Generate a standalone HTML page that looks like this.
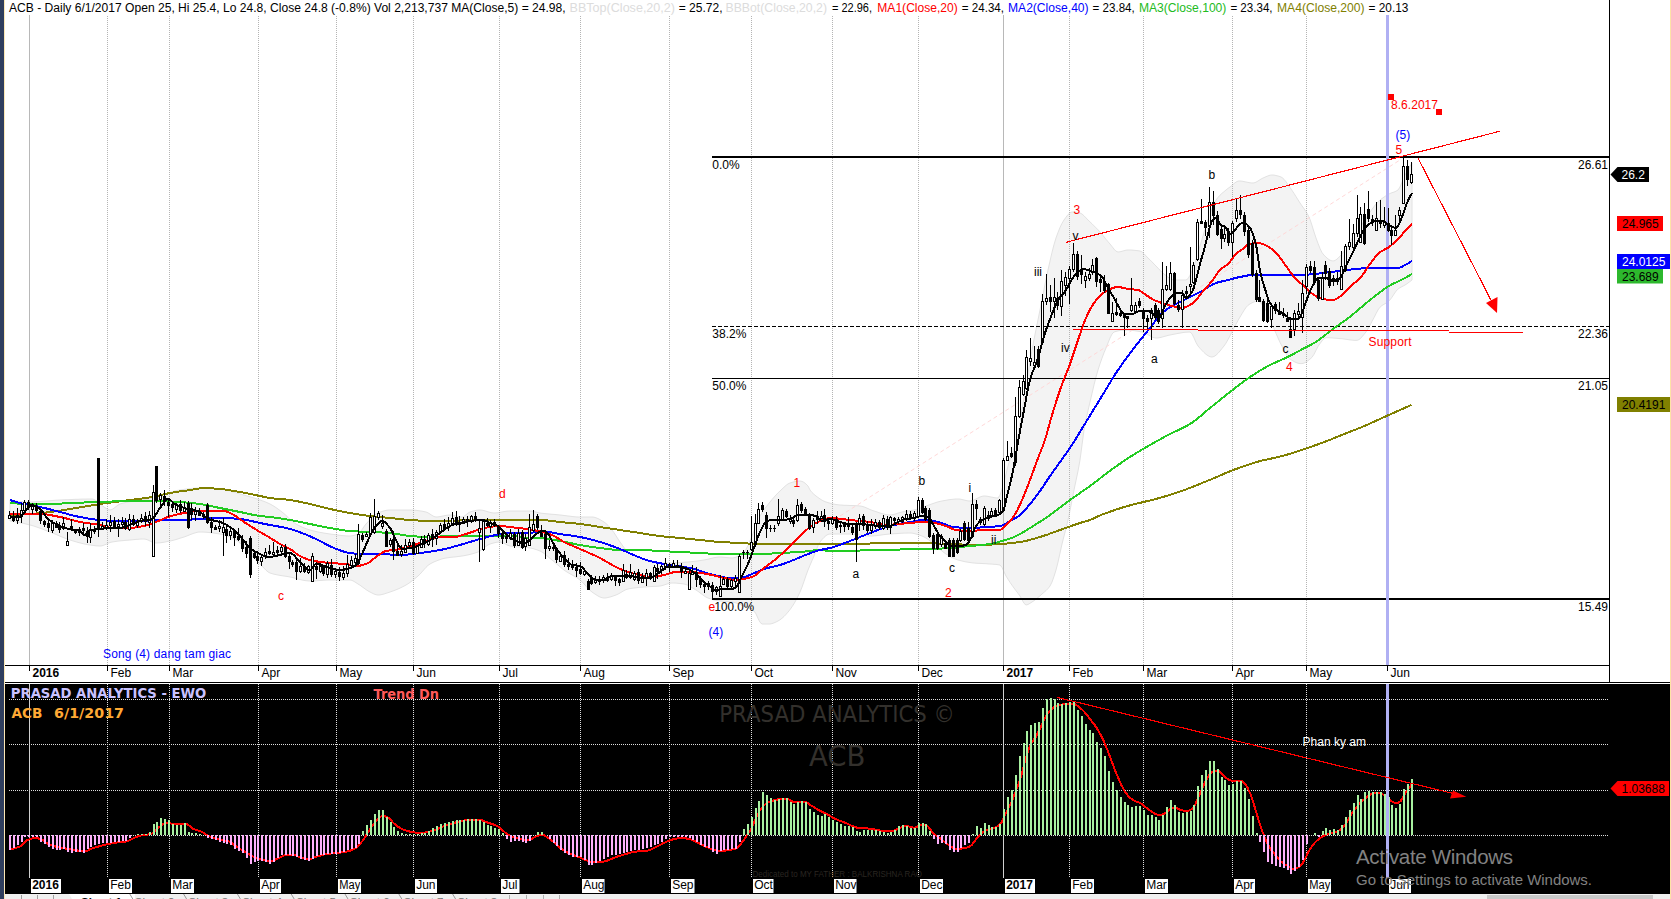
<!DOCTYPE html>
<html><head><meta charset="utf-8"><title>ACB - Daily</title>
<style>html,body{margin:0;padding:0;background:#fff;overflow:hidden}body{width:1671px;height:899px;position:relative}</style>
</head><body>
<svg width="1671" height="899" viewBox="0 0 1671 899" style="position:absolute;left:0;top:0;font-family:'Liberation Sans', sans-serif;font-size:12px">
<rect x="0" y="0" width="1671" height="899" fill="#fff"/>
<rect x="0" y="0" width="4" height="899" fill="#2f3e5e"/>
<rect x="4" y="0" width="1" height="899" fill="#fbe7b5"/>
<rect x="1670" y="0" width="1" height="899" fill="#fde3a7"/>
<path d="M10.0 500.0 L12.0 500.3 L14.0 500.6 L16.0 500.9 L18.0 501.2 L20.0 501.4 L22.0 501.6 L24.0 501.8 L26.0 501.9 L28.0 502.0 L30.0 502.0 L32.0 502.0 L34.0 501.9 L36.0 501.8 L38.0 501.7 L40.0 501.6 L42.0 501.4 L44.0 501.2 L46.0 501.1 L48.0 500.9 L50.0 500.7 L52.0 500.5 L54.0 500.4 L56.0 500.2 L58.0 500.1 L60.0 500.0 L62.0 499.9 L64.0 499.8 L66.0 499.7 L68.0 499.7 L70.0 499.6 L72.0 499.5 L74.0 499.4 L76.0 499.3 L78.0 499.3 L80.0 499.2 L82.0 499.1 L84.0 499.1 L86.0 499.1 L88.0 499.0 L90.0 499.0 L92.0 499.0 L94.0 499.4 L96.0 500.6 L98.0 502.2 L100.0 503.9 L102.0 505.6 L104.0 507.0 L106.0 508.3 L108.0 509.5 L110.0 510.0 L112.0 509.5 L114.0 508.2 L116.0 506.6 L118.0 505.0 L120.0 504.0 L122.0 503.4 L124.0 502.9 L126.0 502.4 L128.0 502.0 L130.0 501.6 L132.0 501.3 L134.0 501.0 L136.0 500.7 L138.0 500.4 L140.0 500.1 L142.0 499.8 L144.0 499.5 L146.0 499.2 L148.0 498.8 L150.0 498.4 L152.0 498.0 L154.0 497.5 L156.0 497.0 L158.0 496.4 L160.0 495.7 L162.0 495.1 L164.0 494.4 L166.0 493.7 L168.0 493.0 L170.0 492.4 L172.0 491.8 L174.0 491.2 L176.0 490.8 L178.0 490.3 L180.0 490.0 L182.0 489.7 L184.0 489.4 L186.0 489.1 L188.0 488.9 L190.0 488.6 L192.0 488.4 L194.0 488.3 L196.0 488.1 L198.0 488.0 L200.0 488.0 L202.0 488.0 L204.0 488.1 L206.0 488.1 L208.0 488.2 L210.0 488.3 L212.0 488.4 L214.0 488.5 L216.0 488.7 L218.0 488.8 L220.0 489.0 L222.0 489.2 L224.0 489.6 L226.0 490.0 L228.0 490.5 L230.0 491.0 L232.0 491.6 L234.0 492.2 L236.0 492.8 L238.0 493.4 L240.0 494.0 L242.0 494.5 L244.0 495.1 L246.0 495.7 L248.0 496.2 L250.0 496.8 L252.0 497.4 L254.0 498.0 L256.0 498.7 L258.0 499.3 L260.0 500.0 L262.0 500.7 L264.0 501.4 L266.0 502.2 L268.0 503.1 L270.0 504.0 L272.0 505.1 L274.0 506.3 L276.0 507.6 L278.0 509.0 L280.0 510.5 L282.0 512.0 L284.0 513.6 L286.0 515.4 L288.0 517.3 L290.0 519.3 L292.0 521.1 L294.0 522.7 L296.0 524.0 L298.0 525.1 L300.0 526.1 L302.0 527.1 L304.0 527.9 L306.0 528.7 L308.0 529.4 L310.0 530.0 L312.0 530.5 L314.0 531.0 L316.0 531.5 L318.0 532.0 L320.0 532.4 L322.0 532.7 L324.0 533.1 L326.0 533.4 L328.0 533.7 L330.0 534.0 L332.0 534.3 L334.0 534.5 L336.0 534.8 L338.0 535.1 L340.0 535.3 L342.0 535.6 L344.0 535.7 L346.0 535.9 L348.0 536.0 L350.0 536.0 L352.0 535.8 L354.0 535.4 L356.0 534.8 L358.0 534.0 L360.0 532.4 L362.0 529.7 L364.0 526.6 L366.0 524.0 L368.0 521.8 L370.0 519.6 L372.0 517.5 L374.0 515.6 L376.0 514.1 L378.0 513.0 L380.0 512.2 L382.0 511.5 L384.0 510.9 L386.0 510.4 L388.0 510.1 L390.0 510.0 L392.0 510.0 L394.0 510.0 L396.0 510.0 L398.0 510.0 L400.0 510.0 L402.0 510.0 L404.0 510.0 L406.0 510.0 L408.0 510.0 L410.0 510.0 L412.0 510.0 L414.0 510.2 L416.0 510.3 L418.0 510.6 L420.0 510.9 L422.0 511.2 L424.0 511.6 L426.0 512.0 L428.0 512.8 L430.0 514.1 L432.0 515.4 L434.0 516.5 L436.0 517.0 L438.0 516.9 L440.0 516.6 L442.0 516.2 L444.0 515.8 L446.0 515.4 L448.0 515.1 L450.0 515.0 L452.0 515.1 L454.0 515.5 L456.0 516.0 L458.0 516.5 L460.0 516.9 L462.0 517.0 L464.0 516.3 L466.0 514.8 L468.0 513.1 L470.0 512.0 L472.0 511.4 L474.0 510.9 L476.0 510.4 L478.0 510.1 L480.0 510.0 L482.0 510.2 L484.0 510.6 L486.0 511.2 L488.0 511.8 L490.0 512.4 L492.0 512.8 L494.0 513.0 L496.0 512.9 L498.0 512.7 L500.0 512.4 L502.0 512.0 L504.0 511.6 L506.0 511.3 L508.0 511.1 L510.0 511.0 L512.0 511.0 L514.0 511.0 L516.0 511.0 L518.0 511.0 L520.0 511.0 L522.0 511.0 L524.0 511.0 L526.0 511.0 L528.0 511.0 L530.0 511.0 L532.0 511.2 L534.0 511.6 L536.0 512.1 L538.0 512.6 L540.0 513.0 L542.0 513.3 L544.0 513.5 L546.0 513.7 L548.0 513.9 L550.0 514.1 L552.0 514.3 L554.0 514.4 L556.0 514.6 L558.0 514.8 L560.0 515.0 L562.0 515.2 L564.0 515.5 L566.0 515.7 L568.0 516.0 L570.0 516.2 L572.0 516.5 L574.0 516.7 L576.0 516.9 L578.0 517.0 L580.0 517.0 L582.0 517.0 L584.0 517.0 L586.0 517.0 L588.0 517.0 L590.0 517.0 L592.0 517.0 L594.0 517.2 L596.0 517.8 L598.0 518.6 L600.0 519.6 L602.0 520.8 L604.0 522.0 L606.0 523.5 L608.0 525.4 L610.0 527.6 L612.0 530.0 L614.0 532.7 L616.0 535.8 L618.0 539.0 L620.0 542.0 L622.0 544.8 L624.0 547.6 L626.0 550.1 L628.0 552.0 L630.0 553.4 L632.0 554.5 L634.0 555.5 L636.0 556.4 L638.0 557.2 L640.0 558.0 L642.0 558.8 L644.0 559.7 L646.0 560.4 L648.0 561.1 L650.0 561.7 L652.0 562.0 L654.0 562.2 L656.0 562.4 L658.0 562.6 L660.0 562.7 L662.0 562.8 L664.0 562.9 L666.0 563.0 L668.0 563.0 L670.0 563.0 L672.0 562.9 L674.0 562.9 L676.0 562.8 L678.0 562.7 L680.0 562.6 L682.0 562.4 L684.0 562.3 L686.0 562.1 L688.0 562.0 L690.0 561.8 L692.0 561.6 L694.0 561.4 L696.0 561.2 L698.0 560.9 L700.0 560.6 L702.0 560.3 L704.0 560.0 L706.0 559.6 L708.0 559.2 L710.0 558.7 L712.0 558.2 L714.0 557.7 L716.0 557.4 L718.0 557.1 L720.0 557.0 L722.0 557.1 L724.0 557.3 L726.0 557.5 L728.0 557.7 L730.0 557.9 L732.0 558.0 L734.0 557.8 L736.0 557.2 L738.0 556.2 L740.0 555.0 L742.0 553.6 L744.0 552.0 L746.0 549.4 L748.0 545.4 L750.0 540.7 L752.0 536.0 L754.0 531.1 L756.0 525.6 L758.0 520.3 L760.0 516.0 L762.0 512.6 L764.0 509.6 L766.0 507.0 L768.0 504.5 L770.0 502.0 L772.0 499.6 L774.0 497.2 L776.0 495.0 L778.0 492.9 L780.0 491.0 L782.0 489.1 L784.0 487.2 L786.0 485.4 L788.0 483.9 L790.0 483.0 L792.0 482.4 L794.0 481.8 L796.0 481.4 L798.0 481.1 L800.0 481.0 L802.0 481.4 L804.0 482.4 L806.0 484.0 L808.0 486.0 L810.0 490.0 L812.0 492.5 L814.0 494.4 L816.0 496.0 L818.0 497.5 L820.0 498.9 L822.0 500.2 L824.0 501.2 L826.0 502.0 L828.0 502.6 L830.0 503.2 L832.0 503.7 L834.0 504.1 L836.0 504.5 L838.0 504.8 L840.0 505.0 L842.0 505.1 L844.0 505.3 L846.0 505.3 L848.0 505.4 L850.0 505.5 L852.0 505.5 L854.0 505.6 L856.0 505.7 L858.0 505.8 L860.0 506.0 L862.0 506.3 L864.0 506.9 L866.0 507.7 L868.0 508.6 L870.0 509.5 L872.0 510.3 L874.0 511.0 L876.0 511.6 L878.0 512.3 L880.0 513.0 L882.0 513.6 L884.0 514.1 L886.0 514.6 L888.0 514.9 L890.0 515.0 L892.0 514.8 L894.0 514.4 L896.0 513.8 L898.0 513.1 L900.0 512.5 L902.0 512.0 L904.0 511.6 L906.0 511.3 L908.0 511.0 L910.0 510.7 L912.0 510.4 L914.0 510.0 L916.0 509.5 L918.0 508.9 L920.0 508.2 L922.0 507.4 L924.0 506.7 L926.0 506.0 L928.0 505.3 L930.0 504.6 L932.0 503.9 L934.0 503.2 L936.0 502.5 L938.0 501.9 L940.0 501.4 L942.0 501.0 L944.0 500.6 L946.0 500.3 L948.0 499.9 L950.0 499.6 L952.0 499.4 L954.0 499.2 L956.0 499.0 L958.0 499.0 L960.0 499.1 L962.0 499.5 L964.0 500.0 L966.0 500.5 L968.0 500.9 L970.0 501.0 L972.0 500.7 L974.0 500.0 L976.0 499.0 L978.0 498.0 L980.0 497.0 L982.0 496.3 L984.0 496.0 L986.0 496.1 L988.0 496.4 L990.0 496.8 L992.0 497.2 L994.0 497.6 L996.0 497.9 L998.0 498.0 L1000.0 495.2 L1002.0 489.2 L1004.0 482.6 L1006.0 474.1 L1008.0 466.0 L1010.0 459.5 L1012.0 453.6 L1014.0 448.0 L1016.0 443.0 L1018.0 435.6 L1020.0 423.2 L1022.0 410.0 L1024.0 397.8 L1026.0 385.5 L1028.0 373.2 L1030.0 361.3 L1032.0 350.0 L1034.0 339.5 L1036.0 329.6 L1038.0 319.8 L1040.0 310.0 L1042.0 299.8 L1044.0 289.4 L1046.0 279.4 L1048.0 270.0 L1050.0 261.1 L1052.0 252.4 L1054.0 244.6 L1056.0 238.0 L1058.0 232.5 L1060.0 227.5 L1062.0 223.3 L1064.0 220.0 L1066.0 217.2 L1068.0 214.6 L1070.0 212.7 L1072.0 212.0 L1074.0 212.1 L1076.0 212.3 L1078.0 212.6 L1080.0 213.0 L1082.0 214.0 L1084.0 215.8 L1086.0 217.9 L1088.0 220.0 L1090.0 221.9 L1092.0 223.8 L1094.0 225.8 L1096.0 227.8 L1098.0 229.8 L1100.0 232.0 L1102.0 234.3 L1104.0 236.8 L1106.0 239.3 L1108.0 241.7 L1110.0 244.0 L1112.0 246.5 L1114.0 249.1 L1116.0 251.2 L1118.0 252.0 L1120.0 251.8 L1122.0 251.3 L1124.0 250.7 L1126.0 250.2 L1128.0 250.0 L1130.0 250.0 L1132.0 250.1 L1134.0 250.3 L1136.0 250.5 L1138.0 250.7 L1140.0 251.0 L1142.0 251.9 L1144.0 253.7 L1146.0 255.9 L1148.0 258.0 L1150.0 259.9 L1152.0 261.9 L1154.0 264.0 L1156.0 266.0 L1158.0 268.1 L1160.0 270.2 L1162.0 272.3 L1164.0 274.0 L1166.0 275.6 L1168.0 277.2 L1170.0 278.6 L1172.0 279.6 L1174.0 280.0 L1176.0 280.0 L1178.0 280.0 L1180.0 280.0 L1182.0 280.0 L1184.0 280.0 L1186.0 280.0 L1188.0 278.7 L1190.0 275.3 L1192.0 270.8 L1194.0 266.0 L1196.0 260.2 L1198.0 253.1 L1200.0 246.0 L1202.0 239.3 L1204.0 232.5 L1206.0 226.0 L1208.0 220.0 L1210.0 214.2 L1212.0 208.6 L1214.0 203.7 L1216.0 200.0 L1218.0 197.4 L1220.0 195.2 L1222.0 193.3 L1224.0 191.7 L1226.0 190.0 L1228.0 188.4 L1230.0 187.0 L1232.0 185.4 L1234.0 183.6 L1236.0 182.1 L1238.0 181.1 L1240.0 181.0 L1242.0 181.2 L1244.0 181.6 L1246.0 182.0 L1248.0 182.4 L1250.0 182.8 L1252.0 183.0 L1254.0 182.9 L1256.0 182.2 L1258.0 181.0 L1260.0 179.7 L1262.0 178.5 L1264.0 177.6 L1266.0 176.7 L1268.0 175.9 L1270.0 175.2 L1272.0 175.0 L1274.0 175.1 L1276.0 175.5 L1278.0 176.0 L1280.0 176.6 L1282.0 177.5 L1284.0 179.3 L1286.0 181.8 L1288.0 184.6 L1290.0 187.6 L1292.0 190.4 L1294.0 193.4 L1296.0 196.6 L1298.0 199.8 L1300.0 203.0 L1302.0 205.9 L1304.0 208.7 L1306.0 211.6 L1308.0 215.0 L1310.0 219.4 L1312.0 225.4 L1314.0 232.0 L1316.0 238.0 L1318.0 243.4 L1320.0 248.5 L1322.0 252.6 L1324.0 255.1 L1326.0 257.1 L1328.0 258.9 L1330.0 260.2 L1332.0 260.9 L1334.0 260.9 L1336.0 259.9 L1338.0 258.2 L1340.0 256.1 L1342.0 254.0 L1344.0 251.5 L1346.0 248.3 L1348.0 244.9 L1350.0 241.5 L1352.0 238.5 L1354.0 235.7 L1356.0 233.0 L1358.0 230.3 L1360.0 227.5 L1362.0 224.5 L1364.0 221.3 L1366.0 218.1 L1368.0 214.9 L1370.0 212.0 L1372.0 209.3 L1374.0 206.6 L1376.0 204.1 L1378.0 201.9 L1380.0 200.1 L1382.0 198.5 L1384.0 197.1 L1386.0 195.7 L1388.0 194.6 L1390.0 193.5 L1392.0 192.7 L1394.0 192.1 L1396.0 191.2 L1398.0 190.0 L1400.0 187.0 L1402.0 182.2 L1404.0 177.1 L1406.0 173.1 L1408.0 169.5 L1410.0 166.1 L1412.0 163.0 L1412.0 280.0 L1410.0 281.5 L1408.0 283.0 L1406.0 284.4 L1404.0 285.6 L1402.0 286.6 L1400.0 287.7 L1398.0 289.0 L1396.0 291.2 L1394.0 294.1 L1392.0 297.2 L1390.0 299.9 L1388.0 301.8 L1386.0 303.1 L1384.0 304.3 L1382.0 305.5 L1380.0 307.2 L1378.0 309.9 L1376.0 313.7 L1374.0 317.7 L1372.0 321.3 L1370.0 325.2 L1368.0 328.9 L1366.0 331.9 L1364.0 334.4 L1362.0 336.8 L1360.0 338.9 L1358.0 340.1 L1356.0 340.4 L1354.0 340.3 L1352.0 340.1 L1350.0 339.9 L1348.0 339.6 L1346.0 339.3 L1344.0 339.0 L1342.0 338.7 L1340.0 338.6 L1338.0 338.4 L1336.0 338.2 L1334.0 338.1 L1332.0 337.9 L1330.0 337.8 L1328.0 337.7 L1326.0 337.7 L1324.0 338.7 L1322.0 340.9 L1320.0 343.6 L1318.0 346.4 L1316.0 350.3 L1314.0 354.3 L1312.0 357.3 L1310.0 359.1 L1308.0 360.7 L1306.0 362.1 L1304.0 363.1 L1302.0 363.6 L1300.0 363.6 L1298.0 363.2 L1296.0 362.5 L1294.0 361.5 L1292.0 360.3 L1290.0 359.0 L1288.0 356.8 L1286.0 353.7 L1284.0 350.1 L1282.0 346.2 L1280.0 342.3 L1278.0 337.9 L1276.0 333.3 L1274.0 328.7 L1272.0 324.1 L1270.0 319.2 L1268.0 314.6 L1266.0 310.6 L1264.0 307.5 L1262.0 304.4 L1260.0 302.0 L1258.0 301.0 L1256.0 301.2 L1254.0 301.9 L1252.0 302.8 L1250.0 303.9 L1248.0 305.3 L1246.0 307.5 L1244.0 310.4 L1242.0 313.7 L1240.0 317.0 L1238.0 320.5 L1236.0 324.2 L1234.0 328.0 L1232.0 331.8 L1230.0 335.8 L1228.0 339.6 L1226.0 343.1 L1224.0 346.0 L1222.0 348.5 L1220.0 351.0 L1218.0 353.3 L1216.0 355.2 L1214.0 356.5 L1212.0 357.0 L1210.0 356.7 L1208.0 355.7 L1206.0 354.3 L1204.0 352.5 L1202.0 350.5 L1200.0 348.3 L1198.0 346.0 L1196.0 342.5 L1194.0 337.9 L1192.0 333.8 L1190.0 332.0 L1188.0 332.1 L1186.0 332.2 L1184.0 332.4 L1182.0 332.7 L1180.0 333.1 L1178.0 333.4 L1176.0 333.8 L1174.0 334.2 L1172.0 334.6 L1170.0 335.0 L1168.0 335.4 L1166.0 336.0 L1164.0 336.5 L1162.0 337.1 L1160.0 337.6 L1158.0 337.9 L1156.0 338.0 L1154.0 337.7 L1152.0 337.0 L1150.0 335.9 L1148.0 334.7 L1146.0 333.6 L1144.0 332.6 L1142.0 332.0 L1140.0 331.6 L1138.0 331.2 L1136.0 330.9 L1134.0 330.6 L1132.0 330.4 L1130.0 330.2 L1128.0 330.0 L1126.0 330.0 L1124.0 330.1 L1122.0 330.2 L1120.0 330.5 L1118.0 330.9 L1116.0 331.4 L1114.0 332.0 L1112.0 334.0 L1110.0 338.0 L1108.0 343.0 L1106.0 348.0 L1104.0 352.8 L1102.0 358.1 L1100.0 363.8 L1098.0 370.0 L1096.0 377.0 L1094.0 384.9 L1092.0 393.4 L1090.0 402.0 L1088.0 410.5 L1086.0 419.5 L1084.0 430.0 L1082.0 444.9 L1080.0 460.0 L1078.0 471.0 L1076.0 480.5 L1074.0 490.0 L1072.0 500.2 L1070.0 510.5 L1068.0 520.0 L1066.0 528.3 L1064.0 536.1 L1062.0 544.0 L1060.0 553.0 L1058.0 562.2 L1056.0 570.0 L1054.0 576.4 L1052.0 582.0 L1050.0 586.0 L1048.0 588.6 L1046.0 590.6 L1044.0 592.3 L1042.0 594.0 L1040.0 595.8 L1038.0 597.5 L1036.0 599.2 L1034.0 600.7 L1032.0 602.0 L1030.0 603.3 L1028.0 604.5 L1026.0 605.0 L1024.0 603.3 L1022.0 599.6 L1020.0 596.0 L1018.0 593.3 L1016.0 590.7 L1014.0 588.0 L1012.0 585.2 L1010.0 582.3 L1008.0 579.2 L1006.0 576.0 L1004.0 571.8 L1002.0 567.3 L1000.0 565.0 L998.0 564.7 L996.0 564.4 L994.0 564.3 L992.0 564.1 L990.0 564.0 L988.0 563.9 L986.0 563.7 L984.0 563.6 L982.0 563.5 L980.0 563.4 L978.0 563.3 L976.0 563.2 L974.0 563.0 L972.0 562.8 L970.0 562.5 L968.0 562.2 L966.0 561.9 L964.0 561.5 L962.0 561.0 L960.0 560.5 L958.0 560.0 L956.0 559.3 L954.0 558.5 L952.0 557.5 L950.0 556.4 L948.0 555.2 L946.0 554.0 L944.0 552.6 L942.0 551.0 L940.0 549.2 L938.0 547.4 L936.0 545.6 L934.0 544.0 L932.0 542.5 L930.0 540.9 L928.0 539.4 L926.0 538.1 L924.0 536.9 L922.0 536.0 L920.0 535.3 L918.0 534.6 L916.0 534.0 L914.0 533.5 L912.0 533.1 L910.0 533.0 L908.0 533.0 L906.0 533.1 L904.0 533.1 L902.0 533.2 L900.0 533.3 L898.0 533.5 L896.0 533.6 L894.0 533.7 L892.0 533.9 L890.0 534.0 L888.0 534.2 L886.0 534.4 L884.0 534.6 L882.0 534.9 L880.0 535.2 L878.0 535.4 L876.0 535.7 L874.0 535.8 L872.0 536.0 L870.0 536.0 L868.0 535.9 L866.0 535.8 L864.0 535.6 L862.0 535.3 L860.0 535.0 L858.0 534.7 L856.0 534.4 L854.0 534.2 L852.0 534.1 L850.0 534.0 L848.0 534.0 L846.0 534.0 L844.0 534.0 L842.0 534.0 L840.0 534.0 L838.0 534.0 L836.0 534.0 L834.0 534.0 L832.0 534.0 L830.0 534.0 L828.0 534.4 L826.0 535.6 L824.0 537.4 L822.0 539.6 L820.0 542.0 L818.0 545.7 L816.0 550.8 L814.0 556.0 L812.0 560.6 L810.0 565.2 L808.0 570.0 L806.0 575.5 L804.0 581.4 L802.0 587.1 L800.0 592.0 L798.0 596.2 L796.0 600.1 L794.0 603.7 L792.0 606.8 L790.0 609.6 L788.0 612.1 L786.0 614.4 L784.0 616.5 L782.0 618.3 L780.0 619.8 L778.0 621.0 L776.0 622.0 L774.0 622.9 L772.0 623.6 L770.0 624.0 L768.0 624.0 L766.0 624.0 L764.0 624.0 L762.0 624.0 L760.0 622.3 L758.0 618.3 L756.0 613.9 L754.0 611.0 L752.0 609.6 L750.0 608.5 L748.0 607.6 L746.0 606.8 L744.0 606.0 L742.0 605.2 L740.0 604.4 L738.0 603.6 L736.0 602.9 L734.0 602.4 L732.0 602.0 L730.0 601.8 L728.0 601.6 L726.0 601.5 L724.0 601.4 L722.0 601.2 L720.0 601.0 L718.0 600.7 L716.0 600.3 L714.0 599.9 L712.0 599.3 L710.0 598.7 L708.0 598.0 L706.0 597.1 L704.0 595.8 L702.0 594.3 L700.0 592.8 L698.0 591.3 L696.0 590.0 L694.0 588.8 L692.0 587.6 L690.0 586.4 L688.0 585.3 L686.0 584.5 L684.0 584.0 L682.0 583.7 L680.0 583.5 L678.0 583.3 L676.0 583.1 L674.0 583.0 L672.0 583.0 L670.0 583.2 L668.0 583.7 L666.0 584.3 L664.0 585.0 L662.0 585.6 L660.0 586.0 L658.0 586.2 L656.0 586.3 L654.0 586.4 L652.0 586.5 L650.0 586.6 L648.0 586.7 L646.0 586.9 L644.0 587.0 L642.0 587.2 L640.0 587.3 L638.0 587.5 L636.0 587.8 L634.0 588.0 L632.0 588.3 L630.0 588.6 L628.0 589.0 L626.0 589.6 L624.0 590.6 L622.0 591.8 L620.0 593.0 L618.0 594.1 L616.0 595.0 L614.0 595.7 L612.0 596.4 L610.0 597.0 L608.0 597.5 L606.0 597.9 L604.0 598.0 L602.0 597.7 L600.0 597.0 L598.0 596.0 L596.0 594.7 L594.0 593.4 L592.0 592.0 L590.0 590.4 L588.0 588.4 L586.0 586.2 L584.0 583.9 L582.0 581.8 L580.0 580.0 L578.0 578.5 L576.0 577.2 L574.0 576.0 L572.0 574.9 L570.0 573.8 L568.0 572.6 L566.0 571.4 L564.0 570.0 L562.0 568.5 L560.0 566.8 L558.0 565.1 L556.0 563.4 L554.0 561.6 L552.0 560.0 L550.0 558.4 L548.0 556.6 L546.0 555.0 L544.0 553.4 L542.0 552.0 L540.0 551.0 L538.0 550.2 L536.0 549.5 L534.0 548.9 L532.0 548.4 L530.0 548.0 L528.0 547.7 L526.0 547.5 L524.0 547.3 L522.0 547.2 L520.0 547.0 L518.0 546.9 L516.0 546.7 L514.0 546.5 L512.0 546.3 L510.0 546.0 L508.0 545.4 L506.0 544.3 L504.0 543.2 L502.0 542.4 L500.0 542.0 L498.0 542.1 L496.0 542.4 L494.0 542.9 L492.0 543.4 L490.0 544.0 L488.0 544.9 L486.0 546.3 L484.0 547.9 L482.0 549.5 L480.0 551.0 L478.0 552.0 L476.0 552.7 L474.0 553.3 L472.0 553.9 L470.0 554.4 L468.0 554.9 L466.0 555.3 L464.0 555.7 L462.0 556.0 L460.0 556.3 L458.0 556.5 L456.0 556.8 L454.0 557.0 L452.0 557.2 L450.0 557.4 L448.0 557.7 L446.0 558.0 L444.0 558.4 L442.0 558.9 L440.0 559.6 L438.0 560.3 L436.0 561.1 L434.0 561.9 L432.0 562.9 L430.0 564.0 L428.0 565.4 L426.0 567.3 L424.0 569.6 L422.0 571.9 L420.0 574.1 L418.0 576.0 L416.0 577.7 L414.0 579.4 L412.0 580.9 L410.0 582.4 L408.0 583.8 L406.0 585.0 L404.0 586.1 L402.0 587.1 L400.0 588.1 L398.0 589.0 L396.0 589.8 L394.0 590.6 L392.0 591.3 L390.0 592.0 L388.0 592.7 L386.0 593.3 L384.0 594.0 L382.0 594.5 L380.0 594.9 L378.0 595.0 L376.0 594.7 L374.0 594.0 L372.0 593.0 L370.0 592.0 L368.0 590.9 L366.0 589.6 L364.0 588.1 L362.0 586.7 L360.0 585.2 L358.0 584.0 L356.0 582.7 L354.0 581.4 L352.0 580.4 L350.0 580.0 L348.0 580.0 L346.0 580.0 L344.0 580.0 L342.0 580.0 L340.0 580.0 L338.0 580.0 L336.0 580.0 L334.0 580.0 L332.0 580.0 L330.0 580.0 L328.0 580.0 L326.0 580.1 L324.0 580.2 L322.0 580.4 L320.0 580.5 L318.0 580.6 L316.0 580.8 L314.0 580.9 L312.0 581.0 L310.0 581.0 L308.0 580.9 L306.0 580.7 L304.0 580.4 L302.0 580.0 L300.0 579.5 L298.0 579.0 L296.0 578.5 L294.0 577.9 L292.0 577.4 L290.0 577.0 L288.0 576.6 L286.0 576.3 L284.0 576.0 L282.0 575.7 L280.0 575.4 L278.0 575.0 L276.0 574.6 L274.0 574.2 L272.0 573.6 L270.0 573.0 L268.0 571.9 L266.0 570.2 L264.0 568.2 L262.0 566.0 L260.0 564.0 L258.0 562.1 L256.0 560.1 L254.0 558.1 L252.0 556.0 L250.0 554.0 L248.0 551.9 L246.0 549.6 L244.0 547.3 L242.0 545.1 L240.0 543.1 L238.0 541.3 L236.0 540.0 L234.0 538.9 L232.0 537.9 L230.0 537.0 L228.0 536.2 L226.0 535.5 L224.0 534.9 L222.0 534.4 L220.0 534.0 L218.0 533.7 L216.0 533.4 L214.0 533.1 L212.0 532.8 L210.0 532.6 L208.0 532.4 L206.0 532.2 L204.0 532.1 L202.0 532.0 L200.0 532.0 L198.0 532.1 L196.0 532.6 L194.0 533.2 L192.0 533.9 L190.0 534.7 L188.0 535.5 L186.0 536.3 L184.0 537.0 L182.0 537.6 L180.0 538.2 L178.0 538.9 L176.0 539.5 L174.0 540.1 L172.0 540.6 L170.0 541.0 L168.0 541.4 L166.0 541.8 L164.0 542.2 L162.0 542.5 L160.0 542.8 L158.0 542.9 L156.0 543.0 L154.0 542.7 L152.0 542.0 L150.0 541.0 L148.0 540.0 L146.0 539.3 L144.0 539.0 L142.0 539.0 L140.0 539.1 L138.0 539.3 L136.0 539.4 L134.0 539.6 L132.0 539.8 L130.0 540.0 L128.0 540.2 L126.0 540.3 L124.0 540.5 L122.0 540.7 L120.0 540.9 L118.0 541.1 L116.0 541.4 L114.0 541.7 L112.0 542.0 L110.0 542.5 L108.0 543.3 L106.0 544.3 L104.0 545.1 L102.0 545.8 L100.0 546.0 L98.0 545.9 L96.0 545.8 L94.0 545.5 L92.0 545.3 L90.0 545.0 L88.0 544.7 L86.0 544.3 L84.0 543.9 L82.0 543.4 L80.0 542.9 L78.0 542.4 L76.0 541.8 L74.0 541.2 L72.0 540.6 L70.0 540.0 L68.0 539.3 L66.0 538.6 L64.0 537.8 L62.0 537.0 L60.0 536.2 L58.0 535.3 L56.0 534.4 L54.0 533.6 L52.0 532.8 L50.0 532.0 L48.0 531.2 L46.0 530.5 L44.0 529.7 L42.0 528.9 L40.0 528.2 L38.0 527.5 L36.0 526.8 L34.0 526.1 L32.0 525.5 L30.0 525.0 L28.0 524.5 L26.0 524.0 L24.0 523.5 L22.0 523.1 L20.0 522.7 L18.0 522.3 L16.0 521.9 L14.0 521.6 L12.0 521.3 L10.0 521.0Z" fill="#f3f3f3" stroke="#e2e2e2" stroke-width="1"/>
<rect x="29" y="15" width="1" height="650" fill="#b8b8b8"/><line x1="107.5" y1="16" x2="107.5" y2="665" stroke="#b4b4b4" stroke-width="1" stroke-dasharray="1 1"/><line x1="169.5" y1="16" x2="169.5" y2="665" stroke="#b4b4b4" stroke-width="1" stroke-dasharray="1 1"/><line x1="258.5" y1="16" x2="258.5" y2="665" stroke="#b4b4b4" stroke-width="1" stroke-dasharray="1 1"/><line x1="336.5" y1="16" x2="336.5" y2="665" stroke="#b4b4b4" stroke-width="1" stroke-dasharray="1 1"/><line x1="413.5" y1="16" x2="413.5" y2="665" stroke="#b4b4b4" stroke-width="1" stroke-dasharray="1 1"/><line x1="499.5" y1="16" x2="499.5" y2="665" stroke="#b4b4b4" stroke-width="1" stroke-dasharray="1 1"/><line x1="580.5" y1="16" x2="580.5" y2="665" stroke="#b4b4b4" stroke-width="1" stroke-dasharray="1 1"/><line x1="669.5" y1="16" x2="669.5" y2="665" stroke="#b4b4b4" stroke-width="1" stroke-dasharray="1 1"/><line x1="751.5" y1="16" x2="751.5" y2="665" stroke="#b4b4b4" stroke-width="1" stroke-dasharray="1 1"/><line x1="832.5" y1="16" x2="832.5" y2="665" stroke="#b4b4b4" stroke-width="1" stroke-dasharray="1 1"/><line x1="918.5" y1="16" x2="918.5" y2="665" stroke="#b4b4b4" stroke-width="1" stroke-dasharray="1 1"/><rect x="1003" y="15" width="1" height="650" fill="#b8b8b8"/><line x1="1069.5" y1="16" x2="1069.5" y2="665" stroke="#b4b4b4" stroke-width="1" stroke-dasharray="1 1"/><line x1="1143.5" y1="16" x2="1143.5" y2="665" stroke="#b4b4b4" stroke-width="1" stroke-dasharray="1 1"/><line x1="1232.5" y1="16" x2="1232.5" y2="665" stroke="#b4b4b4" stroke-width="1" stroke-dasharray="1 1"/><line x1="1306.5" y1="16" x2="1306.5" y2="665" stroke="#b4b4b4" stroke-width="1" stroke-dasharray="1 1"/>
<line x1="840" y1="516" x2="1400" y2="160" stroke="#ffd8d8" stroke-width="1" stroke-dasharray="4 3"/>
<rect x="712" y="156" width="897" height="2" fill="#000"/>
<line x1="712" y1="326.5" x2="1609" y2="326.5" stroke="#000" stroke-width="1" stroke-dasharray="4 2" shape-rendering="crispEdges"/>
<rect x="712" y="378" width="897" height="1" fill="#000"/>
<rect x="712" y="598" width="897" height="2" fill="#000"/>
<rect x="1386" y="15" width="3" height="650" fill="#b0b0f3"/>
<path d="M10.0 515.0 L12.0 514.9 L14.0 514.9 L16.0 514.8 L18.0 514.7 L20.0 514.6 L22.0 514.5 L24.0 514.4 L26.0 514.3 L28.0 514.1 L30.0 514.0 L32.0 513.9 L34.0 513.7 L36.0 513.5 L38.0 513.3 L40.0 513.1 L42.0 512.9 L44.0 512.7 L46.0 512.5 L48.0 512.2 L50.0 512.0 L52.0 511.7 L54.0 511.5 L56.0 511.2 L58.0 510.9 L60.0 510.6 L62.0 510.3 L64.0 510.0 L66.0 509.6 L68.0 509.3 L70.0 509.0 L72.0 508.7 L74.0 508.4 L76.0 508.0 L78.0 507.7 L80.0 507.3 L82.0 507.0 L84.0 506.6 L86.0 506.3 L88.0 505.9 L90.0 505.6 L92.0 505.3 L94.0 504.9 L96.0 504.6 L98.0 504.3 L100.0 504.0 L102.0 503.7 L104.0 503.4 L106.0 503.1 L108.0 502.9 L110.0 502.6 L112.0 502.3 L114.0 502.1 L116.0 501.8 L118.0 501.6 L120.0 501.3 L122.0 501.1 L124.0 500.8 L126.0 500.5 L128.0 500.3 L130.0 500.0 L132.0 499.7 L134.0 499.5 L136.0 499.2 L138.0 499.0 L140.0 498.7 L142.0 498.5 L144.0 498.2 L146.0 497.9 L148.0 497.6 L150.0 497.3 L152.0 497.0 L154.0 496.6 L156.0 496.2 L158.0 495.7 L160.0 495.3 L162.0 494.8 L164.0 494.3 L166.0 493.8 L168.0 493.4 L170.0 493.0 L172.0 492.7 L174.0 492.3 L176.0 492.0 L178.0 491.7 L180.0 491.4 L182.0 491.1 L184.0 490.9 L186.0 490.6 L188.0 490.3 L190.0 490.0 L192.0 489.7 L194.0 489.3 L196.0 488.9 L198.0 488.6 L200.0 488.3 L202.0 488.1 L204.0 488.0 L206.0 488.0 L208.0 488.1 L210.0 488.2 L212.0 488.3 L214.0 488.5 L216.0 488.6 L218.0 488.8 L220.0 489.0 L222.0 489.2 L224.0 489.4 L226.0 489.7 L228.0 490.0 L230.0 490.3 L232.0 490.6 L234.0 491.0 L236.0 491.3 L238.0 491.7 L240.0 492.0 L242.0 492.4 L244.0 492.7 L246.0 493.1 L248.0 493.5 L250.0 493.9 L252.0 494.3 L254.0 494.8 L256.0 495.2 L258.0 495.6 L260.0 496.0 L262.0 496.4 L264.0 496.9 L266.0 497.3 L268.0 497.7 L270.0 498.0 L272.0 498.3 L274.0 498.5 L276.0 498.7 L278.0 498.8 L280.0 499.0 L282.0 499.2 L284.0 499.4 L286.0 499.5 L288.0 499.8 L290.0 500.0 L292.0 500.3 L294.0 500.6 L296.0 501.0 L298.0 501.4 L300.0 501.8 L302.0 502.2 L304.0 502.7 L306.0 503.1 L308.0 503.6 L310.0 504.0 L312.0 504.5 L314.0 504.9 L316.0 505.5 L318.0 506.0 L320.0 506.5 L322.0 507.0 L324.0 507.5 L326.0 508.1 L328.0 508.5 L330.0 509.0 L332.0 509.4 L334.0 509.9 L336.0 510.3 L338.0 510.7 L340.0 511.1 L342.0 511.5 L344.0 511.9 L346.0 512.3 L348.0 512.7 L350.0 513.0 L352.0 513.3 L354.0 513.7 L356.0 514.0 L358.0 514.3 L360.0 514.6 L362.0 514.9 L364.0 515.2 L366.0 515.5 L368.0 515.8 L370.0 516.0 L372.0 516.2 L374.0 516.5 L376.0 516.7 L378.0 516.9 L380.0 517.0 L382.0 517.2 L384.0 517.4 L386.0 517.6 L388.0 517.8 L390.0 518.0 L392.0 518.2 L394.0 518.4 L396.0 518.6 L398.0 518.9 L400.0 519.1 L402.0 519.3 L404.0 519.5 L406.0 519.7 L408.0 519.9 L410.0 520.0 L412.0 520.1 L414.0 520.3 L416.0 520.4 L418.0 520.5 L420.0 520.7 L422.0 520.8 L424.0 520.9 L426.0 520.9 L428.0 521.0 L430.0 521.0 L432.0 521.0 L434.0 521.0 L436.0 521.0 L438.0 521.0 L440.0 521.0 L442.0 521.0 L444.0 521.0 L446.0 521.0 L448.0 521.0 L450.0 521.0 L452.0 521.0 L454.0 520.9 L456.0 520.8 L458.0 520.6 L460.0 520.5 L462.0 520.4 L464.0 520.2 L466.0 520.1 L468.0 520.0 L470.0 520.0 L472.0 520.0 L474.0 520.0 L476.0 520.0 L478.0 520.0 L480.0 520.0 L482.0 520.0 L484.0 520.0 L486.0 520.0 L488.0 520.0 L490.0 520.0 L492.0 520.0 L494.0 520.0 L496.0 520.0 L498.0 520.0 L500.0 520.0 L502.0 520.0 L504.0 520.0 L506.0 520.0 L508.0 520.0 L510.0 520.0 L512.0 520.0 L514.0 520.0 L516.0 520.0 L518.0 520.0 L520.0 520.0 L522.0 520.0 L524.0 520.0 L526.0 520.0 L528.0 520.0 L530.0 520.0 L532.0 520.0 L534.0 520.0 L536.0 520.0 L538.0 520.0 L540.0 520.0 L542.0 520.0 L544.0 520.1 L546.0 520.3 L548.0 520.5 L550.0 520.8 L552.0 521.0 L554.0 521.3 L556.0 521.5 L558.0 521.8 L560.0 522.0 L562.0 522.2 L564.0 522.4 L566.0 522.6 L568.0 522.8 L570.0 522.9 L572.0 523.1 L574.0 523.3 L576.0 523.5 L578.0 523.8 L580.0 524.0 L582.0 524.3 L584.0 524.5 L586.0 524.8 L588.0 525.1 L590.0 525.4 L592.0 525.7 L594.0 526.1 L596.0 526.4 L598.0 526.7 L600.0 527.0 L602.0 527.3 L604.0 527.6 L606.0 527.9 L608.0 528.2 L610.0 528.5 L612.0 528.8 L614.0 529.1 L616.0 529.4 L618.0 529.7 L620.0 530.0 L622.0 530.3 L624.0 530.6 L626.0 530.9 L628.0 531.2 L630.0 531.5 L632.0 531.8 L634.0 532.1 L636.0 532.4 L638.0 532.7 L640.0 533.0 L642.0 533.3 L644.0 533.6 L646.0 533.9 L648.0 534.3 L650.0 534.6 L652.0 534.9 L654.0 535.2 L656.0 535.5 L658.0 535.7 L660.0 536.0 L662.0 536.2 L664.0 536.5 L666.0 536.7 L668.0 536.9 L670.0 537.0 L672.0 537.2 L674.0 537.4 L676.0 537.6 L678.0 537.8 L680.0 538.0 L682.0 538.2 L684.0 538.4 L686.0 538.6 L688.0 538.8 L690.0 539.0 L692.0 539.2 L694.0 539.4 L696.0 539.6 L698.0 539.8 L700.0 540.0 L702.0 540.2 L704.0 540.4 L706.0 540.6 L708.0 540.9 L710.0 541.1 L712.0 541.3 L714.0 541.5 L716.0 541.7 L718.0 541.9 L720.0 542.0 L722.0 542.1 L724.0 542.2 L726.0 542.3 L728.0 542.4 L730.0 542.5 L732.0 542.6 L734.0 542.7 L736.0 542.8 L738.0 542.9 L740.0 543.0 L742.0 543.1 L744.0 543.2 L746.0 543.4 L748.0 543.5 L750.0 543.6 L752.0 543.7 L754.0 543.8 L756.0 543.9 L758.0 544.0 L760.0 544.0 L762.0 544.0 L764.0 544.0 L766.0 544.0 L768.0 544.0 L770.0 544.0 L772.0 544.0 L774.0 544.0 L776.0 544.0 L778.0 544.0 L780.0 544.0 L782.0 544.0 L784.0 544.0 L786.0 544.0 L788.0 544.0 L790.0 544.0 L792.0 544.0 L794.0 544.0 L796.0 544.0 L798.0 544.0 L800.0 544.0 L802.0 544.0 L804.0 544.0 L806.0 544.0 L808.0 544.0 L810.0 544.0 L812.0 544.0 L814.0 544.0 L816.0 544.0 L818.0 544.0 L820.0 544.0 L822.0 544.0 L824.0 544.0 L826.0 544.0 L828.0 544.0 L830.0 544.0 L832.0 544.0 L834.0 544.0 L836.0 544.0 L838.0 544.0 L840.0 544.0 L842.0 544.0 L844.0 544.0 L846.0 544.0 L848.0 544.0 L850.0 544.0 L852.0 544.0 L854.0 544.0 L856.0 543.9 L858.0 543.9 L860.0 543.8 L862.0 543.8 L864.0 543.7 L866.0 543.6 L868.0 543.6 L870.0 543.5 L872.0 543.4 L874.0 543.4 L876.0 543.3 L878.0 543.2 L880.0 543.2 L882.0 543.1 L884.0 543.1 L886.0 543.0 L888.0 543.0 L890.0 543.0 L892.0 543.0 L894.0 543.0 L896.0 543.0 L898.0 543.0 L900.0 543.0 L902.0 543.0 L904.0 543.0 L906.0 543.0 L908.0 543.0 L910.0 543.0 L912.0 543.0 L914.0 543.0 L916.0 543.0 L918.0 543.0 L920.0 543.0 L922.0 543.0 L924.0 543.0 L926.0 543.1 L928.0 543.1 L930.0 543.2 L932.0 543.3 L934.0 543.3 L936.0 543.4 L938.0 543.5 L940.0 543.6 L942.0 543.7 L944.0 543.8 L946.0 543.9 L948.0 543.9 L950.0 544.0 L952.0 544.1 L954.0 544.1 L956.0 544.2 L958.0 544.3 L960.0 544.4 L962.0 544.5 L964.0 544.6 L966.0 544.7 L968.0 544.7 L970.0 544.8 L972.0 544.9 L974.0 544.9 L976.0 545.0 L978.0 545.0 L980.0 545.0 L982.0 545.0 L984.0 544.9 L986.0 544.9 L988.0 544.8 L990.0 544.7 L992.0 544.5 L994.0 544.4 L996.0 544.3 L998.0 544.1 L1000.0 544.0 L1002.0 543.9 L1004.0 543.7 L1006.0 543.6 L1008.0 543.4 L1010.0 543.2 L1012.0 543.0 L1014.0 542.8 L1016.0 542.5 L1018.0 542.3 L1020.0 542.0 L1022.0 541.7 L1024.0 541.3 L1026.0 540.9 L1028.0 540.4 L1030.0 539.9 L1032.0 539.3 L1034.0 538.8 L1036.0 538.2 L1038.0 537.6 L1040.0 537.0 L1042.0 536.4 L1044.0 535.7 L1046.0 535.1 L1048.0 534.4 L1050.0 533.6 L1052.0 532.9 L1054.0 532.2 L1056.0 531.4 L1058.0 530.7 L1060.0 530.0 L1062.0 529.3 L1064.0 528.6 L1066.0 527.9 L1068.0 527.1 L1070.0 526.4 L1072.0 525.7 L1074.0 525.0 L1076.0 524.3 L1078.0 523.7 L1080.0 523.0 L1082.0 522.4 L1084.0 521.8 L1086.0 521.3 L1088.0 520.7 L1090.0 520.0 L1092.0 519.2 L1094.0 518.3 L1096.0 517.3 L1098.0 516.3 L1100.0 515.4 L1102.0 514.6 L1104.0 513.9 L1106.0 513.1 L1108.0 512.4 L1110.0 511.7 L1112.0 511.0 L1114.0 510.3 L1116.0 509.6 L1118.0 509.0 L1120.0 508.3 L1122.0 507.7 L1124.0 507.1 L1126.0 506.5 L1128.0 505.9 L1130.0 505.4 L1132.0 504.8 L1134.0 504.3 L1136.0 503.8 L1138.0 503.3 L1140.0 502.8 L1142.0 502.4 L1144.0 501.9 L1146.0 501.4 L1148.0 501.0 L1150.0 500.5 L1152.0 500.0 L1154.0 499.5 L1156.0 499.0 L1158.0 498.4 L1160.0 497.8 L1162.0 497.3 L1164.0 496.7 L1166.0 496.1 L1168.0 495.4 L1170.0 494.8 L1172.0 494.2 L1174.0 493.5 L1176.0 492.8 L1178.0 492.2 L1180.0 491.5 L1182.0 490.8 L1184.0 490.1 L1186.0 489.4 L1188.0 488.6 L1190.0 487.8 L1192.0 487.1 L1194.0 486.3 L1196.0 485.5 L1198.0 484.7 L1200.0 483.9 L1202.0 483.0 L1204.0 482.2 L1206.0 481.4 L1208.0 480.6 L1210.0 479.8 L1212.0 479.0 L1214.0 478.1 L1216.0 477.3 L1218.0 476.4 L1220.0 475.5 L1222.0 474.7 L1224.0 473.8 L1226.0 472.9 L1228.0 472.1 L1230.0 471.3 L1232.0 470.5 L1234.0 469.7 L1236.0 469.0 L1238.0 468.3 L1240.0 467.5 L1242.0 466.8 L1244.0 466.1 L1246.0 465.4 L1248.0 464.8 L1250.0 464.1 L1252.0 463.5 L1254.0 462.8 L1256.0 462.2 L1258.0 461.7 L1260.0 461.1 L1262.0 460.6 L1264.0 460.1 L1266.0 459.7 L1268.0 459.2 L1270.0 458.8 L1272.0 458.4 L1274.0 458.0 L1276.0 457.5 L1278.0 457.1 L1280.0 456.6 L1282.0 456.1 L1284.0 455.6 L1286.0 455.0 L1288.0 454.4 L1290.0 453.8 L1292.0 453.2 L1294.0 452.5 L1296.0 451.8 L1298.0 451.2 L1300.0 450.5 L1302.0 449.8 L1304.0 449.1 L1306.0 448.5 L1308.0 447.8 L1310.0 447.1 L1312.0 446.4 L1314.0 445.7 L1316.0 445.0 L1318.0 444.3 L1320.0 443.6 L1322.0 442.8 L1324.0 442.1 L1326.0 441.3 L1328.0 440.5 L1330.0 439.8 L1332.0 439.0 L1334.0 438.2 L1336.0 437.3 L1338.0 436.5 L1340.0 435.7 L1342.0 434.9 L1344.0 434.1 L1346.0 433.3 L1348.0 432.5 L1350.0 431.7 L1352.0 430.9 L1354.0 430.2 L1356.0 429.4 L1358.0 428.6 L1360.0 427.8 L1362.0 427.0 L1364.0 426.1 L1366.0 425.3 L1368.0 424.4 L1370.0 423.5 L1372.0 422.6 L1374.0 421.7 L1376.0 420.8 L1378.0 419.9 L1380.0 419.0 L1382.0 418.1 L1384.0 417.1 L1386.0 416.2 L1388.0 415.3 L1390.0 414.4 L1392.0 413.5 L1394.0 412.7 L1396.0 411.8 L1398.0 410.9 L1400.0 410.0 L1402.0 409.1 L1404.0 408.2 L1406.0 407.3 L1408.0 406.4 L1410.0 405.5 L1411.6 404.8" fill="none" stroke="#808000" stroke-width="2" stroke-linejoin="round" shape-rendering="crispEdges"/>
<path d="M10.0 503.0 L12.0 503.1 L14.0 503.3 L16.0 503.4 L18.0 503.6 L20.0 503.7 L22.0 503.8 L24.0 503.9 L26.0 503.9 L28.0 504.0 L30.0 504.0 L32.0 504.0 L34.0 504.0 L36.0 504.0 L38.0 504.0 L40.0 504.0 L42.0 504.0 L44.0 504.0 L46.0 504.0 L48.0 504.0 L50.0 504.0 L52.0 504.0 L54.0 503.9 L56.0 503.8 L58.0 503.7 L60.0 503.6 L62.0 503.5 L64.0 503.3 L66.0 503.2 L68.0 503.1 L70.0 503.0 L72.0 502.9 L74.0 502.8 L76.0 502.8 L78.0 502.7 L80.0 502.6 L82.0 502.6 L84.0 502.5 L86.0 502.4 L88.0 502.4 L90.0 502.3 L92.0 502.3 L94.0 502.2 L96.0 502.1 L98.0 502.1 L100.0 502.0 L102.0 501.9 L104.0 501.9 L106.0 501.8 L108.0 501.7 L110.0 501.6 L112.0 501.5 L114.0 501.4 L116.0 501.3 L118.0 501.3 L120.0 501.2 L122.0 501.1 L124.0 501.1 L126.0 501.0 L128.0 501.0 L130.0 501.0 L132.0 501.0 L134.0 501.0 L136.0 501.0 L138.0 501.0 L140.0 501.0 L142.0 501.0 L144.0 501.0 L146.0 501.0 L148.0 501.0 L150.0 501.0 L152.0 501.0 L154.0 501.0 L156.0 501.0 L158.0 501.0 L160.0 501.0 L162.0 501.0 L164.0 501.1 L166.0 501.1 L168.0 501.2 L170.0 501.3 L172.0 501.5 L174.0 501.6 L176.0 501.7 L178.0 501.9 L180.0 502.0 L182.0 502.1 L184.0 502.3 L186.0 502.5 L188.0 502.6 L190.0 502.8 L192.0 503.0 L194.0 503.3 L196.0 503.5 L198.0 503.7 L200.0 504.0 L202.0 504.3 L204.0 504.6 L206.0 505.0 L208.0 505.4 L210.0 505.8 L212.0 506.3 L214.0 506.7 L216.0 507.2 L218.0 507.6 L220.0 508.0 L222.0 508.4 L224.0 508.8 L226.0 509.2 L228.0 509.6 L230.0 510.0 L232.0 510.4 L234.0 510.8 L236.0 511.2 L238.0 511.6 L240.0 512.0 L242.0 512.4 L244.0 512.8 L246.0 513.3 L248.0 513.7 L250.0 514.2 L252.0 514.6 L254.0 515.0 L256.0 515.4 L258.0 515.7 L260.0 516.0 L262.0 516.2 L264.0 516.4 L266.0 516.6 L268.0 516.8 L270.0 517.0 L272.0 517.2 L274.0 517.5 L276.0 517.8 L278.0 518.1 L280.0 518.4 L282.0 518.7 L284.0 519.0 L286.0 519.3 L288.0 519.7 L290.0 520.0 L292.0 520.4 L294.0 520.7 L296.0 521.1 L298.0 521.5 L300.0 521.9 L302.0 522.3 L304.0 522.8 L306.0 523.2 L308.0 523.6 L310.0 524.0 L312.0 524.4 L314.0 524.8 L316.0 525.2 L318.0 525.7 L320.0 526.1 L322.0 526.5 L324.0 526.9 L326.0 527.3 L328.0 527.6 L330.0 528.0 L332.0 528.3 L334.0 528.7 L336.0 529.1 L338.0 529.4 L340.0 529.7 L342.0 530.1 L344.0 530.3 L346.0 530.6 L348.0 530.8 L350.0 531.0 L352.0 531.1 L354.0 531.3 L356.0 531.4 L358.0 531.5 L360.0 531.6 L362.0 531.6 L364.0 531.7 L366.0 531.8 L368.0 531.9 L370.0 532.0 L372.0 532.1 L374.0 532.2 L376.0 532.3 L378.0 532.4 L380.0 532.4 L382.0 532.5 L384.0 532.6 L386.0 532.7 L388.0 532.9 L390.0 533.0 L392.0 533.2 L394.0 533.5 L396.0 533.8 L398.0 534.1 L400.0 534.5 L402.0 534.9 L404.0 535.2 L406.0 535.5 L408.0 535.8 L410.0 536.0 L412.0 536.1 L414.0 536.3 L416.0 536.4 L418.0 536.6 L420.0 536.7 L422.0 536.8 L424.0 536.9 L426.0 536.9 L428.0 537.0 L430.0 537.0 L432.0 537.0 L434.0 536.9 L436.0 536.8 L438.0 536.6 L440.0 536.5 L442.0 536.4 L444.0 536.2 L446.0 536.1 L448.0 536.0 L450.0 536.0 L452.0 536.0 L454.0 536.0 L456.0 536.0 L458.0 536.0 L460.0 536.0 L462.0 536.0 L464.0 536.0 L466.0 536.0 L468.0 536.0 L470.0 536.0 L472.0 536.0 L474.0 536.0 L476.0 536.0 L478.0 536.0 L480.0 536.0 L482.0 536.0 L484.0 536.0 L486.0 536.0 L488.0 536.0 L490.0 536.0 L492.0 536.0 L494.0 536.0 L496.0 536.0 L498.0 536.0 L500.0 536.0 L502.0 536.0 L504.0 536.0 L506.0 536.0 L508.0 536.0 L510.0 536.0 L512.0 536.1 L514.0 536.2 L516.0 536.4 L518.0 536.7 L520.0 537.0 L522.0 537.3 L524.0 537.6 L526.0 537.8 L528.0 537.9 L530.0 538.0 L532.0 538.0 L534.0 538.0 L536.0 538.0 L538.0 538.0 L540.0 538.0 L542.0 538.1 L544.0 538.2 L546.0 538.4 L548.0 538.7 L550.0 539.1 L552.0 539.5 L554.0 539.8 L556.0 540.2 L558.0 540.6 L560.0 541.0 L562.0 541.4 L564.0 541.7 L566.0 542.2 L568.0 542.6 L570.0 543.0 L572.0 543.4 L574.0 543.8 L576.0 544.3 L578.0 544.6 L580.0 545.0 L582.0 545.3 L584.0 545.7 L586.0 546.0 L588.0 546.3 L590.0 546.6 L592.0 546.9 L594.0 547.2 L596.0 547.5 L598.0 547.8 L600.0 548.0 L602.0 548.3 L604.0 548.5 L606.0 548.8 L608.0 549.0 L610.0 549.3 L612.0 549.5 L614.0 549.7 L616.0 549.9 L618.0 550.0 L620.0 550.0 L622.0 550.0 L624.0 550.0 L626.0 550.0 L628.0 550.0 L630.0 550.0 L632.0 550.0 L634.0 550.0 L636.0 550.0 L638.0 550.0 L640.0 550.0 L642.0 550.0 L644.0 550.1 L646.0 550.2 L648.0 550.3 L650.0 550.4 L652.0 550.5 L654.0 550.6 L656.0 550.8 L658.0 550.9 L660.0 551.0 L662.0 551.1 L664.0 551.2 L666.0 551.3 L668.0 551.4 L670.0 551.5 L672.0 551.6 L674.0 551.7 L676.0 551.8 L678.0 551.9 L680.0 552.0 L682.0 552.1 L684.0 552.2 L686.0 552.3 L688.0 552.4 L690.0 552.5 L692.0 552.6 L694.0 552.7 L696.0 552.8 L698.0 552.9 L700.0 553.0 L702.0 553.1 L704.0 553.2 L706.0 553.4 L708.0 553.5 L710.0 553.6 L712.0 553.7 L714.0 553.8 L716.0 553.9 L718.0 554.0 L720.0 554.0 L722.0 554.0 L724.0 554.0 L726.0 554.0 L728.0 554.0 L730.0 554.0 L732.0 554.0 L734.0 554.0 L736.0 554.0 L738.0 554.0 L740.0 554.0 L742.0 554.0 L744.0 554.0 L746.0 554.0 L748.0 554.0 L750.0 554.0 L752.0 554.0 L754.0 554.0 L756.0 554.0 L758.0 554.0 L760.0 554.0 L762.0 554.0 L764.0 553.9 L766.0 553.8 L768.0 553.7 L770.0 553.6 L772.0 553.5 L774.0 553.4 L776.0 553.2 L778.0 553.1 L780.0 553.0 L782.0 552.9 L784.0 552.8 L786.0 552.7 L788.0 552.6 L790.0 552.5 L792.0 552.4 L794.0 552.3 L796.0 552.2 L798.0 552.1 L800.0 552.0 L802.0 551.8 L804.0 551.6 L806.0 551.4 L808.0 551.1 L810.0 550.8 L812.0 550.6 L814.0 550.3 L816.0 550.2 L818.0 550.0 L820.0 550.0 L822.0 550.1 L824.0 550.4 L826.0 550.6 L828.0 550.9 L830.0 551.0 L832.0 551.0 L834.0 551.0 L836.0 551.0 L838.0 551.0 L840.0 551.0 L842.0 551.0 L844.0 551.0 L846.0 551.0 L848.0 551.0 L850.0 551.0 L852.0 551.0 L854.0 550.9 L856.0 550.8 L858.0 550.6 L860.0 550.5 L862.0 550.4 L864.0 550.2 L866.0 550.1 L868.0 550.0 L870.0 550.0 L872.0 550.0 L874.0 550.0 L876.0 550.0 L878.0 550.0 L880.0 550.0 L882.0 550.0 L884.0 550.0 L886.0 550.0 L888.0 550.0 L890.0 550.0 L892.0 550.0 L894.0 549.9 L896.0 549.8 L898.0 549.6 L900.0 549.5 L902.0 549.4 L904.0 549.2 L906.0 549.1 L908.0 549.0 L910.0 549.0 L912.0 549.0 L914.0 549.0 L916.0 549.0 L918.0 549.0 L920.0 549.0 L922.0 549.0 L924.0 549.0 L926.0 549.0 L928.0 549.0 L930.0 549.0 L932.0 549.0 L934.0 548.9 L936.0 548.9 L938.0 548.8 L940.0 548.7 L942.0 548.5 L944.0 548.4 L946.0 548.3 L948.0 548.1 L950.0 548.0 L952.0 547.9 L954.0 547.7 L956.0 547.5 L958.0 547.3 L960.0 547.1 L962.0 546.9 L964.0 546.6 L966.0 546.4 L968.0 546.2 L970.0 546.0 L972.0 545.8 L974.0 545.6 L976.0 545.5 L978.0 545.3 L980.0 545.1 L982.0 544.9 L984.0 544.7 L986.0 544.5 L988.0 544.3 L990.0 544.0 L992.0 543.7 L994.0 543.2 L996.0 542.7 L998.0 542.2 L1000.0 541.6 L1002.0 541.0 L1004.0 540.4 L1006.0 539.8 L1008.0 539.2 L1010.0 538.5 L1012.0 537.8 L1014.0 537.0 L1016.0 536.1 L1018.0 535.1 L1020.0 534.0 L1022.0 532.9 L1024.0 531.7 L1026.0 530.4 L1028.0 529.2 L1030.0 528.0 L1032.0 526.8 L1034.0 525.6 L1036.0 524.3 L1038.0 523.0 L1040.0 521.7 L1042.0 520.4 L1044.0 519.1 L1046.0 517.7 L1048.0 516.4 L1050.0 515.0 L1052.0 513.6 L1054.0 512.1 L1056.0 510.6 L1058.0 509.1 L1060.0 507.6 L1062.0 506.0 L1064.0 504.5 L1066.0 503.0 L1068.0 501.5 L1070.0 500.0 L1072.0 498.6 L1074.0 497.2 L1076.0 495.8 L1078.0 494.4 L1080.0 493.0 L1082.0 491.6 L1084.0 490.3 L1086.0 488.9 L1088.0 487.4 L1090.0 486.0 L1092.0 484.5 L1094.0 483.0 L1096.0 481.5 L1098.0 479.9 L1100.0 478.4 L1102.0 476.8 L1104.0 475.3 L1106.0 473.7 L1108.0 472.2 L1110.0 470.7 L1112.0 469.3 L1114.0 467.9 L1116.0 466.4 L1118.0 465.0 L1120.0 463.7 L1122.0 462.3 L1124.0 460.9 L1126.0 459.6 L1128.0 458.3 L1130.0 457.0 L1132.0 455.7 L1134.0 454.5 L1136.0 453.3 L1138.0 452.0 L1140.0 450.8 L1142.0 449.6 L1144.0 448.5 L1146.0 447.3 L1148.0 446.2 L1150.0 445.0 L1152.0 443.9 L1154.0 442.7 L1156.0 441.6 L1158.0 440.5 L1160.0 439.4 L1162.0 438.3 L1164.0 437.2 L1166.0 436.1 L1168.0 435.1 L1170.0 434.0 L1172.0 433.0 L1174.0 432.0 L1176.0 431.1 L1178.0 430.2 L1180.0 429.2 L1182.0 428.3 L1184.0 427.3 L1186.0 426.3 L1188.0 425.2 L1190.0 424.0 L1192.0 422.7 L1194.0 421.3 L1196.0 419.7 L1198.0 418.1 L1200.0 416.5 L1202.0 414.8 L1204.0 413.0 L1206.0 411.3 L1208.0 409.6 L1210.0 408.0 L1212.0 406.4 L1214.0 404.8 L1216.0 403.2 L1218.0 401.6 L1220.0 399.9 L1222.0 398.3 L1224.0 396.7 L1226.0 395.1 L1228.0 393.6 L1230.0 392.0 L1232.0 390.4 L1234.0 388.9 L1236.0 387.3 L1238.0 385.8 L1240.0 384.2 L1242.0 382.7 L1244.0 381.2 L1246.0 379.8 L1248.0 378.4 L1250.0 377.0 L1252.0 375.7 L1254.0 374.4 L1256.0 373.1 L1258.0 371.8 L1260.0 370.6 L1262.0 369.4 L1264.0 368.3 L1266.0 367.1 L1268.0 366.1 L1270.0 365.0 L1272.0 364.0 L1274.0 363.1 L1276.0 362.2 L1278.0 361.3 L1280.0 360.4 L1282.0 359.6 L1284.0 358.7 L1286.0 357.8 L1288.0 356.8 L1290.0 355.8 L1292.0 354.8 L1294.0 353.7 L1296.0 352.6 L1298.0 351.5 L1300.0 350.4 L1302.0 349.3 L1304.0 348.3 L1306.0 347.3 L1308.0 346.3 L1310.0 345.3 L1312.0 344.2 L1314.0 343.0 L1316.0 341.8 L1318.0 340.5 L1320.0 339.1 L1322.0 337.6 L1324.0 336.0 L1326.0 334.4 L1328.0 332.8 L1330.0 331.3 L1332.0 329.7 L1334.0 328.3 L1336.0 326.8 L1338.0 325.4 L1340.0 324.0 L1342.0 322.6 L1344.0 321.2 L1346.0 319.8 L1348.0 318.2 L1350.0 316.7 L1352.0 315.1 L1354.0 313.4 L1356.0 311.8 L1358.0 310.1 L1360.0 308.4 L1362.0 306.7 L1364.0 305.0 L1366.0 303.3 L1368.0 301.6 L1370.0 300.0 L1372.0 298.4 L1374.0 296.8 L1376.0 295.2 L1378.0 293.7 L1380.0 292.2 L1382.0 290.7 L1384.0 289.2 L1386.0 287.9 L1388.0 286.6 L1390.0 285.4 L1392.0 284.3 L1394.0 283.3 L1396.0 282.4 L1398.0 281.5 L1400.0 280.5 L1402.0 279.5 L1404.0 278.5 L1406.0 277.4 L1408.0 276.3 L1410.0 275.1 L1412.0 274.0" fill="none" stroke="#22cc22" stroke-width="2" stroke-linejoin="round" shape-rendering="crispEdges"/>
<path d="M10.0 500.0 L12.0 500.7 L14.0 501.3 L16.0 501.9 L18.0 502.5 L20.0 503.0 L22.0 503.5 L24.0 503.9 L26.0 504.3 L28.0 504.7 L30.0 505.1 L32.0 505.4 L34.0 505.8 L36.0 506.2 L38.0 506.6 L40.0 507.0 L42.0 507.5 L44.0 507.9 L46.0 508.4 L48.0 508.9 L50.0 509.4 L52.0 509.9 L54.0 510.5 L56.0 511.0 L58.0 511.5 L60.0 512.0 L62.0 512.5 L64.0 513.0 L66.0 513.6 L68.0 514.1 L70.0 514.7 L72.0 515.2 L74.0 515.7 L76.0 516.2 L78.0 516.6 L80.0 517.0 L82.0 517.4 L84.0 517.7 L86.0 518.1 L88.0 518.5 L90.0 518.8 L92.0 519.1 L94.0 519.4 L96.0 519.6 L98.0 519.8 L100.0 520.0 L102.0 520.1 L104.0 520.3 L106.0 520.4 L108.0 520.6 L110.0 520.7 L112.0 520.8 L114.0 520.9 L116.0 520.9 L118.0 521.0 L120.0 521.0 L122.0 521.0 L124.0 521.0 L126.0 521.0 L128.0 521.0 L130.0 521.0 L132.0 521.0 L134.0 521.0 L136.0 521.0 L138.0 521.0 L140.0 521.0 L142.0 521.0 L144.0 520.9 L146.0 520.8 L148.0 520.6 L150.0 520.5 L152.0 520.4 L154.0 520.2 L156.0 520.1 L158.0 520.0 L160.0 520.0 L162.0 520.0 L164.0 520.0 L166.0 520.0 L168.0 520.0 L170.0 520.0 L172.0 520.0 L174.0 520.0 L176.0 520.0 L178.0 520.0 L180.0 520.0 L182.0 520.0 L184.0 519.9 L186.0 519.8 L188.0 519.7 L190.0 519.6 L192.0 519.5 L194.0 519.4 L196.0 519.2 L198.0 519.1 L200.0 519.0 L202.0 518.9 L204.0 518.8 L206.0 518.6 L208.0 518.5 L210.0 518.4 L212.0 518.3 L214.0 518.2 L216.0 518.1 L218.0 518.0 L220.0 518.0 L222.0 518.0 L224.0 518.1 L226.0 518.1 L228.0 518.2 L230.0 518.3 L232.0 518.4 L234.0 518.5 L236.0 518.7 L238.0 518.8 L240.0 519.0 L242.0 519.2 L244.0 519.5 L246.0 519.8 L248.0 520.3 L250.0 520.7 L252.0 521.2 L254.0 521.6 L256.0 522.1 L258.0 522.6 L260.0 523.0 L262.0 523.4 L264.0 523.8 L266.0 524.2 L268.0 524.6 L270.0 525.0 L272.0 525.4 L274.0 525.7 L276.0 526.1 L278.0 526.4 L280.0 526.8 L282.0 527.1 L284.0 527.6 L286.0 528.0 L288.0 528.5 L290.0 529.0 L292.0 529.6 L294.0 530.2 L296.0 530.9 L298.0 531.6 L300.0 532.3 L302.0 533.0 L304.0 533.8 L306.0 534.6 L308.0 535.4 L310.0 536.3 L312.0 537.2 L314.0 538.1 L316.0 539.1 L318.0 540.0 L320.0 541.0 L322.0 542.0 L324.0 543.1 L326.0 544.2 L328.0 545.2 L330.0 546.2 L332.0 547.2 L334.0 548.0 L336.0 548.8 L338.0 549.6 L340.0 550.3 L342.0 551.0 L344.0 551.7 L346.0 552.2 L348.0 552.7 L350.0 553.0 L352.0 553.3 L354.0 553.5 L356.0 553.7 L358.0 553.9 L360.0 554.0 L362.0 554.0 L364.0 554.0 L366.0 554.0 L368.0 554.0 L370.0 554.0 L372.0 554.0 L374.0 554.0 L376.0 554.0 L378.0 554.0 L380.0 554.0 L382.0 554.0 L384.0 554.1 L386.0 554.2 L388.0 554.4 L390.0 554.5 L392.0 554.6 L394.0 554.8 L396.0 554.9 L398.0 555.0 L400.0 555.0 L402.0 555.0 L404.0 554.9 L406.0 554.7 L408.0 554.5 L410.0 554.3 L412.0 554.0 L414.0 553.8 L416.0 553.5 L418.0 553.3 L420.0 553.0 L422.0 552.8 L424.0 552.5 L426.0 552.2 L428.0 552.0 L430.0 551.7 L432.0 551.4 L434.0 551.0 L436.0 550.7 L438.0 550.4 L440.0 550.0 L442.0 549.6 L444.0 549.2 L446.0 548.7 L448.0 548.2 L450.0 547.7 L452.0 547.2 L454.0 546.6 L456.0 546.1 L458.0 545.5 L460.0 545.0 L462.0 544.4 L464.0 543.9 L466.0 543.2 L468.0 542.6 L470.0 542.0 L472.0 541.4 L474.0 540.8 L476.0 540.1 L478.0 539.6 L480.0 539.0 L482.0 538.5 L484.0 537.9 L486.0 537.4 L488.0 536.8 L490.0 536.3 L492.0 535.8 L494.0 535.4 L496.0 535.0 L498.0 534.6 L500.0 534.2 L502.0 533.9 L504.0 533.5 L506.0 533.2 L508.0 533.1 L510.0 533.0 L512.0 533.0 L514.0 533.0 L516.0 533.0 L518.0 533.0 L520.0 533.0 L522.0 533.0 L524.0 533.0 L526.0 533.0 L528.0 533.0 L530.0 533.0 L532.0 532.8 L534.0 532.3 L536.0 531.7 L538.0 531.2 L540.0 531.0 L542.0 531.1 L544.0 531.2 L546.0 531.5 L548.0 531.8 L550.0 532.1 L552.0 532.5 L554.0 532.9 L556.0 533.3 L558.0 533.7 L560.0 534.0 L562.0 534.3 L564.0 534.6 L566.0 534.9 L568.0 535.1 L570.0 535.4 L572.0 535.7 L574.0 536.0 L576.0 536.3 L578.0 536.6 L580.0 537.0 L582.0 537.4 L584.0 537.8 L586.0 538.3 L588.0 538.7 L590.0 539.2 L592.0 539.8 L594.0 540.3 L596.0 540.9 L598.0 541.4 L600.0 542.0 L602.0 542.6 L604.0 543.2 L606.0 543.9 L608.0 544.6 L610.0 545.3 L612.0 546.0 L614.0 546.7 L616.0 547.5 L618.0 548.2 L620.0 549.0 L622.0 549.8 L624.0 550.7 L626.0 551.6 L628.0 552.5 L630.0 553.4 L632.0 554.3 L634.0 555.2 L636.0 556.0 L638.0 556.8 L640.0 557.6 L642.0 558.4 L644.0 559.1 L646.0 559.8 L648.0 560.4 L650.0 561.0 L652.0 561.5 L654.0 562.0 L656.0 562.4 L658.0 562.8 L660.0 563.2 L662.0 563.6 L664.0 564.0 L666.0 564.3 L668.0 564.7 L670.0 565.0 L672.0 565.3 L674.0 565.6 L676.0 565.9 L678.0 566.2 L680.0 566.4 L682.0 566.7 L684.0 567.0 L686.0 567.3 L688.0 567.6 L690.0 568.0 L692.0 568.4 L694.0 569.0 L696.0 569.6 L698.0 570.2 L700.0 570.9 L702.0 571.6 L704.0 572.3 L706.0 572.9 L708.0 573.5 L710.0 574.0 L712.0 574.5 L714.0 575.0 L716.0 575.6 L718.0 576.1 L720.0 576.6 L722.0 577.1 L724.0 577.4 L726.0 577.7 L728.0 577.9 L730.0 578.0 L732.0 578.0 L734.0 578.0 L736.0 578.0 L738.0 578.0 L740.0 578.0 L742.0 577.8 L744.0 577.3 L746.0 576.6 L748.0 575.7 L750.0 574.8 L752.0 574.0 L754.0 573.2 L756.0 572.3 L758.0 571.4 L760.0 570.5 L762.0 569.7 L764.0 569.0 L766.0 568.4 L768.0 567.9 L770.0 567.4 L772.0 567.0 L774.0 566.5 L776.0 566.1 L778.0 565.6 L780.0 565.0 L782.0 564.4 L784.0 563.7 L786.0 563.0 L788.0 562.2 L790.0 561.4 L792.0 560.6 L794.0 559.8 L796.0 559.0 L798.0 558.2 L800.0 557.3 L802.0 556.5 L804.0 555.6 L806.0 554.8 L808.0 554.0 L810.0 553.3 L812.0 552.5 L814.0 551.8 L816.0 551.1 L818.0 550.5 L820.0 550.0 L822.0 549.6 L824.0 549.2 L826.0 548.8 L828.0 548.4 L830.0 548.0 L832.0 547.5 L834.0 546.9 L836.0 546.2 L838.0 545.5 L840.0 544.8 L842.0 544.1 L844.0 543.3 L846.0 542.5 L848.0 541.8 L850.0 541.0 L852.0 540.2 L854.0 539.5 L856.0 538.6 L858.0 537.8 L860.0 537.0 L862.0 536.2 L864.0 535.4 L866.0 534.5 L868.0 533.8 L870.0 533.0 L872.0 532.2 L874.0 531.5 L876.0 530.7 L878.0 529.9 L880.0 529.2 L882.0 528.5 L884.0 527.8 L886.0 527.1 L888.0 526.5 L890.0 526.0 L892.0 525.5 L894.0 525.0 L896.0 524.6 L898.0 524.2 L900.0 523.8 L902.0 523.4 L904.0 523.0 L906.0 522.7 L908.0 522.3 L910.0 522.0 L912.0 521.6 L914.0 521.3 L916.0 520.9 L918.0 520.5 L920.0 520.3 L922.0 520.1 L924.0 520.0 L926.0 520.1 L928.0 520.2 L930.0 520.5 L932.0 520.8 L934.0 521.2 L936.0 521.6 L938.0 522.0 L940.0 522.5 L942.0 523.1 L944.0 523.9 L946.0 524.7 L948.0 525.4 L950.0 526.1 L952.0 526.7 L954.0 527.0 L956.0 527.2 L958.0 527.4 L960.0 527.6 L962.0 527.7 L964.0 527.8 L966.0 527.9 L968.0 528.0 L970.0 528.0 L972.0 528.0 L974.0 527.9 L976.0 527.8 L978.0 527.6 L980.0 527.5 L982.0 527.3 L984.0 527.1 L986.0 527.0 L988.0 526.9 L990.0 526.8 L992.0 526.7 L994.0 526.6 L996.0 526.4 L998.0 526.2 L1000.0 526.0 L1002.0 525.5 L1004.0 524.6 L1006.0 523.4 L1008.0 522.2 L1010.0 521.0 L1012.0 519.9 L1014.0 518.8 L1016.0 517.7 L1018.0 516.4 L1020.0 515.0 L1022.0 513.2 L1024.0 511.2 L1026.0 508.8 L1028.0 506.4 L1030.0 504.0 L1032.0 501.6 L1034.0 499.0 L1036.0 496.4 L1038.0 493.8 L1040.0 491.0 L1042.0 488.1 L1044.0 485.1 L1046.0 482.0 L1048.0 479.0 L1050.0 476.0 L1052.0 473.1 L1054.0 470.3 L1056.0 467.6 L1058.0 464.8 L1060.0 462.0 L1062.0 459.2 L1064.0 456.5 L1066.0 453.7 L1068.0 450.9 L1070.0 448.0 L1072.0 444.9 L1074.0 441.8 L1076.0 438.6 L1078.0 435.3 L1080.0 431.9 L1082.0 428.6 L1084.0 425.3 L1086.0 422.0 L1088.0 418.8 L1090.0 415.5 L1092.0 412.2 L1094.0 409.0 L1096.0 405.8 L1098.0 402.5 L1100.0 399.2 L1102.0 396.0 L1104.0 392.7 L1106.0 389.4 L1108.0 386.1 L1110.0 382.7 L1112.0 379.4 L1114.0 376.2 L1116.0 373.0 L1118.0 370.0 L1120.0 367.1 L1122.0 364.2 L1124.0 361.4 L1126.0 358.6 L1128.0 355.9 L1130.0 353.3 L1132.0 350.6 L1134.0 348.0 L1136.0 345.4 L1138.0 342.9 L1140.0 340.4 L1142.0 337.9 L1144.0 335.4 L1146.0 333.0 L1148.0 330.5 L1150.0 328.0 L1152.0 325.4 L1154.0 322.7 L1156.0 319.9 L1158.0 317.3 L1160.0 315.0 L1162.0 313.0 L1164.0 311.4 L1166.0 309.9 L1168.0 308.6 L1170.0 307.3 L1172.0 306.1 L1174.0 305.0 L1176.0 303.9 L1178.0 302.9 L1180.0 301.9 L1182.0 300.9 L1184.0 300.0 L1186.0 299.0 L1188.0 298.0 L1190.0 297.0 L1192.0 296.0 L1194.0 295.1 L1196.0 294.1 L1198.0 293.1 L1200.0 292.1 L1202.0 291.0 L1204.0 289.9 L1206.0 288.6 L1208.0 287.3 L1210.0 286.0 L1212.0 284.9 L1214.0 283.8 L1216.0 283.0 L1218.0 282.4 L1220.0 281.8 L1222.0 281.4 L1224.0 280.9 L1226.0 280.5 L1228.0 280.0 L1230.0 279.5 L1232.0 278.9 L1234.0 278.4 L1236.0 277.9 L1238.0 277.4 L1240.0 277.0 L1242.0 276.6 L1244.0 276.2 L1246.0 275.8 L1248.0 275.4 L1250.0 275.2 L1252.0 275.0 L1254.0 275.0 L1256.0 275.0 L1258.0 275.0 L1260.0 275.0 L1262.0 275.0 L1264.0 275.0 L1266.0 275.0 L1268.0 275.0 L1270.0 275.0 L1272.0 275.0 L1274.0 275.0 L1276.0 275.0 L1278.0 275.0 L1280.0 275.0 L1282.0 275.0 L1284.0 275.0 L1286.0 275.0 L1288.0 275.0 L1290.0 275.0 L1292.0 275.0 L1294.0 275.0 L1296.0 275.0 L1298.0 275.0 L1300.0 275.0 L1302.0 275.0 L1304.0 274.9 L1306.0 274.8 L1308.0 274.6 L1310.0 274.4 L1312.0 274.2 L1314.0 274.0 L1316.0 273.8 L1318.0 273.6 L1320.0 273.3 L1322.0 273.1 L1324.0 272.9 L1326.0 272.7 L1328.0 272.4 L1330.0 272.2 L1332.0 271.9 L1334.0 271.6 L1336.0 271.4 L1338.0 271.1 L1340.0 270.8 L1342.0 270.6 L1344.0 270.3 L1346.0 270.1 L1348.0 269.9 L1350.0 269.7 L1352.0 269.4 L1354.0 269.2 L1356.0 269.0 L1358.0 268.8 L1360.0 268.6 L1362.0 268.4 L1364.0 268.2 L1366.0 268.1 L1368.0 268.0 L1370.0 268.0 L1372.0 268.0 L1374.0 268.0 L1376.0 268.0 L1378.0 268.0 L1380.0 268.0 L1382.0 268.0 L1384.0 268.0 L1386.0 268.0 L1388.0 268.0 L1390.0 268.0 L1392.0 268.0 L1394.0 268.0 L1396.0 268.0 L1398.0 268.0 L1400.0 267.6 L1402.0 266.7 L1404.0 265.5 L1406.0 264.5 L1408.0 263.4 L1410.0 262.2 L1412.0 261.0" fill="none" stroke="#0000ff" stroke-width="2" stroke-linejoin="round" shape-rendering="crispEdges"/>
<path d="M10.0 514.0 L12.0 514.0 L14.0 514.0 L16.0 514.0 L18.0 514.0 L20.0 514.0 L22.0 514.0 L24.0 514.0 L26.0 514.0 L28.0 514.0 L30.0 514.0 L32.0 514.0 L34.0 514.0 L36.0 514.0 L38.0 514.0 L40.0 514.0 L42.0 514.1 L44.0 514.2 L46.0 514.4 L48.0 514.7 L50.0 515.0 L52.0 515.4 L54.0 515.8 L56.0 516.2 L58.0 516.6 L60.0 517.0 L62.0 517.4 L64.0 517.9 L66.0 518.4 L68.0 518.9 L70.0 519.5 L72.0 520.1 L74.0 520.6 L76.0 521.1 L78.0 521.6 L80.0 522.0 L82.0 522.4 L84.0 522.7 L86.0 523.0 L88.0 523.2 L90.0 523.5 L92.0 523.8 L94.0 524.0 L96.0 524.3 L98.0 524.6 L100.0 525.0 L102.0 525.5 L104.0 526.1 L106.0 526.8 L108.0 527.4 L110.0 527.8 L112.0 528.0 L114.0 528.0 L116.0 528.0 L118.0 528.0 L120.0 528.0 L122.0 528.0 L124.0 528.0 L126.0 528.0 L128.0 528.0 L130.0 528.0 L132.0 527.8 L134.0 527.6 L136.0 527.4 L138.0 527.1 L140.0 526.7 L142.0 526.4 L144.0 526.0 L146.0 525.5 L148.0 525.0 L150.0 524.3 L152.0 523.5 L154.0 522.8 L156.0 522.0 L158.0 521.2 L160.0 520.3 L162.0 519.4 L164.0 518.5 L166.0 517.7 L168.0 517.0 L170.0 516.4 L172.0 515.8 L174.0 515.2 L176.0 514.7 L178.0 514.2 L180.0 513.8 L182.0 513.4 L184.0 513.0 L186.0 512.7 L188.0 512.3 L190.0 512.0 L192.0 511.7 L194.0 511.4 L196.0 511.2 L198.0 511.0 L200.0 511.0 L202.0 511.0 L204.0 511.0 L206.0 511.0 L208.0 511.0 L210.0 511.0 L212.0 511.0 L214.0 511.0 L216.0 511.0 L218.0 511.0 L220.0 511.0 L222.0 511.0 L224.0 511.0 L226.0 511.3 L228.0 512.0 L230.0 513.0 L232.0 514.0 L234.0 515.1 L236.0 516.3 L238.0 517.7 L240.0 519.2 L242.0 520.6 L244.0 522.0 L246.0 523.3 L248.0 524.6 L250.0 525.8 L252.0 527.1 L254.0 528.3 L256.0 529.6 L258.0 530.8 L260.0 532.0 L262.0 533.2 L264.0 534.3 L266.0 535.5 L268.0 536.6 L270.0 537.8 L272.0 539.0 L274.0 540.3 L276.0 541.5 L278.0 542.8 L280.0 544.0 L282.0 545.0 L284.0 546.0 L286.0 546.9 L288.0 547.9 L290.0 549.0 L292.0 550.3 L294.0 551.8 L296.0 553.4 L298.0 554.8 L300.0 556.0 L302.0 557.0 L304.0 557.9 L306.0 558.7 L308.0 559.5 L310.0 560.0 L312.0 560.4 L314.0 560.8 L316.0 561.2 L318.0 561.6 L320.0 561.9 L322.0 562.1 L324.0 562.4 L326.0 562.6 L328.0 562.8 L330.0 563.0 L332.0 563.2 L334.0 563.3 L336.0 563.4 L338.0 563.5 L340.0 563.6 L342.0 563.7 L344.0 563.8 L346.0 564.0 L348.0 564.3 L350.0 564.8 L352.0 565.4 L354.0 565.8 L356.0 566.0 L358.0 565.9 L360.0 565.6 L362.0 565.2 L364.0 564.6 L366.0 564.0 L368.0 563.1 L370.0 561.7 L372.0 560.1 L374.0 558.5 L376.0 557.0 L378.0 555.6 L380.0 554.2 L382.0 552.8 L384.0 551.7 L386.0 551.0 L388.0 550.6 L390.0 550.3 L392.0 550.0 L394.0 549.8 L396.0 549.6 L398.0 549.3 L400.0 549.0 L402.0 548.6 L404.0 548.1 L406.0 547.5 L408.0 546.9 L410.0 546.3 L412.0 545.6 L414.0 545.0 L416.0 544.4 L418.0 543.7 L420.0 543.0 L422.0 542.3 L424.0 541.6 L426.0 541.0 L428.0 540.3 L430.0 539.6 L432.0 538.8 L434.0 538.1 L436.0 537.5 L438.0 537.1 L440.0 537.0 L442.0 537.0 L444.0 537.0 L446.0 537.0 L448.0 537.0 L450.0 537.0 L452.0 537.0 L454.0 537.0 L456.0 536.9 L458.0 536.5 L460.0 535.9 L462.0 535.3 L464.0 534.6 L466.0 534.0 L468.0 533.4 L470.0 532.7 L472.0 532.0 L474.0 531.3 L476.0 530.6 L478.0 530.0 L480.0 529.4 L482.0 528.8 L484.0 528.3 L486.0 527.8 L488.0 527.3 L490.0 527.0 L492.0 526.7 L494.0 526.4 L496.0 526.2 L498.0 526.1 L500.0 526.0 L502.0 526.1 L504.0 526.2 L506.0 526.5 L508.0 526.8 L510.0 527.0 L512.0 527.2 L514.0 527.5 L516.0 527.7 L518.0 527.9 L520.0 528.2 L522.0 528.4 L524.0 528.7 L526.0 529.0 L528.0 529.3 L530.0 529.6 L532.0 529.9 L534.0 530.2 L536.0 530.6 L538.0 531.0 L540.0 531.4 L542.0 531.9 L544.0 532.4 L546.0 533.0 L548.0 533.6 L550.0 534.3 L552.0 535.0 L554.0 535.9 L556.0 537.1 L558.0 538.3 L560.0 539.6 L562.0 540.9 L564.0 542.0 L566.0 543.0 L568.0 543.9 L570.0 544.8 L572.0 545.6 L574.0 546.5 L576.0 547.3 L578.0 548.1 L580.0 549.0 L582.0 549.9 L584.0 550.7 L586.0 551.6 L588.0 552.5 L590.0 553.4 L592.0 554.2 L594.0 555.1 L596.0 556.1 L598.0 557.0 L600.0 558.0 L602.0 559.1 L604.0 560.2 L606.0 561.4 L608.0 562.6 L610.0 563.7 L612.0 564.9 L614.0 566.0 L616.0 567.0 L618.0 567.9 L620.0 568.9 L622.0 569.7 L624.0 570.6 L626.0 571.3 L628.0 572.0 L630.0 572.6 L632.0 573.2 L634.0 573.7 L636.0 574.1 L638.0 574.6 L640.0 575.0 L642.0 575.4 L644.0 575.9 L646.0 576.3 L648.0 576.7 L650.0 576.9 L652.0 577.0 L654.0 576.9 L656.0 576.7 L658.0 576.3 L660.0 575.9 L662.0 575.4 L664.0 575.0 L666.0 574.5 L668.0 573.9 L670.0 573.2 L672.0 572.6 L674.0 572.2 L676.0 572.0 L678.0 572.0 L680.0 572.0 L682.0 572.0 L684.0 572.0 L686.0 572.0 L688.0 572.0 L690.0 572.0 L692.0 572.2 L694.0 572.3 L696.0 572.5 L698.0 572.8 L700.0 573.0 L702.0 573.2 L704.0 573.5 L706.0 573.9 L708.0 574.2 L710.0 574.6 L712.0 575.0 L714.0 575.4 L716.0 576.0 L718.0 576.5 L720.0 577.0 L722.0 577.6 L724.0 578.0 L726.0 578.4 L728.0 578.9 L730.0 579.3 L732.0 579.7 L734.0 579.9 L736.0 580.0 L738.0 579.9 L740.0 579.7 L742.0 579.4 L744.0 579.0 L746.0 578.6 L748.0 578.1 L750.0 577.5 L752.0 576.8 L754.0 576.0 L756.0 574.9 L758.0 573.3 L760.0 571.5 L762.0 569.7 L764.0 568.0 L766.0 566.5 L768.0 565.0 L770.0 563.6 L772.0 562.1 L774.0 560.6 L776.0 559.0 L778.0 557.3 L780.0 555.5 L782.0 553.7 L784.0 551.8 L786.0 549.9 L788.0 548.0 L790.0 546.0 L792.0 544.0 L794.0 542.0 L796.0 539.9 L798.0 537.9 L800.0 536.0 L802.0 534.1 L804.0 532.2 L806.0 530.3 L808.0 528.6 L810.0 527.0 L812.0 525.6 L814.0 524.2 L816.0 523.0 L818.0 521.9 L820.0 521.0 L822.0 520.2 L824.0 519.4 L826.0 518.7 L828.0 518.2 L830.0 518.0 L832.0 518.0 L834.0 518.1 L836.0 518.3 L838.0 518.5 L840.0 518.8 L842.0 519.0 L844.0 519.3 L846.0 519.5 L848.0 519.8 L850.0 520.0 L852.0 520.2 L854.0 520.4 L856.0 520.6 L858.0 520.7 L860.0 520.9 L862.0 521.1 L864.0 521.3 L866.0 521.5 L868.0 521.7 L870.0 522.0 L872.0 522.3 L874.0 522.8 L876.0 523.3 L878.0 523.8 L880.0 524.2 L882.0 524.6 L884.0 524.9 L886.0 525.0 L888.0 524.9 L890.0 524.8 L892.0 524.6 L894.0 524.4 L896.0 524.2 L898.0 524.0 L900.0 523.8 L902.0 523.7 L904.0 523.5 L906.0 523.3 L908.0 523.2 L910.0 523.0 L912.0 522.8 L914.0 522.6 L916.0 522.4 L918.0 522.2 L920.0 522.1 L922.0 522.0 L924.0 522.0 L926.0 522.1 L928.0 522.3 L930.0 522.5 L932.0 522.8 L934.0 523.0 L936.0 523.3 L938.0 523.7 L940.0 524.2 L942.0 524.8 L944.0 525.4 L946.0 526.0 L948.0 526.8 L950.0 527.7 L952.0 528.7 L954.0 529.5 L956.0 530.0 L958.0 530.2 L960.0 530.5 L962.0 530.6 L964.0 530.8 L966.0 530.9 L968.0 531.0 L970.0 531.0 L972.0 530.9 L974.0 530.8 L976.0 530.6 L978.0 530.4 L980.0 530.2 L982.0 530.1 L984.0 530.0 L986.0 530.0 L988.0 530.0 L990.0 530.0 L992.0 530.0 L994.0 530.0 L996.0 530.0 L998.0 530.0 L1000.0 530.0 L1002.0 529.2 L1004.0 527.3 L1006.0 525.1 L1008.0 523.0 L1010.0 521.0 L1012.0 518.7 L1014.0 516.0 L1016.0 512.7 L1018.0 508.8 L1020.0 504.5 L1022.0 500.0 L1024.0 495.4 L1026.0 490.4 L1028.0 485.2 L1030.0 480.0 L1032.0 474.6 L1034.0 469.0 L1036.0 463.4 L1038.0 458.0 L1040.0 453.0 L1042.0 448.1 L1044.0 442.9 L1046.0 436.7 L1048.0 429.3 L1050.0 422.0 L1052.0 415.2 L1054.0 408.6 L1056.0 402.1 L1058.0 395.9 L1060.0 390.0 L1062.0 384.5 L1064.0 379.4 L1066.0 374.4 L1068.0 369.4 L1070.0 364.0 L1072.0 358.2 L1074.0 352.1 L1076.0 345.9 L1078.0 340.0 L1080.0 334.2 L1082.0 328.4 L1084.0 322.9 L1086.0 318.0 L1088.0 313.5 L1090.0 309.5 L1092.0 306.0 L1094.0 303.0 L1096.0 300.4 L1098.0 298.0 L1100.0 296.0 L1102.0 294.2 L1104.0 292.5 L1106.0 291.1 L1108.0 290.0 L1110.0 289.1 L1112.0 288.3 L1114.0 287.6 L1116.0 287.2 L1118.0 287.0 L1120.0 287.2 L1122.0 287.6 L1124.0 288.1 L1126.0 288.6 L1128.0 289.0 L1130.0 289.2 L1132.0 289.4 L1134.0 289.5 L1136.0 289.7 L1138.0 290.0 L1140.0 290.7 L1142.0 292.1 L1144.0 293.6 L1146.0 295.0 L1148.0 296.3 L1150.0 297.7 L1152.0 298.9 L1154.0 300.0 L1156.0 300.9 L1158.0 301.6 L1160.0 302.3 L1162.0 303.0 L1164.0 303.7 L1166.0 304.3 L1168.0 304.9 L1170.0 305.5 L1172.0 306.0 L1174.0 306.5 L1176.0 307.0 L1178.0 307.5 L1180.0 307.9 L1182.0 308.0 L1184.0 307.7 L1186.0 307.0 L1188.0 306.1 L1190.0 305.0 L1192.0 303.7 L1194.0 301.9 L1196.0 300.0 L1198.0 297.8 L1200.0 295.2 L1202.0 292.5 L1204.0 290.0 L1206.0 287.7 L1208.0 285.6 L1210.0 283.4 L1212.0 281.0 L1214.0 278.3 L1216.0 275.2 L1218.0 272.3 L1220.0 270.0 L1222.0 268.3 L1224.0 267.0 L1226.0 265.6 L1228.0 264.0 L1230.0 261.7 L1232.0 259.0 L1234.0 256.3 L1236.0 254.0 L1238.0 252.3 L1240.0 250.8 L1242.0 249.5 L1244.0 248.0 L1246.0 246.1 L1248.0 244.4 L1250.0 243.8 L1252.0 243.5 L1254.0 243.2 L1256.0 243.1 L1258.0 243.0 L1260.0 243.2 L1262.0 243.8 L1264.0 244.6 L1266.0 245.5 L1268.0 246.5 L1270.0 247.8 L1272.0 249.3 L1274.0 251.1 L1276.0 253.0 L1278.0 255.1 L1280.0 257.6 L1282.0 260.3 L1284.0 263.2 L1286.0 266.0 L1288.0 268.8 L1290.0 271.6 L1292.0 274.3 L1294.0 276.9 L1296.0 279.0 L1298.0 281.0 L1300.0 282.7 L1302.0 284.4 L1304.0 286.1 L1306.0 287.9 L1308.0 289.9 L1310.0 291.8 L1312.0 293.6 L1314.0 295.0 L1316.0 296.2 L1318.0 297.2 L1320.0 298.1 L1322.0 298.8 L1324.0 299.2 L1326.0 299.5 L1328.0 299.7 L1330.0 299.9 L1332.0 300.0 L1334.0 299.9 L1336.0 299.2 L1338.0 298.0 L1340.0 296.5 L1342.0 295.0 L1344.0 293.3 L1346.0 291.3 L1348.0 289.1 L1350.0 287.0 L1352.0 285.1 L1354.0 283.4 L1356.0 281.7 L1358.0 280.0 L1360.0 278.1 L1362.0 275.8 L1364.0 273.0 L1366.0 270.0 L1368.0 266.9 L1370.0 264.0 L1372.0 261.3 L1374.0 258.6 L1376.0 256.0 L1378.0 253.9 L1380.0 252.2 L1382.0 251.0 L1384.0 249.9 L1386.0 248.8 L1388.0 247.7 L1390.0 246.3 L1392.0 244.6 L1394.0 242.8 L1396.0 241.0 L1398.0 239.0 L1400.0 236.9 L1402.0 234.6 L1404.0 232.3 L1406.0 230.1 L1408.0 228.0 L1410.0 225.9 L1412.0 224.0" fill="none" stroke="#ff0000" stroke-width="2" stroke-linejoin="round" shape-rendering="crispEdges"/>
<path d="M9.5 511 V519 M13.5 511 V522 M17.5 508 V524 M21.5 503 V523 M24.5 500 V511 M28.5 500 V510 M32.5 503 V514 M36.5 503 V512 M40.5 508 V524 M44.5 520 V527 M48.5 518 V532 M52.5 520 V533 M56.5 521 V528 M59.5 522 V533 M63.5 517 V530 M67.5 532 V546 M71.5 519 V530 M75.5 529 V534 M79.5 527 V536 M83.5 523 V533 M87.5 527 V543 M90.5 523 V543 M94.5 526 V534 M98.5 458 V537 M102.5 522 V530 M106.5 519 V530 M110.5 515 V532 M114.5 517 V529 M118.5 519 V537 M122.5 517 V527 M125.5 518 V530 M129.5 514 V531 M133.5 515 V526 M137.5 519 V528 M141.5 514 V523 M145.5 512 V526 M149.5 511 V528 M153.5 485 V556 M156.5 466 V503 M160.5 493 V506 M164.5 490 V506 M168.5 500 V517 M172.5 502 V512 M176.5 503 V513 M180.5 500 V513 M184.5 502 V512 M188.5 501 V529 M191.5 503 V520 M195.5 507 V521 M199.5 508 V516 M203.5 512 V519 M207.5 503 V524 M211.5 517 V533 M215.5 525 V530 M219.5 520 V532 M223.5 518 V556 M226.5 526 V543 M230.5 528 V540 M234.5 529 V546 M238.5 528 V541 M242.5 535 V552 M246.5 541 V558 M250.5 536 V578 M254.5 551 V559 M257.5 551 V564 M261.5 555 V566 M265.5 548 V559 M269.5 545 V555 M273.5 542 V556 M277.5 546 V554 M281.5 545 V554 M285.5 544 V558 M289.5 554 V569 M292.5 560 V567 M296.5 559 V580 M300.5 558 V573 M304.5 563 V573 M308.5 565 V574 M312.5 553 V582 M316.5 562 V579 M320.5 563 V573 M323.5 565 V576 M327.5 561 V578 M331.5 559 V577 M335.5 568 V578 M339.5 567 V581 M343.5 566 V580 M347.5 555 V577 M351.5 556 V566 M355.5 554 V566 M358.5 524 V565 M362.5 533 V542 M366.5 532 V537 M370.5 513 V535 M374.5 499 V534 M378.5 511 V520 M382.5 515 V529 M386.5 529 V547 M390.5 538 V547 M393.5 531 V560 M397.5 545 V556 M401.5 545 V557 M405.5 539 V553 M409.5 539 V547 M413.5 538 V555 M417.5 545 V554 M421.5 536 V548 M424.5 535 V548 M428.5 533 V546 M432.5 529 V547 M436.5 530 V545 M440.5 523 V534 M444.5 519 V529 M448.5 517 V531 M452.5 512 V524 M456.5 511 V526 M459.5 516 V532 M463.5 517 V524 M467.5 516 V527 M471.5 515 V523 M475.5 512 V522 M479.5 520 V562 M483.5 519 V551 M487.5 518 V527 M490.5 520 V533 M494.5 519 V527 M498.5 525 V538 M502.5 531 V544 M506.5 534 V543 M510.5 529 V540 M514.5 532 V548 M518.5 529 V546 M522.5 530 V549 M525.5 534 V551 M529.5 514 V546 M533.5 510 V532 M537.5 514 V530 M541.5 525 V537 M545.5 530 V559 M549.5 540 V551 M553.5 543 V551 M556.5 547 V563 M560.5 554 V562 M564.5 551 V567 M568.5 558 V570 M572.5 560 V570 M576.5 563 V577 M580.5 562 V575 M584.5 568 V576 M588.5 579 V590 M591.5 575 V585 M595.5 576 V584 M599.5 576 V585 M603.5 575 V583 M607.5 573 V582 M611.5 573 V581 M615.5 576 V586 M619.5 578 V586 M623.5 564 V582 M626.5 570 V579 M630.5 564 V579 M634.5 571 V581 M638.5 569 V584 M642.5 573 V583 M646.5 569 V586 M650.5 572 V580 M654.5 565 V582 M657.5 564 V579 M661.5 565 V574 M665.5 558 V570 M669.5 563 V572 M673.5 560 V568 M677.5 560 V568 M681.5 563 V578 M685.5 569 V574 M689.5 571 V590 M692.5 565 V575 M696.5 567 V587 M700.5 576 V588 M704.5 581 V593 M708.5 581 V590 M712.5 582 V600 M716.5 586 V595 M720.5 575 V597 M723.5 577 V585 M727.5 577 V589 M731.5 579 V589 M735.5 575 V586 M739.5 554 V593 M743.5 550 V559 M747.5 550 V559 M751.5 516 V551 M755.5 514 V545 M758.5 503 V524 M762.5 502 V512 M766.5 512 V538 M770.5 525 V532 M774.5 525 V532 M778.5 499 V526 M782.5 508 V521 M786.5 509 V518 M790.5 515 V524 M793.5 517 V527 M797.5 499 V522 M801.5 502 V513 M805.5 507 V516 M809.5 513 V530 M813.5 518 V533 M817.5 511 V524 M821.5 511 V519 M824.5 509 V527 M828.5 518 V530 M832.5 516 V525 M836.5 516 V530 M840.5 523 V533 M844.5 522 V532 M848.5 517 V530 M852.5 524 V535 M856.5 522 V562 M859.5 514 V531 M863.5 514 V530 M867.5 521 V533 M871.5 519 V534 M875.5 519 V529 M879.5 520 V530 M883.5 515 V530 M887.5 516 V530 M890.5 516 V534 M894.5 517 V524 M898.5 517 V524 M902.5 516 V523 M906.5 510 V521 M910.5 511 V520 M914.5 511 V521 M918.5 497 V518 M922.5 498 V514 M925.5 506 V521 M929.5 508 V538 M933.5 533 V554 M937.5 532 V550 M941.5 534 V547 M945.5 542 V549 M949.5 538 V557 M953.5 538 V557 M957.5 538 V554 M960.5 529 V542 M964.5 521 V541 M968.5 522 V543 M972.5 493 V538 M976.5 500 V520 M980.5 517 V525 M984.5 506 V526 M988.5 511 V521 M991.5 508 V517 M995.5 508 V515 M999.5 499 V513 M1003.5 458 V512 M1007.5 441 V461 M1011.5 447 V458 M1015.5 397 V466 M1019.5 380 V418 M1023.5 375 V396 M1026.5 350 V390 M1030.5 338 V366 M1034.5 346 V370 M1038.5 346 V368 M1042.5 294 V342 M1046.5 274 V305 M1050.5 285 V312 M1054.5 278 V318 M1057.5 292 V310 M1061.5 270 V316 M1065.5 272 V296 M1069.5 266 V304 M1073.5 243 V272 M1077.5 251 V280 M1081.5 255 V284 M1085.5 272 V288 M1089.5 268 V281 M1092.5 259 V275 M1096.5 257 V287 M1100.5 276 V292 M1104.5 275 V293 M1108.5 283 V314 M1112.5 302 V322 M1116.5 298 V316 M1120.5 310 V317 M1124.5 313 V336 M1127.5 316 V328 M1131.5 278 V312 M1135.5 302 V313 M1139.5 298 V308 M1143.5 308 V332 M1147.5 315 V330 M1151.5 308 V340 M1155.5 303 V320 M1158.5 308 V324 M1162.5 262 V328 M1166.5 266 V291 M1170.5 262 V291 M1174.5 272 V305 M1178.5 300 V312 M1182.5 290 V328 M1186.5 286 V298 M1190.5 247 V294 M1193.5 262 V284 M1197.5 219 V261 M1201.5 199 V224 M1205.5 220 V236 M1209.5 187 V238 M1213.5 191 V225 M1217.5 211 V236 M1221.5 226 V249 M1224.5 225 V242 M1228.5 228 V246 M1232.5 221 V257 M1236.5 198 V222 M1240.5 195 V219 M1244.5 212 V236 M1248.5 226 V258 M1252.5 240 V277 M1256.5 270 V302 M1259.5 280 V301 M1263.5 299 V322 M1267.5 300 V323 M1271.5 303 V328 M1275.5 302 V314 M1279.5 302 V315 M1283.5 308 V318 M1287.5 312 V322 M1290.5 317 V338 M1294.5 310 V336 M1298.5 303 V318 M1302.5 280 V333 M1306.5 264 V294 M1310.5 261 V273 M1314.5 261 V285 M1318.5 277 V301 M1322.5 272 V300 M1325.5 261 V280 M1329.5 268 V288 M1333.5 275 V286 M1337.5 272 V285 M1341.5 251 V290 M1345.5 244 V272 M1349.5 219 V250 M1353.5 224 V250 M1357.5 195 V237 M1360.5 207 V243 M1364.5 203 V245 M1368.5 191 V222 M1372.5 215 V226 M1376.5 202 V231 M1380.5 200 V228 M1384.5 207 V228 M1388.5 208 V232 M1391.5 225 V245 M1395.5 215 V236 M1399.5 207 V222 M1403.5 155 V204 M1407.5 160 V186 M1411.5 162 V184" stroke="#000" stroke-width="1" fill="none" shape-rendering="crispEdges"/>
<path d="M8.5 515.5 h2 v3 h-2 z M16.5 515.5 h2 v5 h-2 z M20.5 510.5 h2 v6 h-2 z M23.5 502.5 h2 v8 h-2 z M31.5 506.5 h2 v3 h-2 z M51.5 523.5 h2 v7 h-2 z M62.5 523.5 h2 v5 h-2 z M66.5 541.5 h2 v4 h-2 z M78.5 529.5 h2 v3 h-2 z M89.5 529.5 h2 v8 h-2 z M101.5 526.5 h2 v3 h-2 z M105.5 525.5 h2 v2 h-2 z M109.5 522.5 h2 v3 h-2 z M117.5 524.5 h2 v2 h-2 z M121.5 522.5 h2 v2 h-2 z M128.5 519.5 h2 v10 h-2 z M136.5 522.5 h2 v3 h-2 z M140.5 518.5 h2 v3 h-2 z M148.5 515.5 h2 v7 h-2 z M152.5 492.5 h2 v64 h-2 z M159.5 495.5 h2 v4 h-2 z M175.5 504.5 h2 v5 h-2 z M183.5 508.5 h2 v3 h-2 z M194.5 511.5 h2 v3 h-2 z M202.5 514.5 h2 v2 h-2 z M218.5 526.5 h2 v2 h-2 z M222.5 527.5 h2 v5 h-2 z M229.5 531.5 h2 v4 h-2 z M260.5 557.5 h2 v4 h-2 z M264.5 552.5 h2 v4 h-2 z M272.5 552.5 h2 v2 h-2 z M280.5 547.5 h2 v4 h-2 z M299.5 566.5 h2 v5 h-2 z M307.5 566.5 h2 v6 h-2 z M311.5 556.5 h2 v25 h-2 z M319.5 566.5 h2 v5 h-2 z M326.5 563.5 h2 v11 h-2 z M334.5 571.5 h2 v3 h-2 z M342.5 573.5 h2 v4 h-2 z M346.5 564.5 h2 v9 h-2 z M350.5 560.5 h2 v5 h-2 z M354.5 558.5 h2 v4 h-2 z M357.5 534.5 h2 v29 h-2 z M365.5 534.5 h2 v2 h-2 z M369.5 517.5 h2 v17 h-2 z M373.5 516.5 h2 v16 h-2 z M377.5 513.5 h2 v4 h-2 z M381.5 523.5 h2 v3 h-2 z M389.5 540.5 h2 v4 h-2 z M400.5 551.5 h2 v3 h-2 z M404.5 545.5 h2 v7 h-2 z M408.5 542.5 h2 v3 h-2 z M416.5 546.5 h2 v7 h-2 z M420.5 539.5 h2 v8 h-2 z M427.5 535.5 h2 v9 h-2 z M435.5 532.5 h2 v6 h-2 z M439.5 525.5 h2 v7 h-2 z M447.5 523.5 h2 v4 h-2 z M451.5 518.5 h2 v5 h-2 z M458.5 522.5 h2 v2 h-2 z M462.5 519.5 h2 v4 h-2 z M470.5 516.5 h2 v4 h-2 z M478.5 528.5 h2 v4 h-2 z M482.5 521.5 h2 v28 h-2 z M489.5 523.5 h2 v3 h-2 z M509.5 533.5 h2 v5 h-2 z M517.5 533.5 h2 v12 h-2 z M524.5 538.5 h2 v8 h-2 z M528.5 527.5 h2 v18 h-2 z M532.5 524.5 h2 v6 h-2 z M548.5 546.5 h2 v2 h-2 z M559.5 556.5 h2 v5 h-2 z M583.5 571.5 h2 v3 h-2 z M594.5 579.5 h2 v3 h-2 z M598.5 579.5 h2 v2 h-2 z M602.5 577.5 h2 v3 h-2 z M610.5 576.5 h2 v3 h-2 z M622.5 570.5 h2 v11 h-2 z M629.5 572.5 h2 v5 h-2 z M633.5 573.5 h2 v6 h-2 z M641.5 576.5 h2 v6 h-2 z M645.5 573.5 h2 v4 h-2 z M653.5 567.5 h2 v14 h-2 z M660.5 566.5 h2 v3 h-2 z M664.5 563.5 h2 v3 h-2 z M672.5 563.5 h2 v3 h-2 z M684.5 571.5 h2 v2 h-2 z M688.5 573.5 h2 v16 h-2 z M691.5 572.5 h2 v2 h-2 z M707.5 583.5 h2 v3 h-2 z M715.5 587.5 h2 v4 h-2 z M719.5 586.5 h2 v10 h-2 z M722.5 579.5 h2 v5 h-2 z M730.5 580.5 h2 v6 h-2 z M734.5 578.5 h2 v3 h-2 z M738.5 556.5 h2 v36 h-2 z M750.5 542.5 h2 v7 h-2 z M754.5 523.5 h2 v21 h-2 z M757.5 509.5 h2 v14 h-2 z M777.5 516.5 h2 v7 h-2 z M781.5 510.5 h2 v10 h-2 z M789.5 518.5 h2 v3 h-2 z M796.5 505.5 h2 v15 h-2 z M812.5 520.5 h2 v7 h-2 z M816.5 516.5 h2 v3 h-2 z M820.5 516.5 h2 v2 h-2 z M831.5 519.5 h2 v4 h-2 z M839.5 525.5 h2 v1 h-2 z M858.5 518.5 h2 v6 h-2 z M870.5 525.5 h2 v5 h-2 z M874.5 522.5 h2 v3 h-2 z M882.5 518.5 h2 v10 h-2 z M889.5 517.5 h2 v10 h-2 z M897.5 519.5 h2 v2 h-2 z M901.5 517.5 h2 v4 h-2 z M905.5 514.5 h2 v4 h-2 z M913.5 513.5 h2 v5 h-2 z M917.5 500.5 h2 v16 h-2 z M940.5 536.5 h2 v8 h-2 z M959.5 531.5 h2 v9 h-2 z M971.5 504.5 h2 v32 h-2 z M983.5 508.5 h2 v16 h-2 z M987.5 515.5 h2 v3 h-2 z M990.5 511.5 h2 v4 h-2 z M998.5 500.5 h2 v12 h-2 z M1002.5 460.5 h2 v50 h-2 z M1006.5 456.5 h2 v4 h-2 z M1014.5 416.5 h2 v46 h-2 z M1018.5 387.5 h2 v29 h-2 z M1022.5 381.5 h2 v13 h-2 z M1025.5 357.5 h2 v31 h-2 z M1029.5 358.5 h2 v3 h-2 z M1033.5 362.5 h2 v3 h-2 z M1041.5 301.5 h2 v41 h-2 z M1045.5 298.5 h2 v3 h-2 z M1053.5 297.5 h2 v4 h-2 z M1060.5 281.5 h2 v25 h-2 z M1064.5 277.5 h2 v8 h-2 z M1068.5 269.5 h2 v9 h-2 z M1072.5 254.5 h2 v15 h-2 z M1084.5 276.5 h2 v4 h-2 z M1088.5 274.5 h2 v4 h-2 z M1091.5 265.5 h2 v7 h-2 z M1111.5 313.5 h2 v8 h-2 z M1130.5 305.5 h2 v5 h-2 z M1134.5 305.5 h2 v6 h-2 z M1150.5 310.5 h2 v8 h-2 z M1161.5 289.5 h2 v29 h-2 z M1165.5 285.5 h2 v4 h-2 z M1169.5 273.5 h2 v16 h-2 z M1181.5 295.5 h2 v14 h-2 z M1189.5 284.5 h2 v2 h-2 z M1192.5 265.5 h2 v17 h-2 z M1196.5 222.5 h2 v37 h-2 z M1208.5 202.5 h2 v24 h-2 z M1223.5 234.5 h2 v4 h-2 z M1231.5 223.5 h2 v19 h-2 z M1235.5 210.5 h2 v8 h-2 z M1270.5 306.5 h2 v13 h-2 z M1293.5 313.5 h2 v16 h-2 z M1297.5 311.5 h2 v3 h-2 z M1301.5 293.5 h2 v24 h-2 z M1305.5 267.5 h2 v19 h-2 z M1321.5 278.5 h2 v21 h-2 z M1340.5 266.5 h2 v23 h-2 z M1344.5 246.5 h2 v24 h-2 z M1348.5 242.5 h2 v4 h-2 z M1352.5 233.5 h2 v14 h-2 z M1356.5 218.5 h2 v15 h-2 z M1359.5 214.5 h2 v28 h-2 z M1375.5 218.5 h2 v12 h-2 z M1383.5 222.5 h2 v3 h-2 z M1394.5 230.5 h2 v5 h-2 z M1398.5 210.5 h2 v5 h-2 z M1402.5 166.5 h2 v37 h-2 z M1410.5 174.5 h2 v8 h-2 z" stroke="#000" stroke-width="1" fill="#fff" shape-rendering="crispEdges"/>
<path d="M12 516 h3 v5 h-3 z M27 502 h3 v6 h-3 z M35 506 h3 v5 h-3 z M39 511 h3 v10 h-3 z M43 521 h3 v4 h-3 z M47 523 h3 v5 h-3 z M55 523 h3 v5 h-3 z M58 525 h3 v5 h-3 z M70 526 h3 v4 h-3 z M74 530 h3 v3 h-3 z M82 528 h3 v3 h-3 z M86 531 h3 v6 h-3 z M93 529 h3 v3 h-3 z M97 458 h3 v71 h-3 z M113 521 h3 v6 h-3 z M124 522 h3 v7 h-3 z M132 519 h3 v6 h-3 z M144 516 h3 v6 h-3 z M155 466 h3 v35 h-3 z M163 496 h3 v6 h-3 z M167 502 h3 v4 h-3 z M171 504 h3 v4 h-3 z M179 504 h3 v7 h-3 z M187 503 h3 v25 h-3 z M190 508 h3 v7 h-3 z M198 512 h3 v4 h-3 z M206 505 h3 v18 h-3 z M210 522 h3 v6 h-3 z M214 527 h3 v3 h-3 z M225 529 h3 v7 h-3 z M233 530 h3 v8 h-3 z M237 536 h3 v4 h-3 z M241 539 h3 v10 h-3 z M245 547 h3 v7 h-3 z M249 538 h3 v37 h-3 z M253 553 h3 v5 h-3 z M256 556 h3 v5 h-3 z M268 551 h3 v3 h-3 z M276 550 h3 v3 h-3 z M284 547 h3 v10 h-3 z M288 556 h3 v6 h-3 z M291 562 h3 v3 h-3 z M295 562 h3 v10 h-3 z M303 567 h3 v5 h-3 z M315 566 h3 v4 h-3 z M322 566 h3 v8 h-3 z M330 565 h3 v10 h-3 z M338 572 h3 v5 h-3 z M361 535 h3 v5 h-3 z M385 531 h3 v16 h-3 z M392 539 h3 v13 h-3 z M396 551 h3 v5 h-3 z M412 542 h3 v12 h-3 z M423 539 h3 v5 h-3 z M431 534 h3 v6 h-3 z M443 524 h3 v5 h-3 z M455 517 h3 v8 h-3 z M466 519 h3 v3 h-3 z M474 516 h3 v5 h-3 z M486 523 h3 v3 h-3 z M493 522 h3 v4 h-3 z M497 527 h3 v7 h-3 z M501 533 h3 v6 h-3 z M505 536 h3 v3 h-3 z M513 534 h3 v12 h-3 z M521 532 h3 v16 h-3 z M536 516 h3 v12 h-3 z M540 533 h3 v4 h-3 z M544 534 h3 v15 h-3 z M552 547 h3 v2 h-3 z M555 549 h3 v11 h-3 z M563 555 h3 v10 h-3 z M567 564 h3 v3 h-3 z M571 566 h3 v2 h-3 z M575 567 h3 v4 h-3 z M579 569 h3 v5 h-3 z M587 581 h3 v9 h-3 z M590 577 h3 v7 h-3 z M606 577 h3 v4 h-3 z M614 577 h3 v4 h-3 z M618 579 h3 v4 h-3 z M625 574 h3 v4 h-3 z M637 572 h3 v9 h-3 z M649 573 h3 v6 h-3 z M656 568 h3 v4 h-3 z M668 564 h3 v3 h-3 z M676 565 h3 v3 h-3 z M680 567 h3 v5 h-3 z M695 572 h3 v8 h-3 z M699 579 h3 v6 h-3 z M703 584 h3 v3 h-3 z M711 585 h3 v7 h-3 z M726 579 h3 v8 h-3 z M742 552 h3 v1 h-3 z M746 552 h3 v1 h-3 z M761 505 h3 v5 h-3 z M765 515 h3 v14 h-3 z M769 528 h3 v1 h-3 z M773 528 h3 v1 h-3 z M785 511 h3 v6 h-3 z M792 520 h3 v4 h-3 z M800 504 h3 v7 h-3 z M804 509 h3 v6 h-3 z M808 515 h3 v14 h-3 z M823 515 h3 v7 h-3 z M827 521 h3 v3 h-3 z M835 519 h3 v9 h-3 z M843 524 h3 v3 h-3 z M847 524 h3 v3 h-3 z M851 527 h3 v6 h-3 z M855 524 h3 v16 h-3 z M862 516 h3 v10 h-3 z M866 525 h3 v6 h-3 z M878 522 h3 v6 h-3 z M886 519 h3 v9 h-3 z M893 518 h3 v3 h-3 z M909 514 h3 v5 h-3 z M921 500 h3 v13 h-3 z M924 508 h3 v12 h-3 z M928 510 h3 v27 h-3 z M932 535 h3 v14 h-3 z M936 534 h3 v15 h-3 z M944 543 h3 v6 h-3 z M948 540 h3 v17 h-3 z M952 540 h3 v17 h-3 z M956 540 h3 v13 h-3 z M963 523 h3 v17 h-3 z M967 528 h3 v13 h-3 z M975 504 h3 v5 h-3 z M979 519 h3 v4 h-3 z M994 510 h3 v5 h-3 z M1010 453 h3 v4 h-3 z M1037 349 h3 v18 h-3 z M1049 297 h3 v5 h-3 z M1056 298 h3 v8 h-3 z M1076 254 h3 v23 h-3 z M1080 270 h3 v5 h-3 z M1095 258 h3 v24 h-3 z M1099 279 h3 v4 h-3 z M1103 281 h3 v10 h-3 z M1107 284 h3 v30 h-3 z M1115 312 h3 v3 h-3 z M1119 313 h3 v3 h-3 z M1123 314 h3 v4 h-3 z M1126 316 h3 v3 h-3 z M1138 301 h3 v5 h-3 z M1142 310 h3 v9 h-3 z M1146 318 h3 v4 h-3 z M1154 305 h3 v13 h-3 z M1157 310 h3 v12 h-3 z M1173 273 h3 v31 h-3 z M1177 305 h3 v5 h-3 z M1185 291 h3 v3 h-3 z M1200 221 h3 v3 h-3 z M1204 222 h3 v6 h-3 z M1212 202 h3 v14 h-3 z M1216 215 h3 v20 h-3 z M1220 229 h3 v10 h-3 z M1227 231 h3 v12 h-3 z M1239 210 h3 v5 h-3 z M1243 215 h3 v17 h-3 z M1247 230 h3 v25 h-3 z M1251 243 h3 v32 h-3 z M1255 273 h3 v27 h-3 z M1258 297 h3 v5 h-3 z M1262 301 h3 v20 h-3 z M1266 303 h3 v19 h-3 z M1274 304 h3 v7 h-3 z M1278 312 h3 v3 h-3 z M1282 313 h3 v3 h-3 z M1286 318 h3 v4 h-3 z M1289 329 h3 v9 h-3 z M1309 266 h3 v5 h-3 z M1313 267 h3 v15 h-3 z M1317 280 h3 v19 h-3 z M1324 265 h3 v9 h-3 z M1328 271 h3 v15 h-3 z M1332 278 h3 v4 h-3 z M1336 278 h3 v4 h-3 z M1363 214 h3 v30 h-3 z M1367 209 h3 v10 h-3 z M1371 219 h3 v4 h-3 z M1379 221 h3 v3 h-3 z M1387 223 h3 v8 h-3 z M1390 230 h3 v6 h-3 z M1406 166 h3 v14 h-3 z" fill="#000" shape-rendering="crispEdges"/>
<path d="M10.0 517.0 L11.5 517.0 L13.0 517.0 L14.5 517.0 L16.0 517.0 L17.5 517.0 L19.0 517.0 L20.5 516.6 L22.0 515.4 L23.5 513.7 L25.0 511.7 L26.5 509.6 L28.0 507.7 L29.5 506.2 L31.0 505.2 L32.5 505.0 L34.0 505.4 L35.5 506.0 L37.0 506.9 L38.5 507.9 L40.0 509.0 L41.5 510.4 L43.0 512.4 L44.5 514.6 L46.0 516.8 L47.5 518.6 L49.0 519.8 L50.5 520.9 L52.0 521.9 L53.5 522.8 L55.0 523.6 L56.5 524.4 L58.0 525.1 L59.5 525.8 L61.0 526.4 L62.5 527.0 L64.0 527.5 L65.5 528.0 L67.0 528.5 L68.5 528.9 L70.0 529.2 L71.5 529.5 L73.0 529.7 L74.5 529.9 L76.0 530.1 L77.5 530.3 L79.0 530.7 L80.5 531.3 L82.0 533.2 L83.5 534.8 L85.0 534.7 L86.5 533.2 L88.0 531.5 L89.5 530.2 L91.0 529.8 L92.5 529.6 L94.0 529.5 L95.5 529.4 L97.0 529.3 L98.5 529.1 L100.0 529.0 L101.5 528.8 L103.0 528.6 L104.5 528.3 L106.0 528.1 L107.5 528.0 L109.0 528.0 L110.5 528.0 L112.0 528.0 L113.5 528.0 L115.0 528.0 L116.5 528.0 L118.0 528.0 L119.5 528.0 L121.0 527.9 L122.5 527.7 L124.0 527.3 L125.5 526.7 L127.0 526.2 L128.5 525.6 L130.0 525.0 L131.5 524.4 L133.0 523.8 L134.5 523.1 L136.0 522.4 L137.5 521.8 L139.0 521.3 L140.5 520.9 L142.0 520.6 L143.5 520.4 L145.0 520.2 L146.5 520.1 L148.0 519.9 L149.5 519.6 L151.0 519.3 L152.5 518.8 L154.0 517.4 L155.5 515.2 L157.0 512.7 L158.5 510.2 L160.0 508.0 L161.5 505.9 L163.0 503.7 L164.5 501.6 L166.0 499.9 L167.5 499.1 L169.0 499.2 L170.5 500.1 L172.0 501.5 L173.5 503.0 L175.0 504.4 L176.5 505.2 L178.0 505.9 L179.5 506.4 L181.0 507.0 L182.5 507.4 L184.0 507.9 L185.5 508.3 L187.0 508.7 L188.5 509.1 L190.0 509.5 L191.5 509.8 L193.0 510.1 L194.5 510.4 L196.0 510.8 L197.5 511.1 L199.0 511.6 L200.5 512.2 L202.0 513.4 L203.5 514.9 L205.0 516.6 L206.5 518.0 L208.0 519.0 L209.5 519.5 L211.0 520.0 L212.5 520.3 L214.0 520.6 L215.5 520.9 L217.0 521.2 L218.5 521.6 L220.0 522.0 L221.5 522.5 L223.0 523.2 L224.5 523.9 L226.0 524.6 L227.5 525.5 L229.0 526.4 L230.5 527.3 L232.0 528.4 L233.5 529.7 L235.0 531.0 L236.5 532.5 L238.0 534.0 L239.5 535.5 L241.0 537.1 L242.5 538.9 L244.0 540.9 L245.5 543.0 L247.0 544.9 L248.5 546.6 L250.0 548.0 L251.5 549.1 L253.0 550.2 L254.5 551.1 L256.0 552.0 L257.5 552.8 L259.0 553.5 L260.5 554.2 L262.0 555.0 L263.5 555.7 L265.0 556.4 L266.5 556.8 L268.0 557.0 L269.5 556.9 L271.0 556.8 L272.5 556.6 L274.0 556.3 L275.5 556.0 L277.0 555.6 L278.5 555.3 L280.0 555.0 L281.5 554.7 L283.0 554.3 L284.5 553.9 L286.0 553.5 L287.5 553.2 L289.0 553.0 L290.5 553.0 L292.0 553.7 L293.5 554.9 L295.0 556.4 L296.5 558.2 L298.0 560.0 L299.5 561.6 L301.0 562.9 L302.5 564.4 L304.0 566.0 L305.5 567.5 L307.0 568.8 L308.5 569.7 L310.0 570.0 L311.5 569.1 L313.0 567.0 L314.5 564.9 L316.0 564.0 L317.5 564.1 L319.0 564.4 L320.5 564.7 L322.0 565.2 L323.5 565.8 L325.0 566.4 L326.5 566.9 L328.0 567.4 L329.5 567.9 L331.0 568.2 L332.5 568.6 L334.0 569.0 L335.5 569.4 L337.0 569.7 L338.5 569.9 L340.0 570.0 L341.5 569.9 L343.0 569.8 L344.5 569.5 L346.0 569.1 L347.5 568.7 L349.0 568.3 L350.5 567.8 L352.0 567.3 L353.5 566.6 L355.0 565.7 L356.5 564.5 L358.0 562.3 L359.5 559.4 L361.0 556.1 L362.5 553.0 L364.0 549.6 L365.5 546.1 L367.0 542.5 L368.5 539.1 L370.0 536.0 L371.5 533.1 L373.0 530.4 L374.5 528.0 L376.0 526.0 L377.5 524.3 L379.0 522.7 L380.5 521.5 L382.0 521.0 L383.5 521.4 L385.0 522.3 L386.5 523.8 L388.0 525.5 L389.5 527.4 L391.0 529.5 L392.5 532.5 L394.0 535.9 L395.5 539.1 L397.0 541.9 L398.5 544.8 L400.0 547.4 L401.5 548.9 L403.0 549.0 L404.5 548.9 L406.0 548.7 L407.5 548.4 L409.0 548.2 L410.5 547.9 L412.0 547.6 L413.5 547.2 L415.0 546.8 L416.5 546.3 L418.0 545.7 L419.5 545.2 L421.0 544.6 L422.5 544.0 L424.0 543.3 L425.5 542.5 L427.0 541.7 L428.5 540.9 L430.0 540.0 L431.5 539.1 L433.0 538.1 L434.5 537.0 L436.0 535.9 L437.5 534.8 L439.0 533.7 L440.5 532.6 L442.0 531.5 L443.5 530.3 L445.0 529.1 L446.5 528.0 L448.0 527.0 L449.5 526.2 L451.0 525.6 L452.5 525.1 L454.0 524.6 L455.5 524.1 L457.0 523.7 L458.5 523.4 L460.0 523.0 L461.5 522.6 L463.0 522.3 L464.5 522.0 L466.0 521.6 L467.5 521.4 L469.0 521.1 L470.5 520.9 L472.0 520.8 L473.5 520.6 L475.0 520.4 L476.5 520.3 L478.0 520.2 L479.5 520.1 L481.0 520.0 L482.5 520.0 L484.0 520.3 L485.5 520.9 L487.0 521.6 L488.5 522.4 L490.0 523.0 L491.5 523.5 L493.0 524.0 L494.5 524.5 L496.0 525.1 L497.5 525.7 L499.0 526.7 L500.5 528.0 L502.0 529.7 L503.5 531.4 L505.0 533.1 L506.5 534.4 L508.0 535.7 L509.5 537.0 L511.0 538.2 L512.5 539.2 L514.0 540.0 L515.5 540.7 L517.0 541.3 L518.5 541.9 L520.0 542.4 L521.5 542.7 L523.0 543.0 L524.5 543.0 L526.0 542.5 L527.5 541.7 L529.0 540.7 L530.5 539.6 L532.0 538.1 L533.5 536.4 L535.0 534.8 L536.5 533.7 L538.0 532.8 L539.5 532.0 L541.0 531.3 L542.5 531.0 L544.0 531.1 L545.5 531.8 L547.0 532.7 L548.5 534.5 L550.0 537.0 L551.5 539.8 L553.0 542.8 L554.5 545.6 L556.0 548.0 L557.5 550.1 L559.0 552.1 L560.5 554.0 L562.0 555.8 L563.5 557.5 L565.0 559.1 L566.5 560.7 L568.0 562.3 L569.5 563.7 L571.0 564.6 L572.5 565.1 L574.0 565.3 L575.5 565.5 L577.0 565.6 L578.5 565.7 L580.0 566.0 L581.5 566.8 L583.0 568.2 L584.5 570.0 L586.0 571.9 L587.5 573.5 L589.0 574.9 L590.5 576.4 L592.0 577.9 L593.5 579.1 L595.0 579.8 L596.5 580.0 L598.0 580.0 L599.5 580.0 L601.0 580.0 L602.5 580.0 L604.0 580.0 L605.5 579.6 L607.0 578.7 L608.5 577.6 L610.0 576.6 L611.5 576.0 L613.0 576.0 L614.5 576.0 L616.0 576.0 L617.5 576.0 L619.0 576.0 L620.5 576.0 L622.0 576.0 L623.5 576.0 L625.0 576.0 L626.5 576.0 L628.0 576.0 L629.5 576.0 L631.0 576.1 L632.5 576.3 L634.0 576.7 L635.5 577.1 L637.0 577.6 L638.5 577.9 L640.0 578.0 L641.5 578.0 L643.0 578.0 L644.5 578.0 L646.0 578.0 L647.5 578.0 L649.0 578.0 L650.5 578.0 L652.0 577.6 L653.5 576.8 L655.0 575.8 L656.5 574.6 L658.0 573.4 L659.5 572.3 L661.0 571.3 L662.5 570.1 L664.0 568.9 L665.5 567.8 L667.0 567.1 L668.5 567.0 L670.0 567.0 L671.5 567.0 L673.0 567.0 L674.5 567.0 L676.0 567.0 L677.5 567.0 L679.0 567.0 L680.5 567.0 L682.0 567.2 L683.5 567.5 L685.0 568.0 L686.5 568.5 L688.0 569.1 L689.5 569.8 L691.0 570.5 L692.5 571.5 L694.0 572.6 L695.5 573.9 L697.0 575.3 L698.5 576.7 L700.0 578.0 L701.5 579.3 L703.0 580.7 L704.5 582.1 L706.0 583.4 L707.5 584.6 L709.0 585.8 L710.5 587.0 L712.0 588.2 L713.5 589.2 L715.0 589.9 L716.5 590.0 L718.0 589.8 L719.5 589.6 L721.0 589.3 L722.5 589.1 L724.0 589.0 L725.5 589.0 L727.0 589.0 L728.5 589.0 L730.0 589.0 L731.5 589.0 L733.0 588.8 L734.5 588.1 L736.0 586.9 L737.5 585.4 L739.0 582.8 L740.5 579.3 L742.0 576.0 L743.5 573.1 L745.0 570.2 L746.5 567.2 L748.0 564.0 L749.5 560.3 L751.0 556.3 L752.5 552.1 L754.0 548.0 L755.5 543.8 L757.0 539.5 L758.5 535.5 L760.0 532.0 L761.5 528.9 L763.0 525.9 L764.5 523.5 L766.0 522.0 L767.5 521.2 L769.0 520.6 L770.5 520.2 L772.0 520.0 L773.5 520.0 L775.0 520.0 L776.5 520.0 L778.0 520.0 L779.5 520.0 L781.0 520.0 L782.5 519.9 L784.0 519.8 L785.5 519.7 L787.0 519.5 L788.5 519.2 L790.0 519.0 L791.5 518.5 L793.0 517.5 L794.5 516.5 L796.0 515.6 L797.5 515.0 L799.0 515.0 L800.5 515.0 L802.0 515.0 L803.5 515.0 L805.0 515.0 L806.5 515.0 L808.0 515.0 L809.5 515.0 L811.0 515.2 L812.5 515.3 L814.0 515.6 L815.5 515.9 L817.0 516.5 L818.5 518.1 L820.0 519.8 L821.5 520.9 L823.0 520.9 L824.5 520.5 L826.0 520.0 L827.5 519.5 L829.0 519.1 L830.5 519.0 L832.0 519.2 L833.5 519.7 L835.0 520.2 L836.5 520.8 L838.0 521.4 L839.5 521.9 L841.0 522.3 L842.5 522.7 L844.0 523.0 L845.5 523.4 L847.0 523.7 L848.5 523.9 L850.0 524.0 L851.5 524.0 L853.0 524.0 L854.5 524.0 L856.0 524.0 L857.5 524.0 L859.0 524.0 L860.5 524.0 L862.0 524.1 L863.5 524.2 L865.0 524.4 L866.5 524.6 L868.0 524.8 L869.5 524.9 L871.0 525.1 L872.5 525.3 L874.0 525.5 L875.5 525.7 L877.0 525.8 L878.5 526.0 L880.0 526.0 L881.5 526.0 L883.0 526.0 L884.5 526.0 L886.0 526.0 L887.5 526.0 L889.0 526.0 L890.5 526.0 L892.0 525.5 L893.5 524.7 L895.0 523.8 L896.5 522.8 L898.0 522.0 L899.5 521.3 L901.0 520.7 L902.5 520.1 L904.0 519.5 L905.5 519.1 L907.0 518.8 L908.5 518.6 L910.0 518.5 L911.5 518.3 L913.0 518.2 L914.5 517.9 L916.0 517.5 L917.5 517.0 L919.0 516.5 L920.5 516.1 L922.0 516.0 L923.5 516.1 L925.0 516.3 L926.5 516.6 L928.0 517.0 L929.5 518.2 L931.0 520.5 L932.5 523.3 L934.0 526.0 L935.5 528.5 L937.0 531.2 L938.5 533.8 L940.0 536.0 L941.5 537.8 L943.0 539.3 L944.5 540.7 L946.0 542.0 L947.5 543.3 L949.0 544.6 L950.5 545.6 L952.0 546.0 L953.5 546.0 L955.0 546.0 L956.5 546.0 L958.0 546.0 L959.5 546.0 L961.0 545.9 L962.5 545.7 L964.0 545.4 L965.5 545.1 L967.0 544.4 L968.5 542.4 L970.0 540.0 L971.5 536.9 L973.0 532.9 L974.5 528.9 L976.0 526.0 L977.5 524.0 L979.0 522.4 L980.5 521.0 L982.0 520.0 L983.5 519.2 L985.0 518.6 L986.5 518.1 L988.0 517.6 L989.5 517.1 L991.0 516.7 L992.5 516.4 L994.0 516.1 L995.5 515.8 L997.0 515.4 L998.5 514.8 L1000.0 514.0 L1001.5 512.7 L1003.0 511.0 L1004.5 506.8 L1006.0 500.3 L1007.5 494.1 L1009.0 488.3 L1010.5 482.2 L1012.0 475.4 L1013.5 468.0 L1015.0 460.0 L1016.5 451.1 L1018.0 442.0 L1019.5 433.7 L1021.0 425.6 L1022.5 417.8 L1024.0 410.0 L1025.5 402.0 L1027.0 393.8 L1028.5 386.3 L1030.0 380.0 L1031.5 375.1 L1033.0 371.0 L1034.5 367.4 L1036.0 363.6 L1037.5 359.5 L1039.0 354.6 L1040.5 349.0 L1042.0 343.2 L1043.5 337.7 L1045.0 332.9 L1046.5 328.6 L1048.0 324.4 L1049.5 320.4 L1051.0 316.5 L1052.5 312.7 L1054.0 308.9 L1055.5 305.2 L1057.0 301.8 L1058.5 299.2 L1060.0 297.1 L1061.5 295.4 L1063.0 293.8 L1064.5 292.0 L1066.0 290.0 L1067.5 287.4 L1069.0 284.4 L1070.5 281.5 L1072.0 279.0 L1073.5 276.9 L1075.0 275.0 L1076.5 273.3 L1078.0 272.0 L1079.5 270.9 L1081.0 270.0 L1082.5 269.3 L1084.0 269.0 L1085.5 269.2 L1087.0 269.8 L1088.5 270.4 L1090.0 271.0 L1091.5 271.5 L1093.0 271.9 L1094.5 272.4 L1096.0 273.0 L1097.5 273.7 L1099.0 274.6 L1100.5 275.7 L1102.0 277.0 L1103.5 279.1 L1105.0 281.9 L1106.5 285.1 L1108.0 288.0 L1109.5 290.5 L1111.0 293.0 L1112.5 295.5 L1114.0 298.0 L1115.5 300.8 L1117.0 303.7 L1118.5 306.5 L1120.0 309.0 L1121.5 311.4 L1123.0 313.5 L1124.5 314.0 L1126.0 314.0 L1127.5 314.0 L1129.0 314.0 L1130.5 314.0 L1132.0 314.0 L1133.5 313.7 L1135.0 313.1 L1136.5 312.2 L1138.0 311.5 L1139.5 311.0 L1141.0 311.0 L1142.5 311.0 L1144.0 311.0 L1145.5 311.0 L1147.0 311.0 L1148.5 311.0 L1150.0 311.7 L1151.5 312.7 L1153.0 314.0 L1154.5 315.2 L1156.0 316.0 L1157.5 316.5 L1159.0 316.9 L1160.5 316.7 L1162.0 313.5 L1163.5 309.1 L1165.0 306.1 L1166.5 303.3 L1168.0 300.7 L1169.5 298.6 L1171.0 296.9 L1172.5 295.2 L1174.0 293.8 L1175.5 293.1 L1177.0 293.0 L1178.5 293.0 L1180.0 293.0 L1181.5 293.0 L1183.0 293.8 L1184.5 296.4 L1186.0 298.0 L1187.5 297.5 L1189.0 296.2 L1190.5 294.2 L1192.0 292.0 L1193.5 288.5 L1195.0 283.5 L1196.5 278.2 L1198.0 272.2 L1199.5 265.9 L1201.0 260.4 L1202.5 255.3 L1204.0 250.0 L1205.5 244.0 L1207.0 237.8 L1208.5 232.1 L1210.0 226.3 L1211.5 221.8 L1213.0 219.8 L1214.5 218.5 L1216.0 218.0 L1217.5 219.6 L1219.0 222.5 L1220.5 224.4 L1222.0 225.5 L1223.5 226.3 L1225.0 227.2 L1226.5 228.6 L1228.0 231.5 L1229.5 233.8 L1231.0 233.7 L1232.5 232.6 L1234.0 231.0 L1235.5 229.5 L1237.0 227.4 L1238.5 225.3 L1240.0 224.0 L1241.5 223.4 L1243.0 223.1 L1244.5 223.0 L1246.0 223.7 L1247.5 225.0 L1249.0 226.7 L1250.5 228.7 L1252.0 231.8 L1253.5 235.9 L1255.0 241.1 L1256.5 247.4 L1258.0 257.7 L1259.5 268.3 L1261.0 275.4 L1262.5 281.0 L1264.0 285.9 L1265.5 290.6 L1267.0 295.5 L1268.5 299.9 L1270.0 303.0 L1271.5 305.0 L1273.0 306.7 L1274.5 308.1 L1276.0 309.3 L1277.5 310.4 L1279.0 311.3 L1280.5 312.1 L1282.0 312.9 L1283.5 313.7 L1285.0 314.7 L1286.5 316.1 L1288.0 317.5 L1289.5 318.6 L1291.0 319.0 L1292.5 319.0 L1294.0 319.0 L1295.5 319.0 L1297.0 319.0 L1298.5 318.8 L1300.0 317.0 L1301.5 314.0 L1303.0 310.7 L1304.5 306.4 L1306.0 301.8 L1307.5 297.7 L1309.0 293.7 L1310.5 290.0 L1312.0 287.0 L1313.5 284.4 L1315.0 281.8 L1316.5 279.6 L1318.0 278.3 L1319.5 278.0 L1321.0 278.0 L1322.5 278.0 L1324.0 278.0 L1325.5 278.0 L1327.0 278.2 L1328.5 278.9 L1330.0 279.8 L1331.5 280.6 L1333.0 281.0 L1334.5 280.8 L1336.0 280.3 L1337.5 279.6 L1339.0 278.7 L1340.5 277.6 L1342.0 275.3 L1343.5 272.1 L1345.0 268.5 L1346.5 265.0 L1348.0 262.0 L1349.5 259.0 L1351.0 256.1 L1352.5 253.1 L1354.0 250.0 L1355.5 246.7 L1357.0 243.3 L1358.5 240.0 L1360.0 236.8 L1361.5 234.1 L1363.0 231.6 L1364.5 229.2 L1366.0 227.1 L1367.5 225.4 L1369.0 224.2 L1370.5 223.0 L1372.0 222.0 L1373.5 221.3 L1375.0 221.0 L1376.5 221.0 L1378.0 221.0 L1379.5 221.0 L1381.0 221.0 L1382.5 221.0 L1384.0 221.6 L1385.5 222.6 L1387.0 223.7 L1388.5 224.7 L1390.0 225.5 L1391.5 226.4 L1393.0 227.2 L1394.5 227.8 L1396.0 228.0 L1397.5 226.9 L1399.0 224.2 L1400.5 220.6 L1402.0 217.0 L1403.5 213.1 L1405.0 208.5 L1406.5 204.2 L1408.0 200.7 L1409.5 197.5 L1411.0 194.7 L1412.0 193.0" fill="none" stroke="#000" stroke-width="2" stroke-linejoin="round" shape-rendering="crispEdges"/>
<line x1="1065.6" y1="242.4" x2="1500" y2="131.2" stroke="#ff0000" stroke-width="1.15" shape-rendering="crispEdges"/>
<rect x="1073" y="329" width="125" height="1" fill="#ff0000"/>
<rect x="1198" y="330" width="251" height="1" fill="#ff0000"/>
<rect x="1449" y="332" width="74" height="1" fill="#ff0000"/>
<line x1="1418" y1="158" x2="1494" y2="306" stroke="#ff0000" stroke-width="1.15" shape-rendering="crispEdges"/>
<path d="M1497 313 L1486 303 L1497.5 297 Z" fill="#ff0000"/>
<rect x="1388" y="94" width="6" height="6" fill="#ff0000"/>
<rect x="1436" y="109" width="6" height="6" fill="#ff0000"/>
<text x="103" y="658" fill="#0000ff" text-anchor="start" textLength="128">Song (4) dang tam giac</text>
<text x="278" y="600" fill="#ff0000" text-anchor="start" >c</text>
<text x="499" y="498" fill="#ff0000" text-anchor="start" >d</text>
<text x="708.5" y="611" fill="#ff0000" text-anchor="start" >e</text>
<text x="708.5" y="636" fill="#0000ff" text-anchor="start" >(4)</text>
<text x="793.5" y="487" fill="#ff0000" text-anchor="start" >1</text>
<text x="852.5" y="578" fill="#000" text-anchor="start" >a</text>
<text x="918.5" y="485" fill="#000" text-anchor="start" >b</text>
<text x="949" y="572" fill="#000" text-anchor="start" >c</text>
<text x="945" y="597" fill="#ff0000" text-anchor="start" >2</text>
<text x="968.5" y="492" fill="#000" text-anchor="start" >i</text>
<text x="991" y="544" fill="#000" text-anchor="start" >ii</text>
<text x="1034" y="276" fill="#000" text-anchor="start" >iii</text>
<text x="1061" y="352" fill="#000" text-anchor="start" >iv</text>
<text x="1072.5" y="240" fill="#000" text-anchor="start" >v</text>
<text x="1073.5" y="214" fill="#ff0000" text-anchor="start" >3</text>
<text x="1151" y="363" fill="#000" text-anchor="start" >a</text>
<text x="1208.5" y="179" fill="#000" text-anchor="start" >b</text>
<text x="1282.5" y="353" fill="#000" text-anchor="start" >c</text>
<text x="1286" y="371" fill="#ff0000" text-anchor="start" >4</text>
<text x="1395.5" y="153.5" fill="#ff0000" text-anchor="start" >5</text>
<text x="1395.5" y="139" fill="#0000ff" text-anchor="start" >(5)</text>
<text x="1368.5" y="346" fill="#ff0000" text-anchor="start" textLength="43">Support</text>
<text x="1391" y="109" fill="#ff0000" text-anchor="start" textLength="47">8.6.2017</text>
<text x="712.3" y="169" fill="#000" text-anchor="start" >0.0%</text>
<text x="712.3" y="338" fill="#000" text-anchor="start" >38.2%</text>
<text x="712.3" y="390" fill="#000" text-anchor="start" >50.0%</text>
<text x="714.5" y="611" fill="#000" text-anchor="start" textLength="39.5" lengthAdjust="spacingAndGlyphs">100.0%</text>
<text x="1608" y="169" fill="#000" text-anchor="end" >26.61</text>
<text x="1608" y="338" fill="#000" text-anchor="end" >22.36</text>
<text x="1608" y="390" fill="#000" text-anchor="end" >21.05</text>
<text x="1608" y="611" fill="#000" text-anchor="end" >15.49</text>
<text x="9.0" y="12" fill="#000" text-anchor="start" textLength="556.6" lengthAdjust="spacingAndGlyphs">ACB - Daily 6/1/2017 Open 25, Hi 25.4, Lo 24.8, Close 24.8 (-0.8%) Vol 2,213,737 MA(Close,5) = 24.98,</text>
<text x="569.6" y="12" fill="#dcdcdc" text-anchor="start" textLength="105.4" lengthAdjust="spacingAndGlyphs">BBTop(Close,20,2)</text>
<text x="678.7" y="12" fill="#000" text-anchor="start" textLength="43.8" lengthAdjust="spacingAndGlyphs">= 25.72,</text>
<text x="725.5" y="12" fill="#dcdcdc" text-anchor="start" textLength="101.5" lengthAdjust="spacingAndGlyphs">BBBot(Close,20,2)</text>
<text x="832.0" y="12" fill="#000" text-anchor="start" textLength="40.0" lengthAdjust="spacingAndGlyphs">= 22.96,</text>
<text x="877.3" y="12" fill="#ff0000" text-anchor="start" textLength="80.5" lengthAdjust="spacingAndGlyphs">MA1(Close,20)</text>
<text x="961.8" y="12" fill="#000" text-anchor="start" textLength="42.2" lengthAdjust="spacingAndGlyphs">= 24.34,</text>
<text x="1008.0" y="12" fill="#0000ff" text-anchor="start" textLength="80.6" lengthAdjust="spacingAndGlyphs">MA2(Close,40)</text>
<text x="1092.6" y="12" fill="#000" text-anchor="start" textLength="42.2" lengthAdjust="spacingAndGlyphs">= 23.84,</text>
<text x="1138.9" y="12" fill="#22bb22" text-anchor="start" textLength="87.5" lengthAdjust="spacingAndGlyphs">MA3(Close,100)</text>
<text x="1230.4" y="12" fill="#000" text-anchor="start" textLength="42.2" lengthAdjust="spacingAndGlyphs">= 23.34,</text>
<text x="1277.0" y="12" fill="#808000" text-anchor="start" textLength="87.6" lengthAdjust="spacingAndGlyphs">MA4(Close,200)</text>
<text x="1368.6" y="12" fill="#000" text-anchor="start" textLength="39.8" lengthAdjust="spacingAndGlyphs">= 20.13</text>
<rect x="1609" y="0" width="1" height="683" fill="#000"/>
<path d="M1610.5 174.5 L1617.5 167 H1649 V182 H1617.5 Z" fill="#000"/>
<text x="1621.5" y="179" fill="#fff" text-anchor="start" >26.2</text>
<rect x="1617" y="216" width="46" height="15" fill="#ff0000"/>
<text x="1622" y="228" fill="#000" text-anchor="start" >24.965</text>
<rect x="1617" y="254" width="53" height="15" fill="#0000ff"/>
<text x="1622" y="266" fill="#fff" text-anchor="start" >24.0125</text>
<rect x="1617" y="269" width="46" height="14.5" fill="#2db82d"/>
<text x="1622" y="280.5" fill="#000" text-anchor="start" >23.689</text>
<rect x="1617" y="397" width="53" height="15" fill="#808000"/>
<text x="1622" y="409" fill="#000" text-anchor="start" >20.4191</text>
<rect x="5" y="665" width="1605" height="1" fill="#000"/>
<rect x="5" y="682" width="1665" height="1" fill="#000"/>
<rect x="29" y="665" width="1" height="6" fill="#000"/>
<text x="32.5" y="676.8" fill="#000" text-anchor="start"  font-weight="bold">2016</text>
<rect x="107" y="665" width="1" height="6" fill="#000"/>
<text x="110.5" y="676.8" fill="#000" text-anchor="start" >Feb</text>
<rect x="169" y="665" width="1" height="6" fill="#000"/>
<text x="172.5" y="676.8" fill="#000" text-anchor="start" >Mar</text>
<rect x="258" y="665" width="1" height="6" fill="#000"/>
<text x="261.5" y="676.8" fill="#000" text-anchor="start" >Apr</text>
<rect x="336" y="665" width="1" height="6" fill="#000"/>
<text x="339.5" y="676.8" fill="#000" text-anchor="start" >May</text>
<rect x="413" y="665" width="1" height="6" fill="#000"/>
<text x="416.5" y="676.8" fill="#000" text-anchor="start" >Jun</text>
<rect x="499" y="665" width="1" height="6" fill="#000"/>
<text x="502.5" y="676.8" fill="#000" text-anchor="start" >Jul</text>
<rect x="580" y="665" width="1" height="6" fill="#000"/>
<text x="583.5" y="676.8" fill="#000" text-anchor="start" >Aug</text>
<rect x="669" y="665" width="1" height="6" fill="#000"/>
<text x="672.5" y="676.8" fill="#000" text-anchor="start" >Sep</text>
<rect x="751" y="665" width="1" height="6" fill="#000"/>
<text x="754.5" y="676.8" fill="#000" text-anchor="start" >Oct</text>
<rect x="832" y="665" width="1" height="6" fill="#000"/>
<text x="835.5" y="676.8" fill="#000" text-anchor="start" >Nov</text>
<rect x="918" y="665" width="1" height="6" fill="#000"/>
<text x="921.5" y="676.8" fill="#000" text-anchor="start" >Dec</text>
<rect x="1003" y="665" width="1" height="6" fill="#000"/>
<text x="1006.5" y="676.8" fill="#000" text-anchor="start"  font-weight="bold">2017</text>
<rect x="1069" y="665" width="1" height="6" fill="#000"/>
<text x="1072.5" y="676.8" fill="#000" text-anchor="start" >Feb</text>
<rect x="1143" y="665" width="1" height="6" fill="#000"/>
<text x="1146.5" y="676.8" fill="#000" text-anchor="start" >Mar</text>
<rect x="1232" y="665" width="1" height="6" fill="#000"/>
<text x="1235.5" y="676.8" fill="#000" text-anchor="start" >Apr</text>
<rect x="1306" y="665" width="1" height="6" fill="#000"/>
<text x="1309.5" y="676.8" fill="#000" text-anchor="start" >May</text>
<rect x="1387" y="665" width="1" height="6" fill="#000"/>
<text x="1390.5" y="676.8" fill="#000" text-anchor="start" >Jun</text>
<rect x="5" y="684" width="1665" height="210" fill="#000"/>
<line x1="9" y1="699.5" x2="1608" y2="699.5" stroke="#dedede" stroke-width="1" stroke-dasharray="1 1"/><line x1="9" y1="744.5" x2="1608" y2="744.5" stroke="#dedede" stroke-width="1" stroke-dasharray="1 1"/><line x1="9" y1="790.5" x2="1608" y2="790.5" stroke="#dedede" stroke-width="1" stroke-dasharray="1 1"/><line x1="9" y1="835.5" x2="1608" y2="835.5" stroke="#dedede" stroke-width="1" stroke-dasharray="1 1"/><rect x="29" y="684" width="1" height="194" fill="#d0d0d0"/><line x1="107.5" y1="684" x2="107.5" y2="878" stroke="#dedede" stroke-width="1" stroke-dasharray="1 1"/><line x1="169.5" y1="684" x2="169.5" y2="878" stroke="#dedede" stroke-width="1" stroke-dasharray="1 1"/><line x1="258.5" y1="684" x2="258.5" y2="878" stroke="#dedede" stroke-width="1" stroke-dasharray="1 1"/><line x1="336.5" y1="684" x2="336.5" y2="878" stroke="#dedede" stroke-width="1" stroke-dasharray="1 1"/><line x1="413.5" y1="684" x2="413.5" y2="878" stroke="#dedede" stroke-width="1" stroke-dasharray="1 1"/><line x1="499.5" y1="684" x2="499.5" y2="878" stroke="#dedede" stroke-width="1" stroke-dasharray="1 1"/><line x1="580.5" y1="684" x2="580.5" y2="878" stroke="#dedede" stroke-width="1" stroke-dasharray="1 1"/><line x1="669.5" y1="684" x2="669.5" y2="878" stroke="#dedede" stroke-width="1" stroke-dasharray="1 1"/><line x1="751.5" y1="684" x2="751.5" y2="878" stroke="#dedede" stroke-width="1" stroke-dasharray="1 1"/><line x1="832.5" y1="684" x2="832.5" y2="878" stroke="#dedede" stroke-width="1" stroke-dasharray="1 1"/><line x1="918.5" y1="684" x2="918.5" y2="878" stroke="#dedede" stroke-width="1" stroke-dasharray="1 1"/><rect x="1003" y="684" width="1" height="194" fill="#d0d0d0"/><line x1="1069.5" y1="684" x2="1069.5" y2="878" stroke="#dedede" stroke-width="1" stroke-dasharray="1 1"/><line x1="1143.5" y1="684" x2="1143.5" y2="878" stroke="#dedede" stroke-width="1" stroke-dasharray="1 1"/><line x1="1232.5" y1="684" x2="1232.5" y2="878" stroke="#dedede" stroke-width="1" stroke-dasharray="1 1"/><line x1="1306.5" y1="684" x2="1306.5" y2="878" stroke="#dedede" stroke-width="1" stroke-dasharray="1 1"/>
<text x="719.3" y="721.7" fill="#33302c" font-size="22.4" textLength="235.5" lengthAdjust="spacingAndGlyphs" font-family="'DejaVu Sans', sans-serif">PRASAD ANALYTICS ©</text>
<text x="809" y="765.6" fill="#33302c" font-size="29" textLength="56.5" lengthAdjust="spacingAndGlyphs" font-family="'DejaVu Sans', sans-serif">ACB</text>
<text x="752.5" y="876.5" fill="#2a2620" font-size="8.8" textLength="169.5" lengthAdjust="spacingAndGlyphs">Dedicated to MY FATHER : BALKRISHNA RAO</text>
<path d="M10.0 849.0 L11.5 848.9 L13.0 848.7 L14.5 848.4 L16.0 848.0 L17.5 847.4 L19.0 846.9 L20.5 846.3 L22.0 845.1 L23.5 843.6 L25.0 842.0 L26.5 840.6 L28.0 839.8 L29.5 839.2 L31.0 838.7 L32.5 838.3 L34.0 838.1 L35.5 838.0 L37.0 838.2 L38.5 838.5 L40.0 839.0 L41.5 839.5 L43.0 840.2 L44.5 841.2 L46.0 842.4 L47.5 843.6 L49.0 844.6 L50.5 845.2 L52.0 845.6 L53.5 846.1 L55.0 846.4 L56.5 846.8 L58.0 847.1 L59.5 847.3 L61.0 847.6 L62.5 847.9 L64.0 848.2 L65.5 848.5 L67.0 848.7 L68.5 849.0 L70.0 849.2 L71.5 849.4 L73.0 849.7 L74.5 849.9 L76.0 850.2 L77.5 850.5 L79.0 850.8 L80.5 851.1 L82.0 851.4 L83.5 851.5 L85.0 851.4 L86.5 851.0 L88.0 850.4 L89.5 849.6 L91.0 848.8 L92.5 848.2 L94.0 847.7 L95.5 847.3 L97.0 846.9 L98.5 846.5 L100.0 846.1 L101.5 845.7 L103.0 845.3 L104.5 844.9 L106.0 844.5 L107.5 844.2 L109.0 843.8 L110.5 843.5 L112.0 843.2 L113.5 842.9 L115.0 842.7 L116.5 842.6 L118.0 842.4 L119.5 842.3 L121.0 842.2 L122.5 842.0 L124.0 841.8 L125.5 841.6 L127.0 841.3 L128.5 840.7 L130.0 840.0 L131.5 839.2 L133.0 838.4 L134.5 837.6 L136.0 837.0 L137.5 836.5 L139.0 836.0 L140.5 835.6 L142.0 835.2 L143.5 834.9 L145.0 834.7 L146.5 834.6 L148.0 834.5 L149.5 834.3 L151.0 834.0 L152.5 833.3 L154.0 832.0 L155.5 830.4 L157.0 828.8 L158.5 827.6 L160.0 826.4 L161.5 825.2 L163.0 824.1 L164.5 823.3 L166.0 823.0 L167.5 823.1 L169.0 823.2 L170.5 823.4 L172.0 823.6 L173.5 823.8 L175.0 824.0 L176.5 824.0 L178.0 824.0 L179.5 824.0 L181.0 824.0 L182.5 824.0 L184.0 824.0 L185.5 824.0 L187.0 824.2 L188.5 825.0 L190.0 826.3 L191.5 827.6 L193.0 828.7 L194.5 829.4 L196.0 829.9 L197.5 830.3 L199.0 830.8 L200.5 831.3 L202.0 832.0 L203.5 832.9 L205.0 833.9 L206.5 834.9 L208.0 835.7 L209.5 836.3 L211.0 836.9 L212.5 837.3 L214.0 837.8 L215.5 838.2 L217.0 838.6 L218.5 839.0 L220.0 839.4 L221.5 839.7 L223.0 840.0 L224.5 840.3 L226.0 840.7 L227.5 841.1 L229.0 841.6 L230.5 842.3 L232.0 843.2 L233.5 844.3 L235.0 845.4 L236.5 846.5 L238.0 847.5 L239.5 848.5 L241.0 849.4 L242.5 850.3 L244.0 851.2 L245.5 852.1 L247.0 853.0 L248.5 853.8 L250.0 854.7 L251.5 855.7 L253.0 856.6 L254.5 857.4 L256.0 858.0 L257.5 858.5 L259.0 858.9 L260.5 859.3 L262.0 859.6 L263.5 859.9 L265.0 860.2 L266.5 860.5 L268.0 860.7 L269.5 860.9 L271.0 861.0 L272.5 860.8 L274.0 860.3 L275.5 859.6 L277.0 858.9 L278.5 858.2 L280.0 857.6 L281.5 856.8 L283.0 856.0 L284.5 855.4 L286.0 855.0 L287.5 855.0 L289.0 855.0 L290.5 855.0 L292.0 855.0 L293.5 855.0 L295.0 855.1 L296.5 855.6 L298.0 856.4 L299.5 857.2 L301.0 857.8 L302.5 858.2 L304.0 858.5 L305.5 858.7 L307.0 858.9 L308.5 859.0 L310.0 858.9 L311.5 858.6 L313.0 858.0 L314.5 857.4 L316.0 856.8 L317.5 856.4 L319.0 855.9 L320.5 855.5 L322.0 855.0 L323.5 854.6 L325.0 854.3 L326.5 854.0 L328.0 853.8 L329.5 853.7 L331.0 853.5 L332.5 853.4 L334.0 853.3 L335.5 853.1 L337.0 853.0 L338.5 852.8 L340.0 852.6 L341.5 852.5 L343.0 852.3 L344.5 852.0 L346.0 851.8 L347.5 851.4 L349.0 851.0 L350.5 850.5 L352.0 849.9 L353.5 849.2 L355.0 848.4 L356.5 847.4 L358.0 846.1 L359.5 844.5 L361.0 842.7 L362.5 840.9 L364.0 838.7 L365.5 836.3 L367.0 834.0 L368.5 831.7 L370.0 829.4 L371.5 827.2 L373.0 825.1 L374.5 823.0 L376.0 821.1 L377.5 819.5 L379.0 817.9 L380.5 816.6 L382.0 816.0 L383.5 816.1 L385.0 816.4 L386.5 816.8 L388.0 817.5 L389.5 818.7 L391.0 820.3 L392.5 822.0 L394.0 823.5 L395.5 824.7 L397.0 825.9 L398.5 827.0 L400.0 828.0 L401.5 828.8 L403.0 829.4 L404.5 830.0 L406.0 830.5 L407.5 831.0 L409.0 831.4 L410.5 831.7 L412.0 832.0 L413.5 832.3 L415.0 832.5 L416.5 832.7 L418.0 832.9 L419.5 833.0 L421.0 833.0 L422.5 832.8 L424.0 832.6 L425.5 832.4 L427.0 832.1 L428.5 831.8 L430.0 831.5 L431.5 831.1 L433.0 830.6 L434.5 830.2 L436.0 829.6 L437.5 829.0 L439.0 828.2 L440.5 827.5 L442.0 826.8 L443.5 826.2 L445.0 825.6 L446.5 825.1 L448.0 824.6 L449.5 824.1 L451.0 823.7 L452.5 823.3 L454.0 822.9 L455.5 822.5 L457.0 822.2 L458.5 821.8 L460.0 821.5 L461.5 821.2 L463.0 820.8 L464.5 820.4 L466.0 820.1 L467.5 819.9 L469.0 819.7 L470.5 819.7 L472.0 819.7 L473.5 819.7 L475.0 819.8 L476.5 819.8 L478.0 819.9 L479.5 820.0 L481.0 820.1 L482.5 820.5 L484.0 821.1 L485.5 821.7 L487.0 822.3 L488.5 822.9 L490.0 823.4 L491.5 823.9 L493.0 824.4 L494.5 824.9 L496.0 825.5 L497.5 826.2 L499.0 827.1 L500.5 828.4 L502.0 829.8 L503.5 831.2 L505.0 832.4 L506.5 833.5 L508.0 834.4 L509.5 835.3 L511.0 836.1 L512.5 836.8 L514.0 837.3 L515.5 837.8 L517.0 838.2 L518.5 838.6 L520.0 838.9 L521.5 839.2 L523.0 839.4 L524.5 839.6 L526.0 839.8 L527.5 840.0 L529.0 840.0 L530.5 839.6 L532.0 838.8 L533.5 837.7 L535.0 836.8 L536.5 836.2 L538.0 835.7 L539.5 835.2 L541.0 834.9 L542.5 834.8 L544.0 835.3 L545.5 836.2 L547.0 837.2 L548.5 838.1 L550.0 839.2 L551.5 840.4 L553.0 841.6 L554.5 842.9 L556.0 844.2 L557.5 845.5 L559.0 846.8 L560.5 848.1 L562.0 849.3 L563.5 850.3 L565.0 851.2 L566.5 852.0 L568.0 852.7 L569.5 853.4 L571.0 854.1 L572.5 854.7 L574.0 855.3 L575.5 855.9 L577.0 856.5 L578.5 857.1 L580.0 857.6 L581.5 858.2 L583.0 858.8 L584.5 859.5 L586.0 860.1 L587.5 860.7 L589.0 861.3 L590.5 861.6 L592.0 861.8 L593.5 862.0 L595.0 862.2 L596.5 862.3 L598.0 862.4 L599.5 862.4 L601.0 862.2 L602.5 861.9 L604.0 861.5 L605.5 861.1 L607.0 860.7 L608.5 860.2 L610.0 859.6 L611.5 858.9 L613.0 858.2 L614.5 857.6 L616.0 857.0 L617.5 856.5 L619.0 856.0 L620.5 855.6 L622.0 855.1 L623.5 854.7 L625.0 854.3 L626.5 853.9 L628.0 853.4 L629.5 853.0 L631.0 852.6 L632.5 852.2 L634.0 851.9 L635.5 851.7 L637.0 851.5 L638.5 851.4 L640.0 851.4 L641.5 851.3 L643.0 851.2 L644.5 851.1 L646.0 851.0 L647.5 850.7 L649.0 850.3 L650.5 849.7 L652.0 849.0 L653.5 848.2 L655.0 847.5 L656.5 846.8 L658.0 846.0 L659.5 845.2 L661.0 844.4 L662.5 843.6 L664.0 842.9 L665.5 842.2 L667.0 841.5 L668.5 840.9 L670.0 840.3 L671.5 839.9 L673.0 839.4 L674.5 839.0 L676.0 838.7 L677.5 838.3 L679.0 838.1 L680.5 838.0 L682.0 838.0 L683.5 838.1 L685.0 838.3 L686.5 838.5 L688.0 838.8 L689.5 839.1 L691.0 839.6 L692.5 840.2 L694.0 840.8 L695.5 841.5 L697.0 842.2 L698.5 843.0 L700.0 843.8 L701.5 844.6 L703.0 845.3 L704.5 846.0 L706.0 846.7 L707.5 847.4 L709.0 848.0 L710.5 848.6 L712.0 849.1 L713.5 849.7 L715.0 850.2 L716.5 850.7 L718.0 850.9 L719.5 851.0 L721.0 850.9 L722.5 850.8 L724.0 850.7 L725.5 850.5 L727.0 850.3 L728.5 850.1 L730.0 849.8 L731.5 849.6 L733.0 849.2 L734.5 848.8 L736.0 848.3 L737.5 847.5 L739.0 846.1 L740.5 844.3 L742.0 842.4 L743.5 840.5 L745.0 838.4 L746.5 836.2 L748.0 834.0 L749.5 831.7 L751.0 829.2 L752.5 826.2 L754.0 822.6 L755.5 818.9 L757.0 815.6 L758.5 812.8 L760.0 810.3 L761.5 808.1 L763.0 806.3 L764.5 804.8 L766.0 803.6 L767.5 802.7 L769.0 802.0 L770.5 801.4 L772.0 800.9 L773.5 800.5 L775.0 800.1 L776.5 799.7 L778.0 799.4 L779.5 799.2 L781.0 799.0 L782.5 799.0 L784.0 799.0 L785.5 799.0 L787.0 799.0 L788.5 799.3 L790.0 800.1 L791.5 800.9 L793.0 801.7 L794.5 802.0 L796.0 802.0 L797.5 802.0 L799.0 802.0 L800.5 802.0 L802.0 802.0 L803.5 802.0 L805.0 802.0 L806.5 802.4 L808.0 803.3 L809.5 804.3 L811.0 805.4 L812.5 806.3 L814.0 807.2 L815.5 808.1 L817.0 809.1 L818.5 810.0 L820.0 810.8 L821.5 811.6 L823.0 812.3 L824.5 812.9 L826.0 813.6 L827.5 814.4 L829.0 815.2 L830.5 816.1 L832.0 817.1 L833.5 817.9 L835.0 818.7 L836.5 819.4 L838.0 820.0 L839.5 820.6 L841.0 821.2 L842.5 821.7 L844.0 822.3 L845.5 822.9 L847.0 823.6 L848.5 824.3 L850.0 825.0 L851.5 825.7 L853.0 826.3 L854.5 826.9 L856.0 827.4 L857.5 827.7 L859.0 827.9 L860.5 828.0 L862.0 828.1 L863.5 828.2 L865.0 828.3 L866.5 828.4 L868.0 828.5 L869.5 828.6 L871.0 828.8 L872.5 829.1 L874.0 829.4 L875.5 829.7 L877.0 830.0 L878.5 830.3 L880.0 830.5 L881.5 830.7 L883.0 830.7 L884.5 830.7 L886.0 830.7 L887.5 830.7 L889.0 830.7 L890.5 830.7 L892.0 830.7 L893.5 830.7 L895.0 830.3 L896.5 829.6 L898.0 828.8 L899.5 828.0 L901.0 827.5 L902.5 827.0 L904.0 826.5 L905.5 826.1 L907.0 826.0 L908.5 826.3 L910.0 826.7 L911.5 827.2 L913.0 827.6 L914.5 827.7 L916.0 827.3 L917.5 826.6 L919.0 825.8 L920.5 825.2 L922.0 825.0 L923.5 825.1 L925.0 825.3 L926.5 825.6 L928.0 826.4 L929.5 828.2 L931.0 830.5 L932.5 832.5 L934.0 833.9 L935.5 835.1 L937.0 836.2 L938.5 837.3 L940.0 838.3 L941.5 839.5 L943.0 840.8 L944.5 842.0 L946.0 843.2 L947.5 844.3 L949.0 845.2 L950.5 846.2 L952.0 847.1 L953.5 847.9 L955.0 848.5 L956.5 848.8 L958.0 848.8 L959.5 848.7 L961.0 848.6 L962.5 848.4 L964.0 848.1 L965.5 847.9 L967.0 847.5 L968.5 847.0 L970.0 846.3 L971.5 845.2 L973.0 843.4 L974.5 841.2 L976.0 839.3 L977.5 837.5 L979.0 835.8 L980.5 834.3 L982.0 833.0 L983.5 832.0 L985.0 831.1 L986.5 830.3 L988.0 829.7 L989.5 829.1 L991.0 828.6 L992.5 828.2 L994.0 827.8 L995.5 827.2 L997.0 826.5 L998.5 825.4 L1000.0 824.1 L1001.5 822.3 L1003.0 819.6 L1004.5 816.3 L1006.0 813.0 L1007.5 810.1 L1009.0 807.2 L1010.5 804.1 L1012.0 800.7 L1013.5 797.0 L1015.0 793.1 L1016.5 789.2 L1018.0 785.3 L1019.5 781.2 L1021.0 776.7 L1022.5 771.3 L1024.0 765.3 L1025.5 759.6 L1027.0 754.7 L1028.5 750.2 L1030.0 746.2 L1031.5 743.1 L1033.0 740.8 L1034.5 738.8 L1036.0 736.5 L1037.5 733.7 L1039.0 730.6 L1040.5 727.4 L1042.0 724.3 L1043.5 721.2 L1045.0 718.2 L1046.5 715.6 L1048.0 713.3 L1049.5 711.2 L1051.0 709.6 L1052.5 708.4 L1054.0 707.3 L1055.5 706.4 L1057.0 705.8 L1058.5 705.3 L1060.0 704.9 L1061.5 704.6 L1063.0 704.3 L1064.5 704.1 L1066.0 704.0 L1067.5 703.9 L1069.0 703.9 L1070.5 703.8 L1072.0 703.8 L1073.5 703.8 L1075.0 704.1 L1076.5 705.0 L1078.0 706.3 L1079.5 707.5 L1081.0 708.7 L1082.5 710.0 L1084.0 711.5 L1085.5 713.2 L1087.0 715.1 L1088.5 717.0 L1090.0 719.0 L1091.5 720.9 L1093.0 722.8 L1094.5 724.8 L1096.0 726.9 L1097.5 729.3 L1099.0 731.9 L1100.5 734.6 L1102.0 737.6 L1103.5 740.7 L1105.0 744.1 L1106.5 747.7 L1108.0 751.5 L1109.5 755.3 L1111.0 759.3 L1112.5 763.4 L1114.0 767.4 L1115.5 771.3 L1117.0 775.0 L1118.5 778.7 L1120.0 782.2 L1121.5 785.3 L1123.0 788.1 L1124.5 790.8 L1126.0 793.2 L1127.5 795.1 L1129.0 796.7 L1130.5 798.1 L1132.0 799.3 L1133.5 800.3 L1135.0 801.1 L1136.5 801.6 L1138.0 802.2 L1139.5 802.8 L1141.0 803.6 L1142.5 804.6 L1144.0 805.8 L1145.5 807.1 L1147.0 808.2 L1148.5 809.4 L1150.0 810.6 L1151.5 811.7 L1153.0 812.6 L1154.5 813.4 L1156.0 814.2 L1157.5 814.8 L1159.0 815.0 L1160.5 814.9 L1162.0 814.5 L1163.5 813.9 L1165.0 813.3 L1166.5 812.4 L1168.0 810.8 L1169.5 809.3 L1171.0 808.5 L1172.5 808.0 L1174.0 807.7 L1175.5 807.7 L1177.0 808.2 L1178.5 809.1 L1180.0 809.8 L1181.5 810.2 L1183.0 810.5 L1184.5 810.8 L1186.0 811.0 L1187.5 811.0 L1189.0 810.6 L1190.5 809.8 L1192.0 808.8 L1193.5 807.5 L1195.0 804.9 L1196.5 801.5 L1198.0 798.0 L1199.5 794.7 L1201.0 791.3 L1202.5 787.9 L1204.0 784.6 L1205.5 781.3 L1207.0 778.3 L1208.5 776.0 L1210.0 774.1 L1211.5 772.5 L1213.0 771.7 L1214.5 771.4 L1216.0 771.1 L1217.5 771.0 L1219.0 771.3 L1220.5 772.4 L1222.0 774.1 L1223.5 775.7 L1225.0 777.0 L1226.5 778.2 L1228.0 779.3 L1229.5 780.2 L1231.0 780.5 L1232.5 780.5 L1234.0 780.5 L1235.5 780.5 L1237.0 780.5 L1238.5 780.5 L1240.0 780.5 L1241.5 780.9 L1243.0 782.0 L1244.5 783.5 L1246.0 785.2 L1247.5 787.7 L1249.0 790.8 L1250.5 794.2 L1252.0 798.4 L1253.5 803.2 L1255.0 808.0 L1256.5 812.9 L1258.0 818.1 L1259.5 823.0 L1261.0 827.4 L1262.5 831.7 L1264.0 835.6 L1265.5 839.1 L1267.0 842.4 L1268.5 845.4 L1270.0 848.0 L1271.5 850.2 L1273.0 852.2 L1274.5 854.0 L1276.0 855.8 L1277.5 857.7 L1279.0 859.4 L1280.5 861.0 L1282.0 862.3 L1283.5 863.4 L1285.0 864.4 L1286.5 865.2 L1288.0 866.1 L1289.5 867.0 L1291.0 868.0 L1292.5 868.7 L1294.0 869.0 L1295.5 868.8 L1297.0 868.1 L1298.5 867.3 L1300.0 866.2 L1301.5 864.6 L1303.0 862.5 L1304.5 860.2 L1306.0 857.1 L1307.5 853.7 L1309.0 850.8 L1310.5 848.4 L1312.0 846.2 L1313.5 844.2 L1315.0 842.5 L1316.5 841.0 L1318.0 839.7 L1319.5 838.6 L1321.0 837.5 L1322.5 836.6 L1324.0 835.7 L1325.5 834.9 L1327.0 834.2 L1328.5 833.6 L1330.0 833.3 L1331.5 833.0 L1333.0 832.7 L1334.5 832.3 L1336.0 831.9 L1337.5 831.3 L1339.0 830.6 L1340.5 829.7 L1342.0 828.6 L1343.5 827.0 L1345.0 824.9 L1346.5 822.6 L1348.0 820.2 L1349.5 817.4 L1351.0 814.6 L1352.5 812.3 L1354.0 810.3 L1355.5 808.4 L1357.0 806.7 L1358.5 805.1 L1360.0 803.4 L1361.5 801.9 L1363.0 800.4 L1364.5 799.1 L1366.0 797.8 L1367.5 796.7 L1369.0 795.5 L1370.5 794.5 L1372.0 793.7 L1373.5 793.4 L1375.0 793.3 L1376.5 793.1 L1378.0 793.0 L1379.5 793.0 L1381.0 793.3 L1382.5 794.1 L1384.0 795.2 L1385.5 796.3 L1387.0 797.7 L1388.5 799.2 L1390.0 800.3 L1391.5 801.2 L1393.0 802.1 L1394.5 802.7 L1396.0 803.0 L1397.5 802.8 L1399.0 802.3 L1400.5 801.3 L1402.0 798.7 L1403.5 796.0 L1405.0 793.8 L1406.5 791.8 L1408.0 789.7 L1409.5 787.6 L1411.0 785.4 L1412.0 784.0" fill="none" stroke="#ff0000" stroke-width="2" stroke-linejoin="round" shape-rendering="crispEdges"/>
<path d="M137 834 h2 V835 h-2 z M141 834 h2 V835 h-2 z M145 834 h2 V835 h-2 z M149 832 h2 V835 h-2 z M153 824 h2 V835 h-2 z M156 822 h2 V835 h-2 z M160 818 h2 V835 h-2 z M164 819 h2 V835 h-2 z M168 820 h2 V835 h-2 z M172 824 h2 V835 h-2 z M176 825 h2 V835 h-2 z M180 825 h2 V835 h-2 z M184 823 h2 V835 h-2 z M188 832 h2 V835 h-2 z M191 833 h2 V835 h-2 z M195 833 h2 V835 h-2 z M199 834 h2 V835 h-2 z M362 831 h2 V835 h-2 z M366 825 h2 V835 h-2 z M370 820 h2 V835 h-2 z M374 814 h2 V835 h-2 z M378 810 h2 V835 h-2 z M382 810 h2 V835 h-2 z M386 817 h2 V835 h-2 z M390 822 h2 V835 h-2 z M393 827 h2 V835 h-2 z M397 831 h2 V835 h-2 z M401 833 h2 V835 h-2 z M405 834 h2 V835 h-2 z M409 834 h2 V835 h-2 z M413 834 h2 V835 h-2 z M417 834 h2 V835 h-2 z M421 833 h2 V835 h-2 z M424 833 h2 V835 h-2 z M428 831 h2 V835 h-2 z M432 828 h2 V835 h-2 z M436 826 h2 V835 h-2 z M440 824 h2 V835 h-2 z M444 823 h2 V835 h-2 z M448 822 h2 V835 h-2 z M452 821 h2 V835 h-2 z M456 820 h2 V835 h-2 z M459 820 h2 V835 h-2 z M463 820 h2 V835 h-2 z M467 819 h2 V835 h-2 z M471 819 h2 V835 h-2 z M475 819 h2 V835 h-2 z M479 820 h2 V835 h-2 z M483 822 h2 V835 h-2 z M487 825 h2 V835 h-2 z M490 826 h2 V835 h-2 z M494 828 h2 V835 h-2 z M498 829 h2 V835 h-2 z M502 833 h2 V835 h-2 z M537 832 h2 V835 h-2 z M541 832 h2 V835 h-2 z M743 829 h2 V835 h-2 z M747 824 h2 V835 h-2 z M751 817 h2 V835 h-2 z M755 808 h2 V835 h-2 z M758 801 h2 V835 h-2 z M762 792 h2 V835 h-2 z M766 795 h2 V835 h-2 z M770 798 h2 V835 h-2 z M774 800 h2 V835 h-2 z M778 799 h2 V835 h-2 z M782 798 h2 V835 h-2 z M786 798 h2 V835 h-2 z M790 802 h2 V835 h-2 z M793 804 h2 V835 h-2 z M797 802 h2 V835 h-2 z M801 801 h2 V835 h-2 z M805 802 h2 V835 h-2 z M809 809 h2 V835 h-2 z M813 812 h2 V835 h-2 z M817 815 h2 V835 h-2 z M821 816 h2 V835 h-2 z M824 814 h2 V835 h-2 z M828 817 h2 V835 h-2 z M832 820 h2 V835 h-2 z M836 822 h2 V835 h-2 z M840 824 h2 V835 h-2 z M844 826 h2 V835 h-2 z M848 826 h2 V835 h-2 z M852 827 h2 V835 h-2 z M856 831 h2 V835 h-2 z M859 832 h2 V835 h-2 z M863 830 h2 V835 h-2 z M867 830 h2 V835 h-2 z M871 830 h2 V835 h-2 z M875 830 h2 V835 h-2 z M879 831 h2 V835 h-2 z M883 832 h2 V835 h-2 z M887 833 h2 V835 h-2 z M890 832 h2 V835 h-2 z M894 830 h2 V835 h-2 z M898 826 h2 V835 h-2 z M902 825 h2 V835 h-2 z M906 826 h2 V835 h-2 z M910 828 h2 V835 h-2 z M914 828 h2 V835 h-2 z M918 823 h2 V835 h-2 z M922 823 h2 V835 h-2 z M925 824 h2 V835 h-2 z M929 831 h2 V835 h-2 z M972 834 h2 V835 h-2 z M976 826 h2 V835 h-2 z M980 828 h2 V835 h-2 z M984 823 h2 V835 h-2 z M988 825 h2 V835 h-2 z M991 827 h2 V835 h-2 z M995 827 h2 V835 h-2 z M999 824 h2 V835 h-2 z M1003 809 h2 V835 h-2 z M1007 797 h2 V835 h-2 z M1011 790 h2 V835 h-2 z M1015 775 h2 V835 h-2 z M1019 756 h2 V835 h-2 z M1023 743 h2 V835 h-2 z M1026 731 h2 V835 h-2 z M1030 725 h2 V835 h-2 z M1034 723 h2 V835 h-2 z M1038 722 h2 V835 h-2 z M1042 708 h2 V835 h-2 z M1046 699 h2 V835 h-2 z M1050 698 h2 V835 h-2 z M1054 699 h2 V835 h-2 z M1057 703 h2 V835 h-2 z M1061 704 h2 V835 h-2 z M1065 703 h2 V835 h-2 z M1069 702 h2 V835 h-2 z M1073 701 h2 V835 h-2 z M1077 710 h2 V835 h-2 z M1081 716 h2 V835 h-2 z M1085 724 h2 V835 h-2 z M1089 730 h2 V835 h-2 z M1092 733 h2 V835 h-2 z M1096 742 h2 V835 h-2 z M1100 748 h2 V835 h-2 z M1104 756 h2 V835 h-2 z M1108 771 h2 V835 h-2 z M1112 782 h2 V835 h-2 z M1116 790 h2 V835 h-2 z M1120 797 h2 V835 h-2 z M1124 802 h2 V835 h-2 z M1127 805 h2 V835 h-2 z M1131 807 h2 V835 h-2 z M1135 806 h2 V835 h-2 z M1139 806 h2 V835 h-2 z M1143 810 h2 V835 h-2 z M1147 815 h2 V835 h-2 z M1151 815 h2 V835 h-2 z M1155 817 h2 V835 h-2 z M1158 820 h2 V835 h-2 z M1162 815 h2 V835 h-2 z M1166 807 h2 V835 h-2 z M1170 800 h2 V835 h-2 z M1174 805 h2 V835 h-2 z M1178 812 h2 V835 h-2 z M1182 813 h2 V835 h-2 z M1186 812 h2 V835 h-2 z M1190 811 h2 V835 h-2 z M1193 805 h2 V835 h-2 z M1197 786 h2 V835 h-2 z M1201 775 h2 V835 h-2 z M1205 770 h2 V835 h-2 z M1209 761 h2 V835 h-2 z M1213 761 h2 V835 h-2 z M1217 769 h2 V835 h-2 z M1221 777 h2 V835 h-2 z M1224 780 h2 V835 h-2 z M1228 785 h2 V835 h-2 z M1232 784 h2 V835 h-2 z M1236 781 h2 V835 h-2 z M1240 781 h2 V835 h-2 z M1244 788 h2 V835 h-2 z M1248 799 h2 V835 h-2 z M1252 816 h2 V835 h-2 z M1256 833 h2 V835 h-2 z M1314 833 h2 V835 h-2 z M1322 831 h2 V835 h-2 z M1325 828 h2 V835 h-2 z M1329 830 h2 V835 h-2 z M1333 829 h2 V835 h-2 z M1337 830 h2 V835 h-2 z M1341 825 h2 V835 h-2 z M1345 817 h2 V835 h-2 z M1349 810 h2 V835 h-2 z M1353 803 h2 V835 h-2 z M1357 795 h2 V835 h-2 z M1360 799 h2 V835 h-2 z M1364 792 h2 V835 h-2 z M1368 791 h2 V835 h-2 z M1372 792 h2 V835 h-2 z M1376 792 h2 V835 h-2 z M1380 792 h2 V835 h-2 z M1384 794 h2 V835 h-2 z M1388 797 h2 V835 h-2 z M1391 805 h2 V835 h-2 z M1395 808 h2 V835 h-2 z M1399 804 h2 V835 h-2 z M1403 789 h2 V835 h-2 z M1407 784 h2 V835 h-2 z M1411 779 h2 V835 h-2 z" fill="#a8f0a0" shape-rendering="crispEdges"/>
<path d="M9 835 h2 V850 h-2 z M13 835 h2 V848 h-2 z M17 835 h2 V845 h-2 z M21 835 h2 V842 h-2 z M24 835 h2 V837 h-2 z M28 835 h2 V837 h-2 z M32 835 h2 V837 h-2 z M36 835 h2 V837 h-2 z M40 835 h2 V842 h-2 z M44 835 h2 V844 h-2 z M48 835 h2 V847 h-2 z M52 835 h2 V849 h-2 z M56 835 h2 V850 h-2 z M59 835 h2 V850 h-2 z M63 835 h2 V849 h-2 z M67 835 h2 V852 h-2 z M71 835 h2 V853 h-2 z M75 835 h2 V852 h-2 z M79 835 h2 V852 h-2 z M83 835 h2 V853 h-2 z M87 835 h2 V849 h-2 z M90 835 h2 V847 h-2 z M94 835 h2 V845 h-2 z M98 835 h2 V844 h-2 z M102 835 h2 V843 h-2 z M106 835 h2 V843 h-2 z M110 835 h2 V843 h-2 z M114 835 h2 V842 h-2 z M118 835 h2 V842 h-2 z M122 835 h2 V841 h-2 z M125 835 h2 V841 h-2 z M129 835 h2 V838 h-2 z M207 835 h2 V838 h-2 z M211 835 h2 V839 h-2 z M215 835 h2 V840 h-2 z M219 835 h2 V842 h-2 z M223 835 h2 V843 h-2 z M226 835 h2 V844 h-2 z M230 835 h2 V845 h-2 z M234 835 h2 V849 h-2 z M238 835 h2 V851 h-2 z M242 835 h2 V853 h-2 z M246 835 h2 V858 h-2 z M250 835 h2 V864 h-2 z M254 835 h2 V862 h-2 z M257 835 h2 V861 h-2 z M261 835 h2 V861 h-2 z M265 835 h2 V862 h-2 z M269 835 h2 V864 h-2 z M273 835 h2 V862 h-2 z M277 835 h2 V858 h-2 z M281 835 h2 V855 h-2 z M285 835 h2 V855 h-2 z M289 835 h2 V855 h-2 z M292 835 h2 V856 h-2 z M296 835 h2 V857 h-2 z M300 835 h2 V859 h-2 z M304 835 h2 V860 h-2 z M308 835 h2 V861 h-2 z M312 835 h2 V859 h-2 z M316 835 h2 V856 h-2 z M320 835 h2 V855 h-2 z M323 835 h2 V855 h-2 z M327 835 h2 V854 h-2 z M331 835 h2 V854 h-2 z M335 835 h2 V854 h-2 z M339 835 h2 V853 h-2 z M343 835 h2 V852 h-2 z M347 835 h2 V850 h-2 z M351 835 h2 V849 h-2 z M355 835 h2 V848 h-2 z M358 835 h2 V844 h-2 z M506 835 h2 V839 h-2 z M510 835 h2 V842 h-2 z M514 835 h2 V841 h-2 z M518 835 h2 V841 h-2 z M522 835 h2 V842 h-2 z M525 835 h2 V843 h-2 z M529 835 h2 V841 h-2 z M549 835 h2 V839 h-2 z M553 835 h2 V843 h-2 z M556 835 h2 V846 h-2 z M560 835 h2 V850 h-2 z M564 835 h2 V853 h-2 z M568 835 h2 V855 h-2 z M572 835 h2 V857 h-2 z M576 835 h2 V857 h-2 z M580 835 h2 V857 h-2 z M584 835 h2 V860 h-2 z M588 835 h2 V865 h-2 z M591 835 h2 V865 h-2 z M595 835 h2 V863 h-2 z M599 835 h2 V861 h-2 z M603 835 h2 V859 h-2 z M607 835 h2 V857 h-2 z M611 835 h2 V855 h-2 z M615 835 h2 V855 h-2 z M619 835 h2 V854 h-2 z M623 835 h2 V853 h-2 z M626 835 h2 V852 h-2 z M630 835 h2 V851 h-2 z M634 835 h2 V850 h-2 z M638 835 h2 V850 h-2 z M642 835 h2 V849 h-2 z M646 835 h2 V848 h-2 z M650 835 h2 V847 h-2 z M654 835 h2 V845 h-2 z M657 835 h2 V844 h-2 z M661 835 h2 V842 h-2 z M665 835 h2 V839 h-2 z M669 835 h2 V837 h-2 z M673 835 h2 V837 h-2 z M677 835 h2 V837 h-2 z M681 835 h2 V837 h-2 z M685 835 h2 V837 h-2 z M689 835 h2 V838 h-2 z M692 835 h2 V840 h-2 z M696 835 h2 V842 h-2 z M700 835 h2 V845 h-2 z M704 835 h2 V847 h-2 z M708 835 h2 V848 h-2 z M712 835 h2 V852 h-2 z M716 835 h2 V854 h-2 z M720 835 h2 V851 h-2 z M723 835 h2 V850 h-2 z M727 835 h2 V850 h-2 z M731 835 h2 V849 h-2 z M735 835 h2 V849 h-2 z M739 835 h2 V842 h-2 z M933 835 h2 V839 h-2 z M937 835 h2 V844 h-2 z M941 835 h2 V843 h-2 z M945 835 h2 V844 h-2 z M949 835 h2 V850 h-2 z M953 835 h2 V852 h-2 z M957 835 h2 V852 h-2 z M960 835 h2 V848 h-2 z M964 835 h2 V845 h-2 z M968 835 h2 V843 h-2 z M1259 835 h2 V842 h-2 z M1263 835 h2 V852 h-2 z M1267 835 h2 V862 h-2 z M1271 835 h2 V864 h-2 z M1275 835 h2 V866 h-2 z M1279 835 h2 V867 h-2 z M1283 835 h2 V868 h-2 z M1287 835 h2 V870 h-2 z M1290 835 h2 V874 h-2 z M1294 835 h2 V871 h-2 z M1298 835 h2 V867 h-2 z M1302 835 h2 V860 h-2 z M1306 835 h2 V844 h-2 z M1318 835 h2 V837 h-2 z" fill="#ffb0fc" shape-rendering="crispEdges"/>
<rect x="1386" y="684" width="3" height="194" fill="#b0b0f3"/>
<line x1="1057.5" y1="697.5" x2="1452" y2="793.2" stroke="#ff0000" stroke-width="1.15" shape-rendering="crispEdges"/>
<path d="M1466.3 796.8 L1450 798.5 L1453 790.5 Z" fill="#ff0000"/>
<text x="1302.5" y="745.5" fill="#fff" text-anchor="start" textLength="63.5">Phan ky am</text>
<text x="10.8" y="697.8" fill="#c9c2ff" font-size="13.7" font-weight="bold" textLength="195.5" lengthAdjust="spacingAndGlyphs" font-family="'DejaVu Sans', sans-serif">PRASAD ANALYTICS - EWO</text>
<text x="11.5" y="718" fill="#ffa934" font-size="13.7" font-weight="bold" textLength="31" lengthAdjust="spacingAndGlyphs" font-family="'DejaVu Sans', sans-serif">ACB</text>
<text x="54" y="718" fill="#ffa934" font-size="13.7" font-weight="bold" textLength="70" lengthAdjust="spacingAndGlyphs" font-family="'DejaVu Sans', sans-serif">6/1/2017</text>
<text x="373.5" y="698.5" fill="#ff5a5a" font-size="13.7" font-weight="bold" textLength="65.5" lengthAdjust="spacingAndGlyphs" font-family="'DejaVu Sans', sans-serif">Trend Dn</text>
<path d="M1610.5 788.5 L1617.5 781 H1669 V796 H1617.5 Z" fill="#ff0000"/>
<text x="1621.5" y="793" fill="#000" text-anchor="start" >1.03688</text>
<rect x="31" y="879" width="30.0" height="14" fill="#fff"/>
<text x="32.2" y="889.4" fill="#000" text-anchor="start"  font-weight="bold">2016</text>
<rect x="109" y="879" width="23.0" height="14" fill="#fff"/>
<text x="110.2" y="889.4" fill="#000" text-anchor="start" >Feb</text>
<rect x="171" y="879" width="23.0" height="14" fill="#fff"/>
<text x="172.2" y="889.4" fill="#000" text-anchor="start" >Mar</text>
<rect x="260" y="879" width="21.0" height="14" fill="#fff"/>
<text x="261.2" y="889.4" fill="#000" text-anchor="start" >Apr</text>
<rect x="338" y="879" width="23.0" height="14" fill="#fff"/>
<text x="339.2" y="889.4" fill="#000" text-anchor="start"  textLength="21" lengthAdjust="spacingAndGlyphs">May</text>
<rect x="415" y="879" width="22.0" height="14" fill="#fff"/>
<text x="416.2" y="889.4" fill="#000" text-anchor="start" >Jun</text>
<rect x="501" y="879" width="18.5" height="14" fill="#fff"/>
<text x="502.2" y="889.4" fill="#000" text-anchor="start" >Jul</text>
<rect x="582" y="879" width="22.5" height="14" fill="#fff"/>
<text x="583.2" y="889.4" fill="#000" text-anchor="start" >Aug</text>
<rect x="671" y="879" width="23.5" height="14" fill="#fff"/>
<text x="672.2" y="889.4" fill="#000" text-anchor="start" >Sep</text>
<rect x="753" y="879" width="20.5" height="14" fill="#fff"/>
<text x="754.2" y="889.4" fill="#000" text-anchor="start" >Oct</text>
<rect x="834" y="879" width="22.5" height="14" fill="#fff"/>
<text x="835.2" y="889.4" fill="#000" text-anchor="start" >Nov</text>
<rect x="920" y="879" width="23.0" height="14" fill="#fff"/>
<text x="921.2" y="889.4" fill="#000" text-anchor="start" >Dec</text>
<rect x="1005" y="879" width="30.0" height="14" fill="#fff"/>
<text x="1006.2" y="889.4" fill="#000" text-anchor="start"  font-weight="bold">2017</text>
<rect x="1071" y="879" width="23.0" height="14" fill="#fff"/>
<text x="1072.2" y="889.4" fill="#000" text-anchor="start" >Feb</text>
<rect x="1145" y="879" width="23.0" height="14" fill="#fff"/>
<text x="1146.2" y="889.4" fill="#000" text-anchor="start" >Mar</text>
<rect x="1234" y="879" width="21.0" height="14" fill="#fff"/>
<text x="1235.2" y="889.4" fill="#000" text-anchor="start" >Apr</text>
<rect x="1308" y="879" width="23.0" height="14" fill="#fff"/>
<text x="1309.2" y="889.4" fill="#000" text-anchor="start"  textLength="21" lengthAdjust="spacingAndGlyphs">May</text>
<rect x="1389" y="879" width="22.0" height="14" fill="#fff"/>
<text x="1390.2" y="889.4" fill="#000" text-anchor="start" >Jun</text>
<text x="1356" y="864" fill="#828282" font-size="20.5" textLength="157">Activate Windows</text>
<text x="1356" y="885" fill="#828282" font-size="15" textLength="236">Go to Settings to activate Windows.</text>
<rect x="5" y="894" width="1665" height="5" fill="#f0f0f0"/>
<rect x="1487" y="895" width="166" height="4" fill="#c9c9c9"/>
<path d="M69 894 L72 899 H135 V894 Z" fill="#fff"/>
<rect x="21" y="895" width="1" height="4" fill="#a0a0a0"/>
<rect x="37" y="895" width="1" height="4" fill="#a0a0a0"/>
<rect x="53" y="895" width="1" height="4" fill="#a0a0a0"/>
<text x="81.0" y="905.5" font-size="11.5" fill="#000" font-weight="bold">Sheet 1</text>
<text x="134.8" y="905.5" font-size="11.5" fill="#707070">Sheet 2</text>
<path d="M129.8 894 l3 5" stroke="#9a9a9a" fill="none"/>
<text x="188.6" y="905.5" font-size="11.5" fill="#707070">Sheet 3</text>
<path d="M183.6 894 l3 5" stroke="#9a9a9a" fill="none"/>
<text x="242.4" y="905.5" font-size="11.5" fill="#707070">Sheet 4</text>
<path d="M237.4 894 l3 5" stroke="#9a9a9a" fill="none"/>
<text x="296.2" y="905.5" font-size="11.5" fill="#707070">Sheet 5</text>
<path d="M291.2 894 l3 5" stroke="#9a9a9a" fill="none"/>
<text x="350.0" y="905.5" font-size="11.5" fill="#707070">Sheet 6</text>
<path d="M345.0 894 l3 5" stroke="#9a9a9a" fill="none"/>
<text x="403.8" y="905.5" font-size="11.5" fill="#707070">Sheet 7</text>
<path d="M398.8 894 l3 5" stroke="#9a9a9a" fill="none"/>
<text x="457.6" y="905.5" font-size="11.5" fill="#707070">Sheet 8</text>
<path d="M452.6 894 l3 5" stroke="#9a9a9a" fill="none"/>
<rect x="509" y="895" width="1" height="4" fill="#b0b0b0"/>
<rect x="526" y="895" width="1" height="4" fill="#b0b0b0"/>
<rect x="543" y="895" width="1" height="4" fill="#b0b0b0"/>
<rect x="559" y="895" width="1" height="4" fill="#b0b0b0"/>
</svg>
</body></html>
